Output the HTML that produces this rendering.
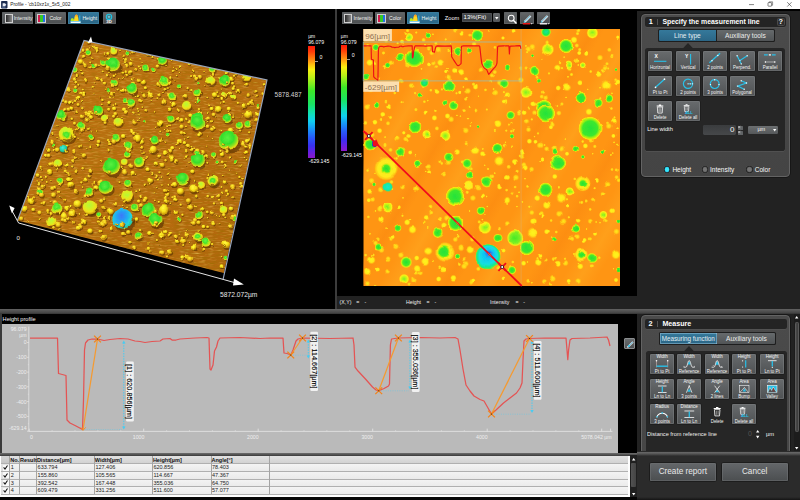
<!DOCTYPE html>
<html><head><meta charset="utf-8"><title>Profile</title>
<style>
html,body{margin:0;padding:0;background:#000;}
body{width:800px;height:500px;overflow:hidden;position:relative;font-family:"Liberation Sans",sans-serif;}
div{font-family:"Liberation Sans",sans-serif;}
svg{overflow:visible;display:block}
</style></head><body>
<div style="position:absolute;left:0px;top:0px;width:800px;height:8.8px;background:#fff"></div>
<svg style="position:absolute;left:0.8px;top:0.7px" width="6.6" height="7.4" viewBox="0 0 6.6 7.6"><rect width="6.6" height="7.6" rx=".8" fill="#1c2c50"/><path d="M1.6 2.4h2.4l1.4 1.5-1.4 1.5h-2.4z" fill="#e8ecf4"/><rect x="1" y="5.8" width="3.6" height=".8" fill="#8aa0c8"/></svg>
<div style="position:absolute;left:10.2px;top:1.5px;font-size:4.8px;line-height:5.76px;color:#222;font-weight:normal;white-space:nowrap;">Profile - 'cb10xz1x_5x5_002</div>
<svg style="position:absolute;left:740px;top:-0.4px" width="60" height="9.6" viewBox="740 0 60 9.6"><path d="M749 4.6h5" stroke="#333" stroke-width=".6"/><rect x="768" y="2.6" width="3.6" height="3.6" rx=".5" fill="none" stroke="#333" stroke-width=".6"/><path d="M769.2 2.6v-.8h3.4v3.4h-.9" fill="none" stroke="#333" stroke-width=".5"/><path d="M787.2 2.2l4.4 4.4M791.6 2.2l-4.4 4.4" stroke="#333" stroke-width=".6"/></svg>
<div style="position:absolute;left:637px;top:11.4px;width:163px;height:298px;background:#222"></div>
<div style="position:absolute;left:337px;top:295.8px;width:300px;height:13.4px;background:#222"></div>
<div style="position:absolute;left:335.4px;top:8.8px;width:1.6px;height:300px;background:linear-gradient(90deg,#2a2a2a,#4e4e4e,#2a2a2a)"></div>
<div style="position:absolute;left:0px;top:308.8px;width:800px;height:4.8px;background:linear-gradient(#626262,#545454 35%,#444 80%,#303030)"></div>
<div style="position:absolute;left:2.6px;top:316px;font-size:5.6px;line-height:6.72px;color:#f4f4f4;font-weight:normal;white-space:nowrap;">Height profile</div>
<div style="position:absolute;left:1.6px;top:324px;width:616.6px;height:128.5px;background:#bababa"></div>
<div style="position:absolute;left:0px;top:313.6px;width:1.6px;height:139px;background:#3a3a3a"></div>
<svg style="position:absolute;left:0;top:0" width="800" height="500" viewBox="0 0 800 500">
<defs>
<radialGradient id="hG"><stop offset="0" stop-color="#24e23c"/><stop offset=".62" stop-color="#3ce82e"/><stop offset=".82" stop-color="#b8f010"/><stop offset=".93" stop-color="#ffe610"/><stop offset="1" stop-color="#ffb414" stop-opacity="0"/></radialGradient>
<radialGradient id="hg"><stop offset="0" stop-color="#22e234"/><stop offset=".55" stop-color="#4cea28"/><stop offset=".8" stop-color="#d8f010"/><stop offset="1" stop-color="#ffc814" stop-opacity="0"/></radialGradient>
<radialGradient id="hy"><stop offset="0" stop-color="#fdf520"/><stop offset=".55" stop-color="#ffe818"/><stop offset="1" stop-color="#ffc010" stop-opacity="0"/></radialGradient>
<radialGradient id="hs"><stop offset="0" stop-color="#ffe61c"/><stop offset=".5" stop-color="#ffd818" stop-opacity=".9"/><stop offset="1" stop-color="#ffb010" stop-opacity="0"/></radialGradient>
<radialGradient id="hyg"><stop offset="0" stop-color="#7cf024"/><stop offset=".45" stop-color="#c8f418"/><stop offset=".75" stop-color="#fff018"/><stop offset="1" stop-color="#ffc010" stop-opacity="0"/></radialGradient>
<radialGradient id="hyG"><stop offset="0" stop-color="#48ea28"/><stop offset=".6" stop-color="#7cf024"/><stop offset=".85" stop-color="#f0f018"/><stop offset="1" stop-color="#ffc010" stop-opacity="0"/></radialGradient>
<radialGradient id="hY"><stop offset="0" stop-color="#f0f428"/><stop offset=".68" stop-color="#ffea1c"/><stop offset=".85" stop-color="#ffd416" stop-opacity=".8"/><stop offset="1" stop-color="#ffb010" stop-opacity="0"/></radialGradient>
<radialGradient id="hc"><stop offset="0" stop-color="#10e8d0"/><stop offset=".7" stop-color="#18e8a0"/><stop offset="1" stop-color="#60f040" stop-opacity="0"/></radialGradient>
<radialGradient id="hgc"><stop offset="0" stop-color="#10e4a0"/><stop offset=".6" stop-color="#20e650"/><stop offset=".85" stop-color="#b0f018"/><stop offset="1" stop-color="#ffc814" stop-opacity="0"/></radialGradient>
<radialGradient id="hB" cx=".5" cy=".5" r=".5" fx=".55" fy=".3"><stop offset="0" stop-color="#2454f0"/><stop offset=".16" stop-color="#1c84f8"/><stop offset=".38" stop-color="#10c4f4"/><stop offset=".7" stop-color="#14e0e0"/><stop offset=".86" stop-color="#18e890"/><stop offset=".95" stop-color="#60ee40"/><stop offset="1" stop-color="#e0f018" stop-opacity="0"/></radialGradient>
<linearGradient id="streak" x1="0" y1="0" x2="1" y2="0"><stop offset="0" stop-color="#ffa820" stop-opacity="0"/><stop offset=".5" stop-color="#ffa820" stop-opacity=".55"/><stop offset="1" stop-color="#ffa820" stop-opacity="0"/></linearGradient>
<linearGradient id="streakd" x1="0" y1="0" x2="1" y2="0"><stop offset="0" stop-color="#fb8a10" stop-opacity="0"/><stop offset=".5" stop-color="#fb8a10" stop-opacity=".6"/><stop offset="1" stop-color="#fb8a10" stop-opacity="0"/></linearGradient>
<clipPath id="hclip"><rect x="363.3" y="29" width="256.7" height="257"/></clipPath>
<filter id="hwob" x="-2%" y="-2%" width="104%" height="104%"><feTurbulence type="fractalNoise" baseFrequency="0.09" numOctaves="2" seed="9" result="t"/><feDisplacementMap in="SourceGraphic" in2="t" scale="3" xChannelSelector="R" yChannelSelector="G"/></filter>
</defs>
<g clip-path="url(#hclip)">
<rect x="363.3" y="29" width="256.7" height="257" fill="#ff9513"/>
<rect x="367.0" y="-60" width="26" height="460" fill="url(#streak)" transform="rotate(30 380 157)"/>
<rect x="421.0" y="-60" width="18" height="460" fill="url(#streakd)" transform="rotate(30 430 157)"/>
<rect x="455.0" y="-60" width="30" height="460" fill="url(#streak)" transform="rotate(30 470 157)"/>
<rect x="510.0" y="-60" width="20" height="460" fill="url(#streakd)" transform="rotate(30 520 157)"/>
<rect x="547.0" y="-60" width="26" height="460" fill="url(#streak)" transform="rotate(30 560 157)"/>
<rect x="599.0" y="-60" width="22" height="460" fill="url(#streakd)" transform="rotate(30 610 157)"/>
<rect x="635.0" y="-60" width="30" height="460" fill="url(#streak)" transform="rotate(30 650 157)"/>
<rect x="318.0" y="-60" width="24" height="460" fill="url(#streakd)" transform="rotate(30 330 157)"/>
<rect x="688.0" y="-60" width="24" height="460" fill="url(#streakd)" transform="rotate(30 700 157)"/>
<g filter="url(#hwob)">
<circle cx="446.9" cy="68.5" r="1.22" fill="url(#hs)"/>
<circle cx="382.9" cy="166.6" r="2.56" fill="url(#hs)"/>
<circle cx="512.8" cy="262.0" r="1.89" fill="url(#hs)"/>
<circle cx="374.0" cy="140.6" r="1.35" fill="url(#hs)"/>
<circle cx="425.7" cy="170.5" r="1.22" fill="url(#hs)"/>
<circle cx="574.9" cy="61.6" r="1.89" fill="url(#hs)"/>
<circle cx="525.0" cy="178.7" r="1.22" fill="url(#hs)"/>
<circle cx="511.4" cy="131.2" r="1.89" fill="url(#hs)"/>
<circle cx="376.4" cy="248.9" r="2.16" fill="url(#hs)"/>
<circle cx="471.2" cy="167.9" r="2.16" fill="url(#hs)"/>
<circle cx="507.1" cy="203.9" r="1.35" fill="url(#hs)"/>
<circle cx="512.5" cy="192.9" r="2.56" fill="url(#hs)"/>
<circle cx="389.3" cy="211.6" r="1.22" fill="url(#hs)"/>
<circle cx="522.0" cy="156.6" r="2.97" fill="url(#hs)"/>
<circle cx="562.3" cy="148.7" r="3.51" fill="url(#hs)"/>
<circle cx="456.5" cy="93.3" r="1.62" fill="url(#hs)"/>
<circle cx="542.4" cy="92.2" r="2.16" fill="url(#hs)"/>
<circle cx="498.2" cy="253.2" r="3.51" fill="url(#hs)"/>
<circle cx="437.8" cy="279.9" r="1.35" fill="url(#hs)"/>
<circle cx="494.8" cy="72.1" r="2.56" fill="url(#hs)"/>
<circle cx="403.2" cy="154.7" r="1.22" fill="url(#hs)"/>
<circle cx="609.3" cy="49.8" r="2.56" fill="url(#hs)"/>
<circle cx="451.1" cy="119.3" r="3.51" fill="url(#hs)"/>
<circle cx="512.1" cy="146.3" r="1.35" fill="url(#hs)"/>
<circle cx="604.9" cy="150.9" r="1.35" fill="url(#hs)"/>
<circle cx="379.9" cy="208.9" r="3.51" fill="url(#hs)"/>
<circle cx="436.9" cy="128.4" r="2.56" fill="url(#hs)"/>
<circle cx="370.2" cy="147.7" r="1.62" fill="url(#hs)"/>
<circle cx="520.0" cy="155.9" r="1.89" fill="url(#hs)"/>
<circle cx="560.0" cy="63.0" r="1.89" fill="url(#hs)"/>
<circle cx="465.8" cy="263.8" r="3.51" fill="url(#hs)"/>
<circle cx="385.0" cy="144.5" r="2.16" fill="url(#hs)"/>
<circle cx="589.3" cy="238.9" r="2.16" fill="url(#hs)"/>
<circle cx="544.3" cy="281.5" r="2.97" fill="url(#hs)"/>
<circle cx="608.2" cy="68.5" r="1.62" fill="url(#hs)"/>
<circle cx="403.0" cy="197.9" r="1.22" fill="url(#hs)"/>
<circle cx="487.9" cy="180.2" r="2.16" fill="url(#hs)"/>
<circle cx="436.3" cy="67.1" r="2.56" fill="url(#hs)"/>
<circle cx="519.7" cy="111.2" r="1.62" fill="url(#hs)"/>
<circle cx="540.2" cy="161.5" r="1.22" fill="url(#hs)"/>
<circle cx="480.7" cy="252.1" r="2.97" fill="url(#hs)"/>
<circle cx="465.8" cy="130.5" r="3.51" fill="url(#hs)"/>
<circle cx="525.9" cy="45.9" r="1.35" fill="url(#hs)"/>
<circle cx="615.1" cy="142.4" r="1.35" fill="url(#hs)"/>
<circle cx="451.0" cy="43.4" r="1.22" fill="url(#hs)"/>
<circle cx="508.7" cy="166.8" r="2.56" fill="url(#hs)"/>
<circle cx="520.7" cy="47.9" r="1.89" fill="url(#hs)"/>
<circle cx="520.8" cy="67.9" r="2.16" fill="url(#hs)"/>
<circle cx="607.7" cy="183.6" r="3.51" fill="url(#hs)"/>
<circle cx="395.8" cy="246.5" r="3.51" fill="url(#hs)"/>
<circle cx="486.8" cy="109.5" r="1.62" fill="url(#hs)"/>
<circle cx="390.5" cy="117.4" r="2.16" fill="url(#hs)"/>
<circle cx="486.3" cy="206.5" r="1.22" fill="url(#hs)"/>
<circle cx="416.7" cy="272.8" r="2.56" fill="url(#hs)"/>
<circle cx="401.8" cy="168.5" r="1.22" fill="url(#hs)"/>
<circle cx="557.4" cy="106.0" r="1.35" fill="url(#hs)"/>
<circle cx="541.7" cy="96.6" r="2.56" fill="url(#hs)"/>
<circle cx="595.7" cy="120.7" r="1.89" fill="url(#hs)"/>
<circle cx="500.0" cy="228.7" r="2.56" fill="url(#hs)"/>
<circle cx="526.5" cy="186.4" r="1.89" fill="url(#hs)"/>
<circle cx="569.6" cy="238.7" r="1.89" fill="url(#hs)"/>
<circle cx="415.4" cy="155.7" r="1.22" fill="url(#hs)"/>
<circle cx="616.4" cy="231.5" r="3.51" fill="url(#hs)"/>
<circle cx="430.5" cy="206.6" r="2.56" fill="url(#hs)"/>
<circle cx="478.3" cy="268.9" r="2.56" fill="url(#hs)"/>
<circle cx="607.5" cy="123.0" r="1.89" fill="url(#hs)"/>
<circle cx="390.5" cy="149.9" r="2.56" fill="url(#hs)"/>
<circle cx="416.5" cy="189.1" r="1.22" fill="url(#hs)"/>
<circle cx="486.5" cy="196.5" r="1.35" fill="url(#hs)"/>
<circle cx="576.9" cy="60.6" r="2.97" fill="url(#hs)"/>
<circle cx="563.6" cy="221.3" r="3.51" fill="url(#hs)"/>
<circle cx="590.8" cy="140.7" r="2.56" fill="url(#hs)"/>
<circle cx="386.6" cy="271.3" r="2.97" fill="url(#hs)"/>
<circle cx="482.4" cy="219.6" r="1.35" fill="url(#hs)"/>
<circle cx="549.0" cy="73.4" r="1.62" fill="url(#hs)"/>
<circle cx="371.5" cy="180.7" r="3.51" fill="url(#hs)"/>
<circle cx="569.8" cy="67.3" r="3.51" fill="url(#hs)"/>
<circle cx="531.8" cy="119.4" r="1.62" fill="url(#hs)"/>
<circle cx="369.9" cy="233.8" r="1.35" fill="url(#hs)"/>
<circle cx="498.5" cy="268.1" r="2.97" fill="url(#hs)"/>
<circle cx="615.6" cy="79.7" r="1.89" fill="url(#hs)"/>
<circle cx="371.6" cy="84.3" r="1.89" fill="url(#hs)"/>
<circle cx="558.9" cy="113.1" r="2.97" fill="url(#hs)"/>
<circle cx="576.8" cy="45.5" r="2.56" fill="url(#hs)"/>
<circle cx="593.0" cy="198.9" r="2.97" fill="url(#hs)"/>
<circle cx="575.0" cy="253.9" r="1.62" fill="url(#hs)"/>
<circle cx="499.8" cy="163.5" r="1.22" fill="url(#hs)"/>
<circle cx="586.6" cy="228.0" r="1.22" fill="url(#hs)"/>
<circle cx="562.0" cy="68.2" r="1.62" fill="url(#hs)"/>
<circle cx="485.0" cy="214.9" r="1.22" fill="url(#hs)"/>
<circle cx="447.5" cy="162.2" r="3.51" fill="url(#hs)"/>
<circle cx="564.1" cy="57.1" r="1.22" fill="url(#hs)"/>
<circle cx="427.7" cy="100.6" r="1.35" fill="url(#hs)"/>
<circle cx="493.7" cy="173.2" r="1.35" fill="url(#hs)"/>
<circle cx="477.3" cy="186.2" r="1.89" fill="url(#hs)"/>
<circle cx="540.8" cy="145.3" r="3.51" fill="url(#hs)"/>
<circle cx="493.7" cy="93.2" r="2.16" fill="url(#hs)"/>
<circle cx="599.3" cy="257.7" r="1.89" fill="url(#hs)"/>
<circle cx="578.3" cy="65.0" r="1.35" fill="url(#hs)"/>
<circle cx="464.4" cy="110.6" r="1.89" fill="url(#hs)"/>
<circle cx="473.5" cy="84.2" r="2.16" fill="url(#hs)"/>
<circle cx="564.0" cy="258.7" r="1.62" fill="url(#hs)"/>
<circle cx="603.6" cy="194.1" r="2.56" fill="url(#hs)"/>
<circle cx="400.9" cy="255.1" r="3.51" fill="url(#hs)"/>
<circle cx="420.4" cy="272.9" r="2.97" fill="url(#hs)"/>
<circle cx="589.7" cy="71.5" r="1.89" fill="url(#hs)"/>
<circle cx="405.6" cy="140.0" r="2.97" fill="url(#hs)"/>
<circle cx="450.8" cy="79.9" r="2.56" fill="url(#hs)"/>
<circle cx="388.0" cy="123.3" r="2.56" fill="url(#hs)"/>
<circle cx="505.5" cy="142.3" r="1.22" fill="url(#hs)"/>
<circle cx="462.3" cy="161.9" r="2.16" fill="url(#hs)"/>
<circle cx="494.9" cy="46.4" r="1.89" fill="url(#hs)"/>
<circle cx="611.8" cy="56.7" r="2.16" fill="url(#hs)"/>
<circle cx="433.7" cy="261.0" r="1.62" fill="url(#hs)"/>
<circle cx="433.3" cy="63.0" r="2.97" fill="url(#hs)"/>
<circle cx="580.7" cy="202.4" r="2.16" fill="url(#hs)"/>
<circle cx="467.8" cy="166.8" r="3.51" fill="url(#hs)"/>
<circle cx="542.8" cy="52.8" r="1.22" fill="url(#hs)"/>
<circle cx="568.0" cy="76.8" r="1.35" fill="url(#hs)"/>
<circle cx="432.9" cy="34.3" r="1.35" fill="url(#hs)"/>
<circle cx="568.5" cy="51.4" r="1.89" fill="url(#hs)"/>
<circle cx="381.5" cy="250.0" r="3.51" fill="url(#hs)"/>
<circle cx="367.4" cy="283.5" r="2.97" fill="url(#hs)"/>
<circle cx="600.3" cy="98.3" r="1.62" fill="url(#hs)"/>
<circle cx="375.5" cy="210.9" r="1.35" fill="url(#hs)"/>
<circle cx="611.2" cy="96.8" r="1.62" fill="url(#hs)"/>
<circle cx="415.9" cy="109.6" r="2.16" fill="url(#hs)"/>
<circle cx="499.7" cy="82.5" r="3.51" fill="url(#hs)"/>
<circle cx="491.8" cy="75.4" r="2.56" fill="url(#hs)"/>
<circle cx="569.0" cy="283.6" r="1.22" fill="url(#hs)"/>
<circle cx="368.4" cy="216.9" r="1.89" fill="url(#hs)"/>
<circle cx="495.4" cy="92.6" r="3.51" fill="url(#hs)"/>
<circle cx="391.5" cy="238.8" r="2.97" fill="url(#hs)"/>
<circle cx="531.6" cy="169.2" r="2.97" fill="url(#hs)"/>
<circle cx="611.4" cy="108.5" r="1.89" fill="url(#hs)"/>
<circle cx="614.5" cy="117.4" r="1.62" fill="url(#hs)"/>
<circle cx="467.5" cy="118.6" r="1.22" fill="url(#hs)"/>
<circle cx="577.5" cy="33.6" r="2.16" fill="url(#hs)"/>
<circle cx="474.1" cy="44.1" r="2.97" fill="url(#hs)"/>
<circle cx="586.1" cy="201.0" r="2.16" fill="url(#hs)"/>
<circle cx="516.9" cy="206.6" r="1.22" fill="url(#hs)"/>
<circle cx="481.4" cy="70.2" r="3.51" fill="url(#hs)"/>
<circle cx="365.4" cy="122.9" r="2.56" fill="url(#hs)"/>
<circle cx="612.0" cy="169.5" r="1.89" fill="url(#hs)"/>
<circle cx="373.3" cy="255.0" r="1.89" fill="url(#hs)"/>
<circle cx="455.3" cy="30.3" r="2.97" fill="url(#hs)"/>
<circle cx="385.9" cy="101.1" r="1.89" fill="url(#hs)"/>
<circle cx="427.7" cy="227.9" r="1.35" fill="url(#hs)"/>
<circle cx="431.7" cy="52.9" r="2.97" fill="url(#hs)"/>
<circle cx="513.8" cy="130.5" r="2.16" fill="url(#hs)"/>
<circle cx="441.9" cy="89.4" r="1.62" fill="url(#hs)"/>
<circle cx="531.8" cy="212.6" r="2.97" fill="url(#hs)"/>
<circle cx="559.0" cy="213.8" r="3.51" fill="url(#hs)"/>
<circle cx="402.5" cy="214.7" r="1.62" fill="url(#hs)"/>
<circle cx="375.6" cy="243.0" r="2.97" fill="url(#hs)"/>
<circle cx="551.3" cy="237.1" r="1.62" fill="url(#hs)"/>
<circle cx="596.1" cy="222.0" r="1.22" fill="url(#hs)"/>
<circle cx="574.8" cy="178.9" r="1.89" fill="url(#hs)"/>
<circle cx="386.2" cy="40.7" r="2.56" fill="url(#hs)"/>
<circle cx="608.7" cy="126.0" r="3.51" fill="url(#hs)"/>
<circle cx="506.6" cy="190.1" r="1.89" fill="url(#hs)"/>
<circle cx="489.0" cy="30.8" r="1.35" fill="url(#hs)"/>
<circle cx="554.9" cy="158.3" r="1.35" fill="url(#hs)"/>
<circle cx="532.3" cy="46.8" r="3.51" fill="url(#hs)"/>
<circle cx="428.7" cy="49.0" r="2.16" fill="url(#hs)"/>
<circle cx="424.3" cy="222.9" r="1.89" fill="url(#hs)"/>
<circle cx="552.8" cy="278.8" r="3.51" fill="url(#hs)"/>
<circle cx="579.7" cy="49.6" r="2.16" fill="url(#hs)"/>
<circle cx="559.7" cy="187.3" r="1.89" fill="url(#hs)"/>
<circle cx="384.2" cy="67.6" r="2.16" fill="url(#hs)"/>
<circle cx="530.3" cy="206.7" r="1.62" fill="url(#hs)"/>
<circle cx="367.7" cy="45.5" r="2.16" fill="url(#hs)"/>
<circle cx="612.0" cy="55.4" r="1.89" fill="url(#hs)"/>
<circle cx="536.5" cy="104.2" r="2.16" fill="url(#hs)"/>
<circle cx="482.8" cy="148.9" r="1.35" fill="url(#hs)"/>
<circle cx="617.3" cy="170.0" r="2.16" fill="url(#hs)"/>
<circle cx="613.4" cy="268.7" r="1.22" fill="url(#hs)"/>
<circle cx="438.2" cy="49.5" r="3.51" fill="url(#hs)"/>
<circle cx="617.5" cy="128.6" r="1.89" fill="url(#hs)"/>
<circle cx="383.5" cy="53.0" r="2.16" fill="url(#hs)"/>
<circle cx="607.0" cy="63.8" r="2.16" fill="url(#hs)"/>
<circle cx="590.2" cy="209.4" r="1.89" fill="url(#hs)"/>
<circle cx="491.2" cy="253.4" r="2.97" fill="url(#hs)"/>
<circle cx="370.8" cy="30.9" r="3.51" fill="url(#hs)"/>
<circle cx="538.0" cy="133.4" r="1.62" fill="url(#hs)"/>
<circle cx="470.4" cy="125.9" r="1.35" fill="url(#hs)"/>
<circle cx="578.3" cy="30.4" r="2.56" fill="url(#hs)"/>
<circle cx="578.1" cy="60.6" r="1.89" fill="url(#hs)"/>
<circle cx="546.0" cy="259.9" r="2.16" fill="url(#hs)"/>
<circle cx="428.9" cy="46.6" r="2.97" fill="url(#hs)"/>
<circle cx="618.7" cy="180.2" r="2.56" fill="url(#hs)"/>
<circle cx="600.0" cy="222.7" r="1.22" fill="url(#hs)"/>
<circle cx="435.9" cy="43.2" r="2.16" fill="url(#hs)"/>
<circle cx="526.1" cy="68.0" r="2.16" fill="url(#hs)"/>
<circle cx="475.5" cy="110.5" r="2.56" fill="url(#hs)"/>
<circle cx="564.3" cy="139.1" r="1.22" fill="url(#hs)"/>
<circle cx="571.1" cy="190.9" r="1.89" fill="url(#hs)"/>
<circle cx="547.6" cy="42.6" r="2.97" fill="url(#hs)"/>
<circle cx="479.2" cy="221.9" r="2.16" fill="url(#hs)"/>
<circle cx="488.1" cy="262.5" r="1.62" fill="url(#hs)"/>
<circle cx="408.0" cy="135.8" r="2.16" fill="url(#hs)"/>
<circle cx="440.3" cy="218.5" r="2.16" fill="url(#hs)"/>
<circle cx="467.9" cy="90.9" r="3.51" fill="url(#hs)"/>
<circle cx="506.3" cy="130.6" r="1.62" fill="url(#hs)"/>
<circle cx="528.2" cy="49.2" r="3.51" fill="url(#hs)"/>
<circle cx="504.6" cy="145.5" r="2.56" fill="url(#hs)"/>
<circle cx="618.1" cy="144.7" r="1.62" fill="url(#hs)"/>
<circle cx="503.9" cy="92.2" r="1.62" fill="url(#hs)"/>
<circle cx="451.5" cy="53.2" r="1.89" fill="url(#hs)"/>
<circle cx="458.2" cy="236.4" r="1.89" fill="url(#hs)"/>
<circle cx="590.3" cy="221.2" r="2.97" fill="url(#hs)"/>
<circle cx="461.9" cy="220.2" r="1.89" fill="url(#hs)"/>
<circle cx="460.4" cy="116.2" r="1.22" fill="url(#hs)"/>
<circle cx="491.3" cy="176.4" r="2.56" fill="url(#hs)"/>
<circle cx="396.5" cy="158.4" r="1.89" fill="url(#hs)"/>
<circle cx="388.1" cy="258.7" r="2.97" fill="url(#hs)"/>
<circle cx="466.2" cy="143.7" r="2.16" fill="url(#hs)"/>
<circle cx="580.5" cy="252.6" r="1.22" fill="url(#hs)"/>
<circle cx="396.9" cy="138.4" r="3.51" fill="url(#hs)"/>
<circle cx="610.9" cy="154.9" r="1.35" fill="url(#hs)"/>
<circle cx="464.1" cy="266.3" r="3.51" fill="url(#hs)"/>
<circle cx="611.9" cy="93.4" r="1.35" fill="url(#hs)"/>
<circle cx="421.5" cy="68.8" r="1.35" fill="url(#hs)"/>
<circle cx="604.1" cy="214.0" r="3.51" fill="url(#hs)"/>
<circle cx="386.1" cy="228.1" r="1.22" fill="url(#hs)"/>
<circle cx="563.6" cy="89.3" r="1.22" fill="url(#hs)"/>
<circle cx="528.8" cy="107.5" r="1.62" fill="url(#hs)"/>
<circle cx="523.9" cy="164.7" r="2.97" fill="url(#hs)"/>
<circle cx="542.3" cy="58.6" r="1.35" fill="url(#hs)"/>
<circle cx="440.9" cy="270.6" r="1.89" fill="url(#hs)"/>
<circle cx="463.3" cy="87.0" r="1.22" fill="url(#hs)"/>
<circle cx="367.2" cy="106.9" r="3.51" fill="url(#hs)"/>
<circle cx="435.4" cy="110.7" r="1.89" fill="url(#hs)"/>
<circle cx="485.5" cy="89.9" r="1.89" fill="url(#hs)"/>
<circle cx="372.0" cy="135.0" r="2.16" fill="url(#hs)"/>
<circle cx="378.6" cy="79.5" r="2.97" fill="url(#hs)"/>
<circle cx="385.1" cy="88.1" r="2.97" fill="url(#hs)"/>
<circle cx="600.0" cy="87.8" r="1.22" fill="url(#hs)"/>
<circle cx="541.6" cy="213.2" r="2.56" fill="url(#hs)"/>
<circle cx="538.2" cy="80.5" r="2.16" fill="url(#hs)"/>
<circle cx="552.6" cy="158.7" r="1.89" fill="url(#hs)"/>
<circle cx="490.7" cy="81.1" r="1.89" fill="url(#hs)"/>
<circle cx="423.2" cy="86.5" r="2.16" fill="url(#hs)"/>
<circle cx="392.2" cy="189.0" r="1.62" fill="url(#hs)"/>
<circle cx="592.7" cy="153.7" r="1.22" fill="url(#hs)"/>
<circle cx="606.0" cy="67.3" r="2.97" fill="url(#hs)"/>
<circle cx="378.3" cy="36.0" r="1.62" fill="url(#hs)"/>
<circle cx="470.2" cy="211.0" r="1.62" fill="url(#hs)"/>
<circle cx="464.6" cy="259.0" r="2.56" fill="url(#hs)"/>
<circle cx="551.0" cy="284.4" r="1.62" fill="url(#hs)"/>
<circle cx="448.3" cy="77.3" r="3.51" fill="url(#hs)"/>
<circle cx="372.6" cy="199.4" r="2.97" fill="url(#hs)"/>
<circle cx="578.1" cy="281.2" r="3.51" fill="url(#hs)"/>
<circle cx="407.6" cy="30.7" r="2.16" fill="url(#hs)"/>
<circle cx="385.1" cy="137.1" r="1.35" fill="url(#hs)"/>
<circle cx="507.3" cy="223.5" r="2.97" fill="url(#hs)"/>
<circle cx="455.3" cy="239.5" r="2.97" fill="url(#hs)"/>
<circle cx="386.8" cy="209.8" r="1.89" fill="url(#hs)"/>
<circle cx="459.4" cy="264.5" r="1.89" fill="url(#hs)"/>
<circle cx="446.8" cy="218.0" r="3.51" fill="url(#hs)"/>
<circle cx="372.2" cy="134.8" r="2.97" fill="url(#hs)"/>
<circle cx="374.8" cy="38.9" r="1.35" fill="url(#hs)"/>
<circle cx="568.9" cy="45.8" r="1.89" fill="url(#hs)"/>
<circle cx="554.7" cy="259.1" r="2.56" fill="url(#hs)"/>
<circle cx="456.9" cy="115.4" r="1.22" fill="url(#hs)"/>
<circle cx="431.2" cy="212.7" r="2.56" fill="url(#hs)"/>
<circle cx="599.7" cy="105.8" r="1.35" fill="url(#hs)"/>
<circle cx="370.7" cy="89.6" r="3.51" fill="url(#hs)"/>
<circle cx="546.6" cy="148.8" r="2.97" fill="url(#hs)"/>
<circle cx="565.5" cy="263.0" r="3.51" fill="url(#hs)"/>
<circle cx="398.3" cy="156.6" r="1.22" fill="url(#hs)"/>
<circle cx="568.8" cy="218.3" r="1.62" fill="url(#hs)"/>
<circle cx="519.0" cy="113.6" r="2.56" fill="url(#hs)"/>
<circle cx="481.8" cy="229.9" r="1.35" fill="url(#hs)"/>
<circle cx="494.8" cy="129.9" r="1.62" fill="url(#hs)"/>
<circle cx="427.4" cy="46.5" r="1.22" fill="url(#hs)"/>
<circle cx="487.1" cy="168.9" r="1.62" fill="url(#hs)"/>
<circle cx="614.0" cy="255.3" r="1.35" fill="url(#hs)"/>
<circle cx="431.9" cy="51.4" r="1.35" fill="url(#hs)"/>
<circle cx="471.7" cy="282.1" r="3.51" fill="url(#hs)"/>
<circle cx="408.6" cy="63.9" r="3.51" fill="url(#hs)"/>
<circle cx="522.4" cy="201.9" r="1.35" fill="url(#hs)"/>
<circle cx="562.9" cy="105.0" r="2.16" fill="url(#hs)"/>
<circle cx="508.8" cy="125.1" r="2.16" fill="url(#hs)"/>
<circle cx="415.2" cy="93.1" r="1.89" fill="url(#hs)"/>
<circle cx="424.4" cy="101.7" r="1.89" fill="url(#hs)"/>
<circle cx="447.6" cy="131.0" r="1.89" fill="url(#hs)"/>
<circle cx="493.6" cy="89.0" r="1.35" fill="url(#hs)"/>
<circle cx="530.8" cy="282.7" r="1.35" fill="url(#hs)"/>
<circle cx="365.6" cy="255.1" r="1.89" fill="url(#hs)"/>
<circle cx="578.4" cy="263.2" r="1.22" fill="url(#hs)"/>
<circle cx="587.7" cy="89.4" r="1.22" fill="url(#hs)"/>
<circle cx="412.7" cy="278.1" r="1.89" fill="url(#hs)"/>
<circle cx="601.2" cy="124.9" r="1.62" fill="url(#hs)"/>
<circle cx="478.8" cy="96.3" r="1.22" fill="url(#hs)"/>
<circle cx="391.4" cy="182.0" r="2.56" fill="url(#hs)"/>
<circle cx="419.9" cy="124.0" r="1.62" fill="url(#hs)"/>
<circle cx="375.7" cy="285.0" r="1.22" fill="url(#hs)"/>
<circle cx="517.1" cy="196.2" r="1.89" fill="url(#hs)"/>
<circle cx="571.9" cy="238.8" r="2.97" fill="url(#hs)"/>
<circle cx="537.1" cy="77.2" r="2.16" fill="url(#hs)"/>
<circle cx="384.3" cy="38.0" r="3.51" fill="url(#hs)"/>
<circle cx="504.0" cy="46.1" r="1.35" fill="url(#hs)"/>
<circle cx="567.0" cy="199.3" r="1.62" fill="url(#hs)"/>
<circle cx="527.2" cy="53.2" r="1.62" fill="url(#hs)"/>
<circle cx="465.7" cy="99.1" r="2.16" fill="url(#hs)"/>
<circle cx="534.5" cy="136.6" r="1.22" fill="url(#hs)"/>
<circle cx="444.0" cy="174.5" r="2.56" fill="url(#hs)"/>
<circle cx="469.9" cy="34.6" r="2.56" fill="url(#hs)"/>
<circle cx="528.5" cy="129.6" r="2.97" fill="url(#hs)"/>
<circle cx="416.3" cy="31.5" r="1.62" fill="url(#hs)"/>
<circle cx="472.3" cy="239.2" r="2.97" fill="url(#hs)"/>
<circle cx="511.5" cy="123.0" r="1.62" fill="url(#hs)"/>
<circle cx="397.6" cy="43.2" r="1.62" fill="url(#hs)"/>
<circle cx="527.5" cy="262.0" r="1.35" fill="url(#hs)"/>
<circle cx="510.3" cy="266.4" r="1.62" fill="url(#hs)"/>
<circle cx="401.6" cy="102.2" r="1.62" fill="url(#hs)"/>
<circle cx="600.0" cy="57.7" r="3.51" fill="url(#hs)"/>
<circle cx="556.3" cy="232.0" r="1.89" fill="url(#hs)"/>
<circle cx="441.3" cy="243.5" r="1.22" fill="url(#hs)"/>
<circle cx="612.8" cy="153.1" r="1.22" fill="url(#hs)"/>
<circle cx="519.1" cy="192.3" r="1.35" fill="url(#hs)"/>
<circle cx="594.6" cy="188.2" r="1.62" fill="url(#hs)"/>
<circle cx="527.5" cy="248.4" r="2.97" fill="url(#hs)"/>
<circle cx="520.9" cy="80.0" r="3.51" fill="url(#hs)"/>
<circle cx="411.1" cy="85.6" r="2.97" fill="url(#hs)"/>
<circle cx="603.4" cy="69.9" r="2.56" fill="url(#hs)"/>
<circle cx="395.8" cy="93.0" r="1.89" fill="url(#hs)"/>
<circle cx="375.0" cy="173.4" r="1.22" fill="url(#hs)"/>
<circle cx="534.5" cy="112.7" r="2.97" fill="url(#hs)"/>
<circle cx="517.1" cy="170.3" r="2.16" fill="url(#hs)"/>
<circle cx="529.7" cy="108.6" r="1.89" fill="url(#hs)"/>
<circle cx="472.9" cy="198.0" r="3.51" fill="url(#hs)"/>
<circle cx="492.7" cy="75.6" r="1.22" fill="url(#hs)"/>
<circle cx="522.0" cy="154.8" r="1.89" fill="url(#hs)"/>
<circle cx="478.2" cy="187.7" r="3.51" fill="url(#hs)"/>
<circle cx="577.4" cy="236.7" r="2.97" fill="url(#hs)"/>
<circle cx="391.8" cy="62.8" r="2.97" fill="url(#hs)"/>
<circle cx="457.5" cy="234.6" r="1.22" fill="url(#hs)"/>
<circle cx="374.8" cy="63.2" r="2.56" fill="url(#hs)"/>
<circle cx="562.4" cy="160.4" r="1.22" fill="url(#hs)"/>
<circle cx="555.9" cy="258.2" r="1.62" fill="url(#hs)"/>
<circle cx="371.1" cy="46.9" r="1.35" fill="url(#hs)"/>
<circle cx="413.8" cy="280.3" r="3.51" fill="url(#hs)"/>
<circle cx="437.8" cy="236.8" r="1.62" fill="url(#hs)"/>
<circle cx="539.1" cy="213.9" r="1.89" fill="url(#hs)"/>
<circle cx="381.2" cy="119.5" r="2.16" fill="url(#hs)"/>
<circle cx="404.9" cy="258.6" r="2.16" fill="url(#hs)"/>
<circle cx="594.8" cy="146.4" r="2.16" fill="url(#hs)"/>
<circle cx="492.3" cy="264.6" r="1.89" fill="url(#hs)"/>
<circle cx="515.1" cy="187.0" r="1.89" fill="url(#hs)"/>
<circle cx="445.7" cy="39.4" r="1.62" fill="url(#hs)"/>
<circle cx="467.2" cy="192.3" r="2.16" fill="url(#hs)"/>
<circle cx="537.5" cy="258.3" r="1.62" fill="url(#hs)"/>
<circle cx="566.1" cy="97.4" r="1.22" fill="url(#hs)"/>
<circle cx="526.4" cy="121.7" r="3.51" fill="url(#hs)"/>
<circle cx="505.8" cy="177.9" r="1.35" fill="url(#hs)"/>
<circle cx="428.6" cy="166.6" r="2.97" fill="url(#hs)"/>
<circle cx="552.3" cy="124.7" r="2.97" fill="url(#hs)"/>
<circle cx="616.6" cy="177.2" r="2.56" fill="url(#hs)"/>
<circle cx="448.7" cy="50.8" r="1.89" fill="url(#hs)"/>
<circle cx="409.5" cy="219.6" r="1.22" fill="url(#hs)"/>
<circle cx="439.9" cy="161.6" r="2.16" fill="url(#hs)"/>
<circle cx="527.2" cy="280.9" r="2.56" fill="url(#hs)"/>
<circle cx="551.1" cy="220.5" r="1.89" fill="url(#hs)"/>
<circle cx="402.5" cy="187.1" r="2.97" fill="url(#hs)"/>
<circle cx="470.8" cy="122.8" r="1.22" fill="url(#hs)"/>
<circle cx="398.1" cy="88.0" r="1.22" fill="url(#hs)"/>
<circle cx="370.2" cy="30.7" r="2.56" fill="url(#hs)"/>
<circle cx="441.8" cy="163.4" r="1.89" fill="url(#hs)"/>
<circle cx="469.7" cy="106.8" r="1.62" fill="url(#hs)"/>
<circle cx="416.5" cy="189.1" r="3.51" fill="url(#hs)"/>
<circle cx="404.9" cy="33.6" r="1.89" fill="url(#hs)"/>
<circle cx="544.6" cy="145.0" r="1.35" fill="url(#hs)"/>
<circle cx="526.9" cy="252.2" r="2.16" fill="url(#hs)"/>
<circle cx="466.8" cy="97.4" r="1.22" fill="url(#hs)"/>
<circle cx="378.8" cy="239.3" r="2.56" fill="url(#hs)"/>
<circle cx="515.9" cy="177.5" r="3.51" fill="url(#hs)"/>
<circle cx="427.7" cy="260.4" r="1.22" fill="url(#hs)"/>
<circle cx="380.2" cy="36.4" r="1.62" fill="url(#hs)"/>
<circle cx="425.0" cy="44.9" r="1.35" fill="url(#hs)"/>
<circle cx="367.6" cy="170.5" r="1.89" fill="url(#hs)"/>
<circle cx="400.7" cy="80.9" r="2.97" fill="url(#hs)"/>
<circle cx="571.5" cy="74.5" r="2.16" fill="url(#hs)"/>
<circle cx="380.7" cy="189.6" r="3.51" fill="url(#hs)"/>
<circle cx="546.6" cy="31.6" r="2.97" fill="url(#hs)"/>
<circle cx="554.2" cy="148.6" r="3.51" fill="url(#hs)"/>
<circle cx="409.1" cy="284.1" r="2.16" fill="url(#hs)"/>
<circle cx="423.6" cy="39.9" r="2.56" fill="url(#hs)"/>
<circle cx="591.3" cy="265.9" r="2.16" fill="url(#hs)"/>
<circle cx="545.6" cy="97.8" r="2.97" fill="url(#hs)"/>
<circle cx="539.0" cy="263.9" r="2.16" fill="url(#hs)"/>
<circle cx="439.7" cy="266.8" r="1.89" fill="url(#hs)"/>
<circle cx="386.2" cy="159.4" r="1.62" fill="url(#hs)"/>
<circle cx="430.8" cy="90.2" r="1.89" fill="url(#hs)"/>
<circle cx="604.9" cy="220.3" r="2.56" fill="url(#hs)"/>
<circle cx="413.3" cy="129.1" r="1.89" fill="url(#hs)"/>
<circle cx="461.1" cy="247.2" r="3.51" fill="url(#hs)"/>
<circle cx="484.7" cy="165.3" r="1.22" fill="url(#hs)"/>
<circle cx="582.7" cy="141.5" r="1.89" fill="url(#hs)"/>
<circle cx="386.2" cy="168.6" r="12.39" fill="url(#hY)"/>
<circle cx="468.5" cy="185.2" r="5.19" fill="url(#hY)"/>
<circle cx="582.8" cy="183.5" r="8.26" fill="url(#hY)"/>
<circle cx="445.0" cy="252.1" r="10.38" fill="url(#hY)"/>
<circle cx="581.3" cy="254.8" r="6.96" fill="url(#hY)"/>
<circle cx="369.6" cy="62.6" r="3.78" fill="url(#hy)"/>
<circle cx="440.5" cy="62.6" r="3.78" fill="url(#hy)"/>
<circle cx="454.5" cy="70.5" r="3.07" fill="url(#hy)"/>
<circle cx="461.0" cy="72.2" r="3.78" fill="url(#hy)"/>
<circle cx="437.0" cy="91.5" r="3.07" fill="url(#hy)"/>
<circle cx="388.5" cy="106.4" r="2.95" fill="url(#hy)"/>
<circle cx="402.0" cy="41.6" r="2.48" fill="url(#hy)"/>
<circle cx="461.5" cy="33.8" r="2.48" fill="url(#hy)"/>
<circle cx="429.0" cy="64.4" r="2.48" fill="url(#hy)"/>
<circle cx="465.9" cy="79.2" r="2.48" fill="url(#hy)"/>
<circle cx="475.5" cy="87.0" r="2.95" fill="url(#hy)"/>
<circle cx="459.8" cy="92.4" r="2.12" fill="url(#hy)"/>
<circle cx="445.8" cy="71.4" r="2.12" fill="url(#hy)"/>
<circle cx="574.0" cy="39.9" r="3.78" fill="url(#hy)"/>
<circle cx="606.4" cy="85.4" r="5.78" fill="url(#hy)"/>
<circle cx="598.5" cy="74.0" r="3.78" fill="url(#hy)"/>
<circle cx="557.4" cy="67.9" r="3.78" fill="url(#hy)"/>
<circle cx="567.0" cy="87.0" r="4.60" fill="url(#hy)"/>
<circle cx="580.0" cy="82.8" r="3.07" fill="url(#hy)"/>
<circle cx="617.8" cy="81.9" r="2.95" fill="url(#hy)"/>
<circle cx="558.2" cy="88.0" r="2.95" fill="url(#hy)"/>
<circle cx="579.2" cy="53.0" r="2.48" fill="url(#hy)"/>
<circle cx="586.2" cy="53.9" r="2.48" fill="url(#hy)"/>
<circle cx="507.5" cy="95.0" r="3.30" fill="url(#hy)"/>
<circle cx="504.9" cy="102.0" r="2.95" fill="url(#hy)"/>
<circle cx="533.8" cy="103.8" r="2.95" fill="url(#hy)"/>
<circle cx="513.6" cy="31.0" r="2.48" fill="url(#hy)"/>
<circle cx="503.0" cy="38.0" r="2.12" fill="url(#hy)"/>
<circle cx="617.8" cy="37.2" r="2.12" fill="url(#hy)"/>
<circle cx="475.5" cy="150.2" r="4.60" fill="url(#hy)"/>
<circle cx="434.4" cy="117.9" r="3.07" fill="url(#hy)"/>
<circle cx="447.5" cy="116.0" r="3.07" fill="url(#hy)"/>
<circle cx="425.6" cy="112.6" r="2.48" fill="url(#hy)"/>
<circle cx="374.9" cy="122.2" r="2.95" fill="url(#hy)"/>
<circle cx="379.6" cy="130.7" r="2.95" fill="url(#hy)"/>
<circle cx="382.8" cy="114.4" r="2.95" fill="url(#hy)"/>
<circle cx="408.6" cy="136.6" r="2.95" fill="url(#hy)"/>
<circle cx="410.2" cy="152.5" r="2.48" fill="url(#hy)"/>
<circle cx="457.1" cy="152.0" r="3.30" fill="url(#hy)"/>
<circle cx="482.5" cy="153.8" r="2.95" fill="url(#hy)"/>
<circle cx="498.2" cy="124.0" r="3.30" fill="url(#hy)"/>
<circle cx="429.1" cy="171.2" r="2.48" fill="url(#hy)"/>
<circle cx="499.0" cy="161.0" r="5.43" fill="url(#hy)"/>
<circle cx="369.6" cy="191.4" r="2.95" fill="url(#hy)"/>
<circle cx="403.8" cy="132.8" r="2.12" fill="url(#hy)"/>
<circle cx="497.9" cy="123.7" r="4.13" fill="url(#hy)"/>
<circle cx="529.4" cy="141.2" r="2.95" fill="url(#hy)"/>
<circle cx="535.5" cy="141.8" r="2.48" fill="url(#hy)"/>
<circle cx="585.4" cy="145.9" r="2.95" fill="url(#hy)"/>
<circle cx="522.4" cy="152.5" r="2.95" fill="url(#hy)"/>
<circle cx="515.4" cy="161.6" r="2.95" fill="url(#hy)"/>
<circle cx="525.0" cy="167.8" r="3.30" fill="url(#hy)"/>
<circle cx="613.4" cy="120.5" r="2.95" fill="url(#hy)"/>
<circle cx="613.4" cy="135.9" r="2.48" fill="url(#hy)"/>
<circle cx="550.9" cy="127.2" r="2.48" fill="url(#hy)"/>
<circle cx="596.8" cy="180.0" r="2.48" fill="url(#hy)"/>
<circle cx="554.8" cy="176.5" r="2.95" fill="url(#hy)"/>
<circle cx="524.1" cy="112.6" r="2.95" fill="url(#hy)"/>
<circle cx="588.9" cy="111.8" r="3.78" fill="url(#hy)"/>
<circle cx="542.5" cy="159.0" r="2.12" fill="url(#hy)"/>
<circle cx="567.0" cy="153.8" r="2.48" fill="url(#hy)"/>
<circle cx="507.5" cy="177.4" r="2.95" fill="url(#hy)"/>
<circle cx="499.6" cy="187.0" r="2.95" fill="url(#hy)"/>
<circle cx="412.5" cy="229.6" r="4.48" fill="url(#hy)"/>
<circle cx="407.2" cy="222.3" r="3.42" fill="url(#hy)"/>
<circle cx="428.2" cy="250.6" r="4.96" fill="url(#hy)"/>
<circle cx="425.1" cy="262.2" r="4.48" fill="url(#hy)"/>
<circle cx="417.1" cy="268.5" r="4.01" fill="url(#hy)"/>
<circle cx="416.7" cy="258.0" r="2.95" fill="url(#hy)"/>
<circle cx="470.2" cy="249.6" r="4.48" fill="url(#hy)"/>
<circle cx="444.0" cy="225.4" r="3.42" fill="url(#hy)"/>
<circle cx="371.5" cy="260.0" r="4.48" fill="url(#hy)"/>
<circle cx="367.3" cy="271.6" r="4.01" fill="url(#hy)"/>
<circle cx="377.8" cy="269.5" r="2.48" fill="url(#hy)"/>
<circle cx="381.0" cy="219.1" r="3.42" fill="url(#hy)"/>
<circle cx="398.8" cy="207.2" r="2.48" fill="url(#hy)"/>
<circle cx="393.6" cy="237.0" r="2.48" fill="url(#hy)"/>
<circle cx="442.9" cy="269.5" r="3.42" fill="url(#hy)"/>
<circle cx="453.4" cy="277.9" r="3.42" fill="url(#hy)"/>
<circle cx="473.3" cy="280.6" r="2.48" fill="url(#hy)"/>
<circle cx="438.7" cy="279.0" r="2.95" fill="url(#hy)"/>
<circle cx="427.2" cy="218.5" r="2.95" fill="url(#hy)"/>
<circle cx="368.8" cy="200.2" r="2.48" fill="url(#hy)"/>
<circle cx="482.8" cy="196.0" r="2.95" fill="url(#hy)"/>
<circle cx="533.0" cy="232.8" r="6.14" fill="url(#hy)"/>
<circle cx="615.9" cy="254.8" r="4.96" fill="url(#hy)"/>
<circle cx="561.4" cy="198.1" r="5.43" fill="url(#hy)"/>
<circle cx="546.7" cy="205.1" r="4.48" fill="url(#hy)"/>
<circle cx="533.0" cy="221.2" r="3.42" fill="url(#hy)"/>
<circle cx="537.2" cy="198.1" r="3.42" fill="url(#hy)"/>
<circle cx="506.8" cy="200.2" r="4.01" fill="url(#hy)"/>
<circle cx="580.3" cy="266.4" r="3.42" fill="url(#hy)"/>
<circle cx="538.3" cy="262.2" r="4.01" fill="url(#hy)"/>
<circle cx="558.2" cy="264.3" r="2.95" fill="url(#hy)"/>
<circle cx="546.7" cy="231.7" r="2.95" fill="url(#hy)"/>
<circle cx="578.2" cy="220.2" r="2.95" fill="url(#hy)"/>
<circle cx="542.5" cy="216.0" r="2.48" fill="url(#hy)"/>
<circle cx="611.7" cy="210.8" r="2.95" fill="url(#hy)"/>
<circle cx="595.0" cy="233.8" r="2.48" fill="url(#hy)"/>
<circle cx="503.6" cy="250.6" r="2.48" fill="url(#hy)"/>
<circle cx="523.6" cy="263.2" r="2.95" fill="url(#hy)"/>
<circle cx="540.4" cy="255.9" r="2.48" fill="url(#hy)"/>
<circle cx="503.6" cy="278.5" r="2.48" fill="url(#hy)"/>
<circle cx="568.7" cy="281.0" r="2.48" fill="url(#hy)"/>
<circle cx="616.0" cy="280.0" r="2.48" fill="url(#hy)"/>
<circle cx="584.5" cy="240.0" r="2.48" fill="url(#hy)"/>
<circle cx="567.7" cy="205.5" r="2.48" fill="url(#hy)"/>
<circle cx="409.0" cy="37.2" r="4.60" fill="url(#hyg)"/>
<circle cx="592.4" cy="32.9" r="6.14" fill="url(#hyg)"/>
<circle cx="547.8" cy="49.5" r="6.61" fill="url(#hyg)"/>
<circle cx="525.9" cy="92.4" r="6.14" fill="url(#hyg)"/>
<circle cx="569.6" cy="65.2" r="4.13" fill="url(#hyg)"/>
<circle cx="582.8" cy="65.2" r="3.30" fill="url(#hyg)"/>
<circle cx="426.5" cy="134.2" r="4.60" fill="url(#hyg)"/>
<circle cx="445.2" cy="135.9" r="5.78" fill="url(#hyg)"/>
<circle cx="569.6" cy="191.4" r="4.60" fill="url(#hyg)"/>
<circle cx="404.1" cy="279.0" r="5.43" fill="url(#hyg)"/>
<circle cx="387.7" cy="207.6" r="5.43" fill="url(#hyg)"/>
<circle cx="484.9" cy="227.5" r="6.96" fill="url(#hyg)"/>
<circle cx="515.2" cy="238.0" r="8.61" fill="url(#hyG)"/>
<circle cx="603.3" cy="214.9" r="4.48" fill="url(#hyg)"/>
<circle cx="414.3" cy="58.2" r="9.32" fill="url(#hG)"/>
<circle cx="477.3" cy="35.5" r="6.14" fill="url(#hG)"/>
<circle cx="400.6" cy="57.0" r="4.60" fill="url(#hg)"/>
<circle cx="375.8" cy="47.4" r="3.78" fill="url(#hg)"/>
<circle cx="428.2" cy="35.5" r="3.07" fill="url(#hg)"/>
<circle cx="387.6" cy="65.2" r="3.07" fill="url(#hg)"/>
<circle cx="366.0" cy="76.6" r="3.78" fill="url(#hg)"/>
<circle cx="458.0" cy="51.2" r="4.60" fill="url(#hg)"/>
<circle cx="469.4" cy="51.2" r="3.07" fill="url(#hg)"/>
<circle cx="487.8" cy="64.4" r="5.78" fill="url(#hg)"/>
<circle cx="424.4" cy="82.8" r="4.60" fill="url(#hgc)"/>
<circle cx="449.2" cy="86.2" r="6.61" fill="url(#hG)"/>
<circle cx="453.6" cy="105.5" r="5.19" fill="url(#hg)"/>
<circle cx="419.5" cy="95.0" r="2.48" fill="url(#hg)"/>
<circle cx="444.9" cy="102.9" r="2.95" fill="url(#hg)"/>
<circle cx="376.6" cy="105.5" r="2.95" fill="url(#hg)"/>
<circle cx="546.0" cy="32.0" r="5.19" fill="url(#hgc)"/>
<circle cx="566.0" cy="46.0" r="7.20" fill="url(#hG)"/>
<circle cx="534.6" cy="70.5" r="5.19" fill="url(#hg)"/>
<circle cx="507.5" cy="67.0" r="2.95" fill="url(#hg)"/>
<circle cx="504.0" cy="83.6" r="5.19" fill="url(#hg)"/>
<circle cx="544.2" cy="108.0" r="8.26" fill="url(#hG)"/>
<circle cx="581.0" cy="97.6" r="5.78" fill="url(#hG)"/>
<circle cx="609.0" cy="98.5" r="4.60" fill="url(#hg)"/>
<circle cx="598.5" cy="102.9" r="4.60" fill="url(#hg)"/>
<circle cx="539.0" cy="81.0" r="2.48" fill="url(#hg)"/>
<circle cx="532.5" cy="55.6" r="1.65" fill="url(#hg)"/>
<circle cx="616.0" cy="69.6" r="1.65" fill="url(#hg)"/>
<circle cx="415.1" cy="127.0" r="6.61" fill="url(#hG)"/>
<circle cx="370.5" cy="144.1" r="6.61" fill="url(#hG)"/>
<circle cx="400.2" cy="151.7" r="5.19" fill="url(#hg)"/>
<circle cx="417.4" cy="163.4" r="3.78" fill="url(#hg)"/>
<circle cx="386.2" cy="168.6" r="5.90" fill="url(#hg)"/>
<circle cx="388.0" cy="187.0" r="5.19" fill="url(#hc)"/>
<circle cx="374.0" cy="184.4" r="2.12" fill="url(#hg)"/>
<circle cx="448.7" cy="157.2" r="5.19" fill="url(#hg)"/>
<circle cx="467.1" cy="163.4" r="5.19" fill="url(#hg)"/>
<circle cx="497.4" cy="148.5" r="5.43" fill="url(#hG)"/>
<circle cx="486.9" cy="181.8" r="6.14" fill="url(#hg)"/>
<circle cx="469.4" cy="174.8" r="4.13" fill="url(#hg)"/>
<circle cx="455.4" cy="196.5" r="9.91" fill="url(#hG)"/>
<circle cx="478.1" cy="126.6" r="1.65" fill="url(#hg)"/>
<circle cx="590.1" cy="128.4" r="11.92" fill="url(#hG)"/>
<circle cx="546.0" cy="113.5" r="9.32" fill="url(#hG)"/>
<circle cx="510.6" cy="115.2" r="4.60" fill="url(#hg)"/>
<circle cx="558.2" cy="162.5" r="8.26" fill="url(#hG)"/>
<circle cx="555.1" cy="151.7" r="2.95" fill="url(#hg)"/>
<circle cx="545.6" cy="189.6" r="7.20" fill="url(#hG)"/>
<circle cx="582.8" cy="183.5" r="4.72" fill="url(#hg)"/>
<circle cx="575.4" cy="148.8" r="3.30" fill="url(#hg)"/>
<circle cx="603.4" cy="151.5" r="2.48" fill="url(#hg)"/>
<circle cx="581.9" cy="156.9" r="2.12" fill="url(#hg)"/>
<circle cx="511.9" cy="136.2" r="2.48" fill="url(#hg)"/>
<circle cx="455.5" cy="223.3" r="7.91" fill="url(#hG)"/>
<circle cx="437.7" cy="232.8" r="5.43" fill="url(#hg)"/>
<circle cx="444.0" cy="251.5" r="7.32" fill="url(#hG)"/>
<circle cx="406.2" cy="262.2" r="6.14" fill="url(#hg)"/>
<circle cx="378.5" cy="247.0" r="4.01" fill="url(#hg)"/>
<circle cx="397.8" cy="228.0" r="4.01" fill="url(#hg)"/>
<circle cx="480.7" cy="210.8" r="4.48" fill="url(#hg)"/>
<circle cx="497.5" cy="238.0" r="4.48" fill="url(#hg)"/>
<circle cx="457.6" cy="256.3" r="2.95" fill="url(#hg)"/>
<circle cx="526.7" cy="247.5" r="7.91" fill="url(#hG)"/>
<circle cx="576.0" cy="228.6" r="4.48" fill="url(#hg)"/>
<circle cx="581.3" cy="254.8" r="4.25" fill="url(#hg)"/>
<circle cx="591.8" cy="258.0" r="5.43" fill="url(#hg)"/>
<circle cx="512.0" cy="270.1" r="4.48" fill="url(#hg)"/>
<circle cx="554.0" cy="239.1" r="2.48" fill="url(#hg)"/>
<circle cx="618.5" cy="269.5" r="2.48" fill="url(#hg)"/>
<circle cx="618.5" cy="221.2" r="2.48" fill="url(#hg)"/>
<circle cx="488.0" cy="256.9" r="12.86" fill="url(#hB)"/>
</g>
<path d="M372.2 141.6l3-1 2 4.6-2 2.4-3-1.6z" fill="#1c28e8"/>
</g>
<defs>
<radialGradient id="dG" cx=".45" cy=".36" r=".72"><stop offset="0" stop-color="#58f040"/><stop offset=".45" stop-color="#34de2c"/><stop offset=".66" stop-color="#8ce020"/><stop offset=".82" stop-color="#e8dc18"/><stop offset=".93" stop-color="#b8840c"/><stop offset="1" stop-color="#5a3404"/></radialGradient>
<radialGradient id="dg" cx=".45" cy=".36" r=".74"><stop offset="0" stop-color="#68f440"/><stop offset=".35" stop-color="#48e42c"/><stop offset=".58" stop-color="#b4e81c"/><stop offset=".78" stop-color="#f0d818"/><stop offset=".92" stop-color="#b07c0a"/><stop offset="1" stop-color="#5a3404"/></radialGradient>
<radialGradient id="dy" cx=".42" cy=".28" r=".78"><stop offset="0" stop-color="#fffa40"/><stop offset=".42" stop-color="#f4dc18"/><stop offset=".72" stop-color="#c8980c"/><stop offset="1" stop-color="#5c3404"/></radialGradient>
<radialGradient id="ds" cx=".42" cy=".28" r=".78"><stop offset="0" stop-color="#fff038"/><stop offset=".45" stop-color="#ecc418"/><stop offset=".8" stop-color="#a86c0a"/><stop offset="1" stop-color="#6a3c04" stop-opacity=".7"/></radialGradient>
<radialGradient id="dyg" cx=".45" cy=".34" r=".76"><stop offset="0" stop-color="#b4f838"/><stop offset=".35" stop-color="#d4f024"/><stop offset=".65" stop-color="#f4dc18"/><stop offset=".88" stop-color="#b8840c"/><stop offset="1" stop-color="#5c3404"/></radialGradient>
<radialGradient id="dc" cx=".42" cy=".35" r=".72"><stop offset="0" stop-color="#40f0d8"/><stop offset=".65" stop-color="#20c8a0"/><stop offset="1" stop-color="#407028"/></radialGradient>
<radialGradient id="dB" cx=".45" cy=".38" r=".68"><stop offset="0" stop-color="#3c78f8"/><stop offset=".38" stop-color="#20a8f4"/><stop offset=".72" stop-color="#20d8d8"/><stop offset=".92" stop-color="#38b878"/><stop offset="1" stop-color="#3c6820"/></radialGradient>
<linearGradient id="surf" x1="0" y1="0" x2="1" y2="1"><stop offset="0" stop-color="#c27614"/><stop offset=".5" stop-color="#b96e10"/><stop offset="1" stop-color="#b0660c"/></linearGradient>
<filter id="noise" x="0" y="0" width="100%" height="100%"><feTurbulence type="fractalNoise" baseFrequency="0.12 0.7" numOctaves="2" seed="3" result="n"/><feColorMatrix type="matrix" values="0 0 0 0 0.32  0 0 0 0 0.16  0 0 0 0 0.0  0.9 0.9 0 0 -0.76" result="d"/><feComposite in="d" in2="SourceGraphic" operator="in"/></filter>
<filter id="noise2" x="0" y="0" width="100%" height="100%"><feTurbulence type="fractalNoise" baseFrequency="0.14 0.75" numOctaves="2" seed="11" result="n"/><feColorMatrix type="matrix" values="0 0 0 0 0.86  0 0 0 0 0.58  0 0 0 0 0.12  0.8 0.8 0 0 -0.80" result="d"/><feComposite in="d" in2="SourceGraphic" operator="in"/></filter>
<clipPath id="qclip"><polygon points="84.0,40.5 267.0,80.0 223.8,273.0 17.4,220.6"/></clipPath>
<filter id="wob" x="-5%" y="-5%" width="110%" height="110%"><feTurbulence type="fractalNoise" baseFrequency="0.11" numOctaves="2" seed="5" result="t"/><feDisplacementMap in="SourceGraphic" in2="t" scale="3.2" xChannelSelector="R" yChannelSelector="G"/></filter>
</defs>
<polygon points="84.0,40.5 267.0,80.0 223.8,273.0 17.4,220.6" fill="url(#surf)"/>
<polygon points="84.0,40.5 267.0,80.0 223.8,273.0 17.4,220.6" fill="#000" filter="url(#noise)"/>
<polygon points="84.0,40.5 267.0,80.0 223.8,273.0 17.4,220.6" fill="#000" filter="url(#noise2)"/>
<g clip-path="url(#qclip)"><g filter="url(#wob)">
<ellipse cx="88.6" cy="42.7" rx="1.62" ry="1.46" fill="#4a2802" opacity=".55"/>
<ellipse cx="88.2" cy="42.0" rx="1.62" ry="1.57" fill="url(#ds)"/>
<ellipse cx="89.1" cy="43.0" rx="2.22" ry="2.00" fill="#4a2802" opacity=".55"/>
<ellipse cx="88.6" cy="42.1" rx="2.22" ry="2.15" fill="url(#ds)"/>
<ellipse cx="92.9" cy="47.2" rx="1.03" ry="0.93" fill="#4a2802" opacity=".55"/>
<ellipse cx="92.7" cy="46.8" rx="1.03" ry="1.00" fill="url(#ds)"/>
<ellipse cx="94.1" cy="47.7" rx="1.03" ry="0.93" fill="#4a2802" opacity=".55"/>
<ellipse cx="93.8" cy="47.3" rx="1.03" ry="1.00" fill="url(#ds)"/>
<ellipse cx="95.8" cy="48.1" rx="1.63" ry="1.47" fill="#4a2802" opacity=".55"/>
<ellipse cx="95.4" cy="47.4" rx="1.63" ry="1.58" fill="url(#ds)"/>
<ellipse cx="114.5" cy="48.3" rx="1.37" ry="1.24" fill="#4a2802" opacity=".55"/>
<ellipse cx="114.2" cy="47.8" rx="1.37" ry="1.33" fill="url(#ds)"/>
<ellipse cx="89.8" cy="48.4" rx="0.86" ry="0.77" fill="#4a2802" opacity=".55"/>
<ellipse cx="89.6" cy="48.1" rx="0.86" ry="0.83" fill="url(#ds)"/>
<ellipse cx="96.9" cy="49.5" rx="2.24" ry="2.01" fill="#4a2802" opacity=".55"/>
<ellipse cx="96.4" cy="48.6" rx="2.24" ry="2.17" fill="url(#ds)"/>
<ellipse cx="111.9" cy="49.7" rx="1.20" ry="1.08" fill="#4a2802" opacity=".55"/>
<ellipse cx="111.7" cy="49.2" rx="1.20" ry="1.17" fill="url(#ds)"/>
<ellipse cx="120.4" cy="50.1" rx="1.03" ry="0.93" fill="#4a2802" opacity=".55"/>
<ellipse cx="120.1" cy="49.7" rx="1.03" ry="1.00" fill="url(#ds)"/>
<ellipse cx="87.8" cy="50.9" rx="1.89" ry="1.71" fill="#4a2802" opacity=".55"/>
<ellipse cx="87.4" cy="50.1" rx="1.89" ry="1.84" fill="url(#ds)"/>
<ellipse cx="97.4" cy="51.4" rx="1.64" ry="1.47" fill="#4a2802" opacity=".55"/>
<ellipse cx="97.1" cy="50.7" rx="1.64" ry="1.59" fill="url(#ds)"/>
<ellipse cx="83.4" cy="51.5" rx="1.38" ry="1.24" fill="#4a2802" opacity=".55"/>
<ellipse cx="83.1" cy="50.9" rx="1.38" ry="1.34" fill="url(#ds)"/>
<ellipse cx="126.8" cy="51.8" rx="0.86" ry="0.78" fill="#4a2802" opacity=".55"/>
<ellipse cx="126.6" cy="51.4" rx="0.86" ry="0.84" fill="url(#ds)"/>
<ellipse cx="114.5" cy="52.9" rx="3.37" ry="3.03" fill="#4a2802" opacity=".55"/>
<ellipse cx="113.8" cy="51.5" rx="3.37" ry="3.27" fill="url(#dyg)"/>
<ellipse cx="81.1" cy="52.6" rx="1.04" ry="0.93" fill="#4a2802" opacity=".55"/>
<ellipse cx="80.9" cy="52.2" rx="1.04" ry="1.00" fill="url(#ds)"/>
<ellipse cx="85.3" cy="52.9" rx="0.86" ry="0.78" fill="#4a2802" opacity=".55"/>
<ellipse cx="85.1" cy="52.5" rx="0.86" ry="0.84" fill="url(#ds)"/>
<ellipse cx="134.0" cy="53.0" rx="1.64" ry="1.48" fill="#4a2802" opacity=".55"/>
<ellipse cx="133.6" cy="52.3" rx="1.64" ry="1.59" fill="url(#ds)"/>
<ellipse cx="88.9" cy="54.1" rx="2.77" ry="2.49" fill="#4a2802" opacity=".55"/>
<ellipse cx="88.3" cy="53.0" rx="2.77" ry="2.68" fill="url(#dg)"/>
<ellipse cx="108.3" cy="54.3" rx="1.67" ry="1.50" fill="#4a2802" opacity=".55"/>
<ellipse cx="107.9" cy="53.6" rx="1.67" ry="1.62" fill="url(#dy)"/>
<ellipse cx="131.4" cy="54.4" rx="0.87" ry="0.78" fill="#4a2802" opacity=".55"/>
<ellipse cx="131.2" cy="54.0" rx="0.87" ry="0.84" fill="url(#ds)"/>
<ellipse cx="128.1" cy="54.6" rx="2.25" ry="2.02" fill="#4a2802" opacity=".55"/>
<ellipse cx="127.6" cy="53.6" rx="2.25" ry="2.18" fill="url(#dg)"/>
<ellipse cx="104.7" cy="54.6" rx="1.04" ry="0.93" fill="#4a2802" opacity=".55"/>
<ellipse cx="104.5" cy="54.2" rx="1.04" ry="1.01" fill="url(#ds)"/>
<ellipse cx="148.2" cy="55.3" rx="1.91" ry="1.71" fill="#4a2802" opacity=".55"/>
<ellipse cx="147.8" cy="54.5" rx="1.91" ry="1.85" fill="url(#ds)"/>
<ellipse cx="150.4" cy="56.1" rx="0.87" ry="0.78" fill="#4a2802" opacity=".55"/>
<ellipse cx="150.2" cy="55.7" rx="0.87" ry="0.84" fill="url(#ds)"/>
<ellipse cx="123.8" cy="56.6" rx="1.65" ry="1.48" fill="#4a2802" opacity=".55"/>
<ellipse cx="123.5" cy="55.9" rx="1.65" ry="1.60" fill="url(#ds)"/>
<ellipse cx="84.2" cy="57.4" rx="1.91" ry="1.72" fill="#4a2802" opacity=".55"/>
<ellipse cx="83.7" cy="56.6" rx="1.91" ry="1.85" fill="url(#ds)"/>
<ellipse cx="99.3" cy="57.6" rx="0.78" ry="0.70" fill="#4a2802" opacity=".55"/>
<ellipse cx="99.1" cy="57.3" rx="0.78" ry="0.76" fill="url(#ds)"/>
<ellipse cx="151.8" cy="58.5" rx="1.68" ry="1.51" fill="#4a2802" opacity=".55"/>
<ellipse cx="151.5" cy="57.8" rx="1.68" ry="1.63" fill="url(#dy)"/>
<ellipse cx="92.7" cy="58.7" rx="1.39" ry="1.25" fill="#4a2802" opacity=".55"/>
<ellipse cx="92.4" cy="58.1" rx="1.39" ry="1.35" fill="url(#ds)"/>
<ellipse cx="109.6" cy="58.8" rx="1.65" ry="1.49" fill="#4a2802" opacity=".55"/>
<ellipse cx="109.3" cy="58.1" rx="1.65" ry="1.60" fill="url(#ds)"/>
<ellipse cx="139.4" cy="59.6" rx="1.04" ry="0.94" fill="#4a2802" opacity=".55"/>
<ellipse cx="139.2" cy="59.1" rx="1.04" ry="1.01" fill="url(#ds)"/>
<ellipse cx="123.6" cy="59.8" rx="0.87" ry="0.78" fill="#4a2802" opacity=".55"/>
<ellipse cx="123.4" cy="59.5" rx="0.87" ry="0.84" fill="url(#ds)"/>
<ellipse cx="157.6" cy="60.3" rx="1.65" ry="1.49" fill="#4a2802" opacity=".55"/>
<ellipse cx="157.3" cy="59.6" rx="1.65" ry="1.61" fill="url(#ds)"/>
<ellipse cx="131.8" cy="60.5" rx="1.39" ry="1.25" fill="#4a2802" opacity=".55"/>
<ellipse cx="131.5" cy="59.9" rx="1.39" ry="1.35" fill="url(#ds)"/>
<ellipse cx="171.8" cy="60.8" rx="0.87" ry="0.78" fill="#4a2802" opacity=".55"/>
<ellipse cx="171.6" cy="60.4" rx="0.87" ry="0.85" fill="url(#ds)"/>
<ellipse cx="124.9" cy="61.2" rx="0.78" ry="0.71" fill="#4a2802" opacity=".55"/>
<ellipse cx="124.8" cy="60.9" rx="0.78" ry="0.76" fill="url(#ds)"/>
<ellipse cx="160.7" cy="61.5" rx="1.40" ry="1.26" fill="#4a2802" opacity=".55"/>
<ellipse cx="160.4" cy="60.9" rx="1.40" ry="1.35" fill="url(#ds)"/>
<ellipse cx="126.2" cy="61.6" rx="1.92" ry="1.73" fill="#4a2802" opacity=".55"/>
<ellipse cx="125.8" cy="60.8" rx="1.92" ry="1.86" fill="url(#ds)"/>
<ellipse cx="102.8" cy="61.7" rx="0.78" ry="0.71" fill="#4a2802" opacity=".55"/>
<ellipse cx="102.7" cy="61.3" rx="0.78" ry="0.76" fill="url(#ds)"/>
<ellipse cx="163.4" cy="62.4" rx="4.65" ry="4.18" fill="#4a2802" opacity=".55"/>
<ellipse cx="162.4" cy="60.4" rx="4.65" ry="4.51" fill="url(#dG)"/>
<ellipse cx="81.1" cy="62.8" rx="2.57" ry="2.31" fill="#4a2802" opacity=".55"/>
<ellipse cx="80.5" cy="61.7" rx="2.57" ry="2.49" fill="url(#dy)"/>
<ellipse cx="142.3" cy="62.9" rx="0.79" ry="0.71" fill="#4a2802" opacity=".55"/>
<ellipse cx="142.1" cy="62.6" rx="0.79" ry="0.76" fill="url(#ds)"/>
<ellipse cx="125.4" cy="63.1" rx="1.40" ry="1.26" fill="#4a2802" opacity=".55"/>
<ellipse cx="125.1" cy="62.5" rx="1.40" ry="1.36" fill="url(#ds)"/>
<ellipse cx="90.5" cy="63.2" rx="1.22" ry="1.10" fill="#4a2802" opacity=".55"/>
<ellipse cx="90.3" cy="62.7" rx="1.22" ry="1.19" fill="url(#ds)"/>
<ellipse cx="84.4" cy="63.9" rx="1.66" ry="1.49" fill="#4a2802" opacity=".55"/>
<ellipse cx="84.0" cy="63.2" rx="1.66" ry="1.61" fill="url(#ds)"/>
<ellipse cx="104.3" cy="64.1" rx="3.41" ry="3.07" fill="#4a2802" opacity=".55"/>
<ellipse cx="103.5" cy="62.7" rx="3.41" ry="3.31" fill="url(#dg)"/>
<ellipse cx="106.9" cy="64.2" rx="1.40" ry="1.26" fill="#4a2802" opacity=".55"/>
<ellipse cx="106.6" cy="63.6" rx="1.40" ry="1.36" fill="url(#ds)"/>
<ellipse cx="189.6" cy="64.8" rx="1.69" ry="1.52" fill="#4a2802" opacity=".55"/>
<ellipse cx="189.2" cy="64.1" rx="1.69" ry="1.64" fill="url(#dy)"/>
<ellipse cx="132.2" cy="65.0" rx="2.28" ry="2.05" fill="#4a2802" opacity=".55"/>
<ellipse cx="131.7" cy="64.0" rx="2.28" ry="2.21" fill="url(#ds)"/>
<ellipse cx="127.1" cy="65.1" rx="0.88" ry="0.79" fill="#4a2802" opacity=".55"/>
<ellipse cx="126.9" cy="64.7" rx="0.88" ry="0.85" fill="url(#ds)"/>
<ellipse cx="85.5" cy="65.8" rx="1.93" ry="1.73" fill="#4a2802" opacity=".55"/>
<ellipse cx="85.0" cy="65.0" rx="1.93" ry="1.87" fill="url(#ds)"/>
<ellipse cx="99.2" cy="66.0" rx="1.05" ry="0.95" fill="#4a2802" opacity=".55"/>
<ellipse cx="99.0" cy="65.6" rx="1.05" ry="1.02" fill="url(#ds)"/>
<ellipse cx="126.9" cy="66.1" rx="1.93" ry="1.73" fill="#4a2802" opacity=".55"/>
<ellipse cx="126.4" cy="65.3" rx="1.93" ry="1.87" fill="url(#ds)"/>
<ellipse cx="165.3" cy="66.1" rx="0.88" ry="0.79" fill="#4a2802" opacity=".55"/>
<ellipse cx="165.1" cy="65.7" rx="0.88" ry="0.85" fill="url(#ds)"/>
<ellipse cx="96.4" cy="66.2" rx="1.93" ry="1.73" fill="#4a2802" opacity=".55"/>
<ellipse cx="96.0" cy="65.4" rx="1.93" ry="1.87" fill="url(#ds)"/>
<ellipse cx="114.5" cy="67.4" rx="7.09" ry="6.38" fill="#4a2802" opacity=".55"/>
<ellipse cx="112.9" cy="64.5" rx="7.09" ry="6.88" fill="url(#dG)"/>
<ellipse cx="158.8" cy="67.1" rx="1.93" ry="1.74" fill="#4a2802" opacity=".55"/>
<ellipse cx="158.4" cy="66.3" rx="1.93" ry="1.87" fill="url(#ds)"/>
<ellipse cx="93.1" cy="67.2" rx="2.28" ry="2.05" fill="#4a2802" opacity=".55"/>
<ellipse cx="92.6" cy="66.3" rx="2.28" ry="2.21" fill="url(#dg)"/>
<ellipse cx="139.2" cy="67.3" rx="1.23" ry="1.11" fill="#4a2802" opacity=".55"/>
<ellipse cx="138.9" cy="66.8" rx="1.23" ry="1.19" fill="url(#ds)"/>
<ellipse cx="180.6" cy="67.6" rx="1.45" ry="1.31" fill="#4a2802" opacity=".55"/>
<ellipse cx="180.3" cy="67.0" rx="1.45" ry="1.41" fill="url(#dy)"/>
<ellipse cx="172.7" cy="67.7" rx="0.70" ry="0.63" fill="#4a2802" opacity=".55"/>
<ellipse cx="172.5" cy="67.4" rx="0.70" ry="0.68" fill="url(#ds)"/>
<ellipse cx="89.9" cy="68.1" rx="1.40" ry="1.26" fill="#4a2802" opacity=".55"/>
<ellipse cx="89.6" cy="67.5" rx="1.40" ry="1.36" fill="url(#ds)"/>
<ellipse cx="146.2" cy="69.3" rx="3.43" ry="3.09" fill="#4a2802" opacity=".55"/>
<ellipse cx="145.5" cy="67.9" rx="3.43" ry="3.33" fill="url(#dg)"/>
<ellipse cx="140.7" cy="69.3" rx="1.23" ry="1.11" fill="#4a2802" opacity=".55"/>
<ellipse cx="140.4" cy="68.8" rx="1.23" ry="1.19" fill="url(#ds)"/>
<ellipse cx="175.1" cy="69.3" rx="0.70" ry="0.63" fill="#4a2802" opacity=".55"/>
<ellipse cx="174.9" cy="69.0" rx="0.70" ry="0.68" fill="url(#ds)"/>
<ellipse cx="108.1" cy="69.6" rx="2.29" ry="2.06" fill="#4a2802" opacity=".55"/>
<ellipse cx="107.6" cy="68.7" rx="2.29" ry="2.22" fill="url(#ds)"/>
<ellipse cx="176.9" cy="69.9" rx="1.06" ry="0.95" fill="#4a2802" opacity=".55"/>
<ellipse cx="176.7" cy="69.4" rx="1.06" ry="1.03" fill="url(#ds)"/>
<ellipse cx="136.1" cy="70.2" rx="1.67" ry="1.51" fill="#4a2802" opacity=".55"/>
<ellipse cx="135.8" cy="69.5" rx="1.67" ry="1.62" fill="url(#ds)"/>
<ellipse cx="213.3" cy="70.3" rx="1.94" ry="1.75" fill="#4a2802" opacity=".55"/>
<ellipse cx="212.9" cy="69.5" rx="1.94" ry="1.88" fill="url(#ds)"/>
<ellipse cx="213.2" cy="70.7" rx="3.57" ry="3.21" fill="#4a2802" opacity=".55"/>
<ellipse cx="212.4" cy="69.2" rx="3.57" ry="3.46" fill="url(#dg)"/>
<ellipse cx="81.2" cy="70.7" rx="1.41" ry="1.27" fill="#4a2802" opacity=".55"/>
<ellipse cx="80.9" cy="70.1" rx="1.41" ry="1.37" fill="url(#ds)"/>
<ellipse cx="193.6" cy="70.9" rx="1.41" ry="1.27" fill="#4a2802" opacity=".55"/>
<ellipse cx="193.3" cy="70.3" rx="1.41" ry="1.37" fill="url(#ds)"/>
<ellipse cx="154.1" cy="71.0" rx="2.29" ry="2.06" fill="#4a2802" opacity=".55"/>
<ellipse cx="153.6" cy="70.0" rx="2.29" ry="2.22" fill="url(#dg)"/>
<ellipse cx="75.3" cy="71.2" rx="2.82" ry="2.54" fill="#4a2802" opacity=".55"/>
<ellipse cx="74.7" cy="70.1" rx="2.82" ry="2.73" fill="url(#dg)"/>
<ellipse cx="111.0" cy="71.6" rx="0.71" ry="0.63" fill="#4a2802" opacity=".55"/>
<ellipse cx="110.8" cy="71.3" rx="0.71" ry="0.68" fill="url(#ds)"/>
<ellipse cx="173.1" cy="71.7" rx="1.24" ry="1.11" fill="#4a2802" opacity=".55"/>
<ellipse cx="172.8" cy="71.2" rx="1.24" ry="1.20" fill="url(#ds)"/>
<ellipse cx="204.3" cy="71.9" rx="0.88" ry="0.80" fill="#4a2802" opacity=".55"/>
<ellipse cx="204.1" cy="71.6" rx="0.88" ry="0.86" fill="url(#ds)"/>
<ellipse cx="103.0" cy="72.1" rx="1.23" ry="1.11" fill="#4a2802" opacity=".55"/>
<ellipse cx="102.8" cy="71.6" rx="1.23" ry="1.20" fill="url(#ds)"/>
<ellipse cx="125.8" cy="72.9" rx="1.94" ry="1.75" fill="#4a2802" opacity=".55"/>
<ellipse cx="125.4" cy="72.1" rx="1.94" ry="1.88" fill="url(#ds)"/>
<ellipse cx="179.6" cy="72.9" rx="0.88" ry="0.80" fill="#4a2802" opacity=".55"/>
<ellipse cx="179.4" cy="72.6" rx="0.88" ry="0.86" fill="url(#ds)"/>
<ellipse cx="122.4" cy="73.1" rx="1.71" ry="1.54" fill="#4a2802" opacity=".55"/>
<ellipse cx="122.0" cy="72.4" rx="1.71" ry="1.65" fill="url(#dy)"/>
<ellipse cx="109.2" cy="73.1" rx="0.88" ry="0.79" fill="#4a2802" opacity=".55"/>
<ellipse cx="109.0" cy="72.7" rx="0.88" ry="0.86" fill="url(#ds)"/>
<ellipse cx="227.2" cy="73.6" rx="1.95" ry="1.75" fill="#4a2802" opacity=".55"/>
<ellipse cx="226.7" cy="72.8" rx="1.95" ry="1.89" fill="url(#ds)"/>
<ellipse cx="131.2" cy="73.8" rx="2.60" ry="2.34" fill="#4a2802" opacity=".55"/>
<ellipse cx="130.6" cy="72.7" rx="2.60" ry="2.52" fill="url(#dy)"/>
<ellipse cx="213.3" cy="74.0" rx="1.24" ry="1.12" fill="#4a2802" opacity=".55"/>
<ellipse cx="213.0" cy="73.5" rx="1.24" ry="1.20" fill="url(#ds)"/>
<ellipse cx="226.4" cy="74.5" rx="1.68" ry="1.52" fill="#4a2802" opacity=".55"/>
<ellipse cx="226.0" cy="73.8" rx="1.68" ry="1.63" fill="url(#ds)"/>
<ellipse cx="236.5" cy="74.5" rx="1.68" ry="1.52" fill="#4a2802" opacity=".55"/>
<ellipse cx="236.2" cy="73.8" rx="1.68" ry="1.63" fill="url(#ds)"/>
<ellipse cx="213.4" cy="74.6" rx="1.24" ry="1.12" fill="#4a2802" opacity=".55"/>
<ellipse cx="213.1" cy="74.1" rx="1.24" ry="1.20" fill="url(#ds)"/>
<ellipse cx="115.9" cy="74.6" rx="0.88" ry="0.80" fill="#4a2802" opacity=".55"/>
<ellipse cx="115.7" cy="74.3" rx="0.88" ry="0.86" fill="url(#ds)"/>
<ellipse cx="83.3" cy="75.0" rx="1.95" ry="1.75" fill="#4a2802" opacity=".55"/>
<ellipse cx="82.8" cy="74.2" rx="1.95" ry="1.89" fill="url(#ds)"/>
<ellipse cx="107.2" cy="76.0" rx="1.42" ry="1.28" fill="#4a2802" opacity=".55"/>
<ellipse cx="106.9" cy="75.4" rx="1.42" ry="1.37" fill="url(#ds)"/>
<ellipse cx="127.0" cy="76.0" rx="1.68" ry="1.51" fill="#4a2802" opacity=".55"/>
<ellipse cx="126.6" cy="75.3" rx="1.68" ry="1.63" fill="url(#ds)"/>
<ellipse cx="195.0" cy="76.2" rx="1.95" ry="1.76" fill="#4a2802" opacity=".55"/>
<ellipse cx="194.6" cy="75.4" rx="1.95" ry="1.89" fill="url(#ds)"/>
<ellipse cx="176.9" cy="76.2" rx="1.06" ry="0.96" fill="#4a2802" opacity=".55"/>
<ellipse cx="176.7" cy="75.7" rx="1.06" ry="1.03" fill="url(#ds)"/>
<ellipse cx="195.6" cy="76.2" rx="0.89" ry="0.80" fill="#4a2802" opacity=".55"/>
<ellipse cx="195.4" cy="75.8" rx="0.89" ry="0.86" fill="url(#ds)"/>
<ellipse cx="235.4" cy="76.5" rx="1.42" ry="1.28" fill="#4a2802" opacity=".55"/>
<ellipse cx="235.1" cy="75.9" rx="1.42" ry="1.38" fill="url(#ds)"/>
<ellipse cx="114.2" cy="76.7" rx="1.42" ry="1.28" fill="#4a2802" opacity=".55"/>
<ellipse cx="113.9" cy="76.1" rx="1.42" ry="1.38" fill="url(#ds)"/>
<ellipse cx="191.5" cy="76.8" rx="1.24" ry="1.12" fill="#4a2802" opacity=".55"/>
<ellipse cx="191.2" cy="76.3" rx="1.24" ry="1.21" fill="url(#ds)"/>
<ellipse cx="77.2" cy="76.8" rx="1.42" ry="1.28" fill="#4a2802" opacity=".55"/>
<ellipse cx="76.9" cy="76.2" rx="1.42" ry="1.38" fill="url(#ds)"/>
<ellipse cx="77.1" cy="76.9" rx="1.24" ry="1.12" fill="#4a2802" opacity=".55"/>
<ellipse cx="76.8" cy="76.4" rx="1.24" ry="1.20" fill="url(#ds)"/>
<ellipse cx="212.2" cy="77.7" rx="1.96" ry="1.76" fill="#4a2802" opacity=".55"/>
<ellipse cx="211.7" cy="76.8" rx="1.96" ry="1.90" fill="url(#ds)"/>
<ellipse cx="122.7" cy="77.7" rx="1.06" ry="0.96" fill="#4a2802" opacity=".55"/>
<ellipse cx="122.5" cy="77.2" rx="1.06" ry="1.03" fill="url(#ds)"/>
<ellipse cx="200.3" cy="78.0" rx="2.31" ry="2.08" fill="#4a2802" opacity=".55"/>
<ellipse cx="199.8" cy="77.1" rx="2.31" ry="2.24" fill="url(#ds)"/>
<ellipse cx="247.1" cy="78.7" rx="4.63" ry="4.17" fill="#4a2802" opacity=".55"/>
<ellipse cx="246.1" cy="76.8" rx="4.63" ry="4.49" fill="url(#dyg)"/>
<ellipse cx="119.0" cy="78.3" rx="0.89" ry="0.80" fill="#4a2802" opacity=".55"/>
<ellipse cx="118.8" cy="77.9" rx="0.89" ry="0.86" fill="url(#ds)"/>
<ellipse cx="110.7" cy="78.4" rx="0.89" ry="0.80" fill="#4a2802" opacity=".55"/>
<ellipse cx="110.5" cy="78.0" rx="0.89" ry="0.86" fill="url(#ds)"/>
<ellipse cx="134.1" cy="78.4" rx="0.80" ry="0.72" fill="#4a2802" opacity=".55"/>
<ellipse cx="134.0" cy="78.1" rx="0.80" ry="0.78" fill="url(#ds)"/>
<ellipse cx="171.3" cy="78.8" rx="1.96" ry="1.76" fill="#4a2802" opacity=".55"/>
<ellipse cx="170.9" cy="78.0" rx="1.96" ry="1.90" fill="url(#ds)"/>
<ellipse cx="196.9" cy="78.9" rx="2.31" ry="2.08" fill="#4a2802" opacity=".55"/>
<ellipse cx="196.4" cy="77.9" rx="2.31" ry="2.24" fill="url(#ds)"/>
<ellipse cx="243.8" cy="78.8" rx="0.80" ry="0.72" fill="#4a2802" opacity=".55"/>
<ellipse cx="243.6" cy="78.5" rx="0.80" ry="0.78" fill="url(#ds)"/>
<ellipse cx="220.2" cy="79.2" rx="1.43" ry="1.28" fill="#4a2802" opacity=".55"/>
<ellipse cx="219.9" cy="78.6" rx="1.43" ry="1.38" fill="url(#ds)"/>
<ellipse cx="98.7" cy="79.4" rx="1.96" ry="1.76" fill="#4a2802" opacity=".55"/>
<ellipse cx="98.2" cy="78.6" rx="1.96" ry="1.90" fill="url(#ds)"/>
<ellipse cx="137.8" cy="79.9" rx="0.71" ry="0.64" fill="#4a2802" opacity=".55"/>
<ellipse cx="137.6" cy="79.6" rx="0.71" ry="0.69" fill="url(#ds)"/>
<ellipse cx="232.0" cy="80.1" rx="2.63" ry="2.36" fill="#4a2802" opacity=".55"/>
<ellipse cx="231.5" cy="79.0" rx="2.63" ry="2.55" fill="url(#dy)"/>
<ellipse cx="132.8" cy="80.3" rx="1.47" ry="1.33" fill="#4a2802" opacity=".55"/>
<ellipse cx="132.5" cy="79.6" rx="1.47" ry="1.43" fill="url(#dy)"/>
<ellipse cx="75.4" cy="80.4" rx="2.31" ry="2.08" fill="#4a2802" opacity=".55"/>
<ellipse cx="74.9" cy="79.4" rx="2.31" ry="2.24" fill="url(#ds)"/>
<ellipse cx="102.0" cy="80.6" rx="1.69" ry="1.52" fill="#4a2802" opacity=".55"/>
<ellipse cx="101.6" cy="79.8" rx="1.69" ry="1.64" fill="url(#ds)"/>
<ellipse cx="139.5" cy="81.1" rx="2.13" ry="1.92" fill="#4a2802" opacity=".55"/>
<ellipse cx="139.0" cy="80.2" rx="2.13" ry="2.07" fill="url(#dy)"/>
<ellipse cx="195.2" cy="81.3" rx="1.07" ry="0.96" fill="#4a2802" opacity=".55"/>
<ellipse cx="194.9" cy="80.8" rx="1.07" ry="1.04" fill="url(#ds)"/>
<ellipse cx="175.1" cy="81.3" rx="0.71" ry="0.64" fill="#4a2802" opacity=".55"/>
<ellipse cx="174.9" cy="81.0" rx="0.71" ry="0.69" fill="url(#ds)"/>
<ellipse cx="139.0" cy="81.6" rx="1.96" ry="1.76" fill="#4a2802" opacity=".55"/>
<ellipse cx="138.6" cy="80.8" rx="1.96" ry="1.90" fill="url(#ds)"/>
<ellipse cx="85.9" cy="81.6" rx="1.96" ry="1.76" fill="#4a2802" opacity=".55"/>
<ellipse cx="85.5" cy="80.8" rx="1.96" ry="1.90" fill="url(#ds)"/>
<ellipse cx="211.7" cy="82.6" rx="5.00" ry="4.50" fill="#4a2802" opacity=".55"/>
<ellipse cx="210.6" cy="80.5" rx="5.00" ry="4.85" fill="url(#dyg)"/>
<ellipse cx="165.2" cy="82.7" rx="4.37" ry="3.94" fill="#4a2802" opacity=".55"/>
<ellipse cx="164.2" cy="80.9" rx="4.37" ry="4.24" fill="url(#dg)"/>
<ellipse cx="225.8" cy="83.2" rx="5.59" ry="5.03" fill="#4a2802" opacity=".55"/>
<ellipse cx="224.6" cy="80.9" rx="5.59" ry="5.42" fill="url(#dG)"/>
<ellipse cx="227.0" cy="83.1" rx="1.25" ry="1.13" fill="#4a2802" opacity=".55"/>
<ellipse cx="226.8" cy="82.5" rx="1.25" ry="1.22" fill="url(#ds)"/>
<ellipse cx="76.2" cy="83.2" rx="1.70" ry="1.53" fill="#4a2802" opacity=".55"/>
<ellipse cx="75.9" cy="82.5" rx="1.70" ry="1.64" fill="url(#ds)"/>
<ellipse cx="143.9" cy="83.4" rx="2.63" ry="2.37" fill="#4a2802" opacity=".55"/>
<ellipse cx="143.3" cy="82.3" rx="2.63" ry="2.55" fill="url(#dy)"/>
<ellipse cx="170.2" cy="83.5" rx="1.97" ry="1.77" fill="#4a2802" opacity=".55"/>
<ellipse cx="169.7" cy="82.6" rx="1.97" ry="1.91" fill="url(#ds)"/>
<ellipse cx="206.6" cy="83.4" rx="0.81" ry="0.72" fill="#4a2802" opacity=".55"/>
<ellipse cx="206.4" cy="83.1" rx="0.81" ry="0.78" fill="url(#ds)"/>
<ellipse cx="94.9" cy="83.5" rx="0.80" ry="0.72" fill="#4a2802" opacity=".55"/>
<ellipse cx="94.8" cy="83.1" rx="0.80" ry="0.78" fill="url(#ds)"/>
<ellipse cx="198.7" cy="83.7" rx="1.25" ry="1.13" fill="#4a2802" opacity=".55"/>
<ellipse cx="198.4" cy="83.2" rx="1.25" ry="1.21" fill="url(#dg)"/>
<ellipse cx="105.0" cy="84.1" rx="1.97" ry="1.77" fill="#4a2802" opacity=".55"/>
<ellipse cx="104.5" cy="83.3" rx="1.97" ry="1.91" fill="url(#ds)"/>
<ellipse cx="233.0" cy="84.2" rx="1.70" ry="1.53" fill="#4a2802" opacity=".55"/>
<ellipse cx="232.6" cy="83.5" rx="1.70" ry="1.65" fill="url(#ds)"/>
<ellipse cx="115.4" cy="84.5" rx="3.21" ry="2.89" fill="#4a2802" opacity=".55"/>
<ellipse cx="114.7" cy="83.2" rx="3.21" ry="3.11" fill="url(#dg)"/>
<ellipse cx="209.5" cy="84.3" rx="0.90" ry="0.81" fill="#4a2802" opacity=".55"/>
<ellipse cx="209.3" cy="83.9" rx="0.90" ry="0.87" fill="url(#ds)"/>
<ellipse cx="133.6" cy="84.7" rx="2.32" ry="2.09" fill="#4a2802" opacity=".55"/>
<ellipse cx="133.1" cy="83.7" rx="2.32" ry="2.26" fill="url(#ds)"/>
<ellipse cx="247.0" cy="85.2" rx="1.71" ry="1.53" fill="#4a2802" opacity=".55"/>
<ellipse cx="246.6" cy="84.4" rx="1.71" ry="1.65" fill="url(#ds)"/>
<ellipse cx="159.0" cy="85.3" rx="2.33" ry="2.09" fill="#4a2802" opacity=".55"/>
<ellipse cx="158.5" cy="84.3" rx="2.33" ry="2.26" fill="url(#ds)"/>
<ellipse cx="264.4" cy="85.3" rx="1.49" ry="1.34" fill="#4a2802" opacity=".55"/>
<ellipse cx="264.1" cy="84.6" rx="1.49" ry="1.44" fill="url(#dy)"/>
<ellipse cx="78.7" cy="85.4" rx="1.25" ry="1.13" fill="#4a2802" opacity=".55"/>
<ellipse cx="78.4" cy="84.9" rx="1.25" ry="1.21" fill="url(#ds)"/>
<ellipse cx="92.2" cy="86.5" rx="1.25" ry="1.13" fill="#4a2802" opacity=".55"/>
<ellipse cx="92.0" cy="85.9" rx="1.25" ry="1.22" fill="url(#ds)"/>
<ellipse cx="113.4" cy="86.6" rx="1.43" ry="1.29" fill="#4a2802" opacity=".55"/>
<ellipse cx="113.1" cy="86.0" rx="1.43" ry="1.39" fill="url(#ds)"/>
<ellipse cx="134.7" cy="86.7" rx="1.70" ry="1.53" fill="#4a2802" opacity=".55"/>
<ellipse cx="134.3" cy="86.0" rx="1.70" ry="1.65" fill="url(#ds)"/>
<ellipse cx="225.8" cy="86.7" rx="1.26" ry="1.13" fill="#4a2802" opacity=".55"/>
<ellipse cx="225.5" cy="86.1" rx="1.26" ry="1.22" fill="url(#ds)"/>
<ellipse cx="178.5" cy="87.3" rx="2.24" ry="2.02" fill="#4a2802" opacity=".55"/>
<ellipse cx="178.0" cy="86.4" rx="2.24" ry="2.18" fill="url(#dg)"/>
<ellipse cx="205.2" cy="87.2" rx="0.90" ry="0.81" fill="#4a2802" opacity=".55"/>
<ellipse cx="205.0" cy="86.8" rx="0.90" ry="0.87" fill="url(#ds)"/>
<ellipse cx="234.4" cy="87.3" rx="1.44" ry="1.29" fill="#4a2802" opacity=".55"/>
<ellipse cx="234.1" cy="86.7" rx="1.44" ry="1.40" fill="url(#ds)"/>
<ellipse cx="75.9" cy="88.0" rx="1.70" ry="1.53" fill="#4a2802" opacity=".55"/>
<ellipse cx="75.5" cy="87.3" rx="1.70" ry="1.65" fill="url(#ds)"/>
<ellipse cx="168.2" cy="88.6" rx="1.71" ry="1.54" fill="#4a2802" opacity=".55"/>
<ellipse cx="167.8" cy="87.9" rx="1.71" ry="1.66" fill="url(#ds)"/>
<ellipse cx="145.8" cy="88.7" rx="1.74" ry="1.56" fill="#4a2802" opacity=".55"/>
<ellipse cx="145.4" cy="88.0" rx="1.74" ry="1.68" fill="url(#dy)"/>
<ellipse cx="233.5" cy="89.5" rx="1.74" ry="1.57" fill="#4a2802" opacity=".55"/>
<ellipse cx="233.2" cy="88.8" rx="1.74" ry="1.69" fill="url(#dy)"/>
<ellipse cx="106.1" cy="89.7" rx="1.26" ry="1.13" fill="#4a2802" opacity=".55"/>
<ellipse cx="105.8" cy="89.1" rx="1.26" ry="1.22" fill="url(#ds)"/>
<ellipse cx="221.5" cy="89.7" rx="0.81" ry="0.73" fill="#4a2802" opacity=".55"/>
<ellipse cx="221.3" cy="89.3" rx="0.81" ry="0.79" fill="url(#ds)"/>
<ellipse cx="187.9" cy="90.0" rx="1.44" ry="1.30" fill="#4a2802" opacity=".55"/>
<ellipse cx="187.6" cy="89.4" rx="1.44" ry="1.40" fill="url(#ds)"/>
<ellipse cx="130.6" cy="89.9" rx="0.72" ry="0.65" fill="#4a2802" opacity=".55"/>
<ellipse cx="130.4" cy="89.6" rx="0.72" ry="0.70" fill="url(#ds)"/>
<ellipse cx="165.3" cy="90.3" rx="1.71" ry="1.54" fill="#4a2802" opacity=".55"/>
<ellipse cx="165.0" cy="89.6" rx="1.71" ry="1.66" fill="url(#ds)"/>
<ellipse cx="117.9" cy="90.2" rx="1.26" ry="1.13" fill="#4a2802" opacity=".55"/>
<ellipse cx="117.7" cy="89.7" rx="1.26" ry="1.22" fill="url(#ds)"/>
<ellipse cx="83.2" cy="90.3" rx="1.26" ry="1.13" fill="#4a2802" opacity=".55"/>
<ellipse cx="82.9" cy="89.7" rx="1.26" ry="1.22" fill="url(#ds)"/>
<ellipse cx="77.1" cy="90.4" rx="0.81" ry="0.73" fill="#4a2802" opacity=".55"/>
<ellipse cx="76.9" cy="90.0" rx="0.81" ry="0.79" fill="url(#ds)"/>
<ellipse cx="165.8" cy="90.5" rx="0.81" ry="0.73" fill="#4a2802" opacity=".55"/>
<ellipse cx="165.6" cy="90.1" rx="0.81" ry="0.79" fill="url(#ds)"/>
<ellipse cx="133.0" cy="91.1" rx="5.16" ry="4.65" fill="#4a2802" opacity=".55"/>
<ellipse cx="131.9" cy="88.9" rx="5.16" ry="5.01" fill="url(#dG)"/>
<ellipse cx="191.8" cy="90.9" rx="1.44" ry="1.30" fill="#4a2802" opacity=".55"/>
<ellipse cx="191.5" cy="90.3" rx="1.44" ry="1.40" fill="url(#ds)"/>
<ellipse cx="150.2" cy="90.9" rx="0.72" ry="0.65" fill="#4a2802" opacity=".55"/>
<ellipse cx="150.0" cy="90.6" rx="0.72" ry="0.70" fill="url(#ds)"/>
<ellipse cx="68.7" cy="91.2" rx="2.34" ry="2.11" fill="#4a2802" opacity=".55"/>
<ellipse cx="68.2" cy="90.2" rx="2.34" ry="2.27" fill="url(#ds)"/>
<ellipse cx="161.8" cy="91.1" rx="0.72" ry="0.65" fill="#4a2802" opacity=".55"/>
<ellipse cx="161.7" cy="90.8" rx="0.72" ry="0.70" fill="url(#ds)"/>
<ellipse cx="238.6" cy="91.3" rx="1.75" ry="1.57" fill="#4a2802" opacity=".55"/>
<ellipse cx="238.2" cy="90.5" rx="1.75" ry="1.69" fill="url(#dy)"/>
<ellipse cx="126.2" cy="91.5" rx="1.08" ry="0.97" fill="#4a2802" opacity=".55"/>
<ellipse cx="125.9" cy="91.0" rx="1.08" ry="1.05" fill="url(#ds)"/>
<ellipse cx="108.9" cy="91.7" rx="1.89" ry="1.70" fill="#4a2802" opacity=".55"/>
<ellipse cx="108.5" cy="90.9" rx="1.89" ry="1.83" fill="url(#dg)"/>
<ellipse cx="75.8" cy="91.8" rx="2.25" ry="2.03" fill="#4a2802" opacity=".55"/>
<ellipse cx="75.3" cy="90.8" rx="2.25" ry="2.18" fill="url(#dg)"/>
<ellipse cx="122.4" cy="92.2" rx="2.16" ry="1.94" fill="#4a2802" opacity=".55"/>
<ellipse cx="121.9" cy="91.3" rx="2.16" ry="2.09" fill="url(#dy)"/>
<ellipse cx="256.3" cy="92.3" rx="1.72" ry="1.55" fill="#4a2802" opacity=".55"/>
<ellipse cx="256.0" cy="91.6" rx="1.72" ry="1.67" fill="url(#ds)"/>
<ellipse cx="236.6" cy="92.5" rx="1.09" ry="0.98" fill="#4a2802" opacity=".55"/>
<ellipse cx="236.4" cy="92.1" rx="1.09" ry="1.05" fill="url(#ds)"/>
<ellipse cx="217.6" cy="93.0" rx="1.27" ry="1.14" fill="#4a2802" opacity=".55"/>
<ellipse cx="217.3" cy="92.5" rx="1.27" ry="1.23" fill="url(#ds)"/>
<ellipse cx="150.2" cy="93.2" rx="1.44" ry="1.30" fill="#4a2802" opacity=".55"/>
<ellipse cx="149.9" cy="92.6" rx="1.44" ry="1.40" fill="url(#ds)"/>
<ellipse cx="114.5" cy="93.3" rx="0.81" ry="0.73" fill="#4a2802" opacity=".55"/>
<ellipse cx="114.3" cy="92.9" rx="0.81" ry="0.79" fill="url(#ds)"/>
<ellipse cx="142.0" cy="93.3" rx="0.81" ry="0.73" fill="#4a2802" opacity=".55"/>
<ellipse cx="141.9" cy="93.0" rx="0.81" ry="0.79" fill="url(#ds)"/>
<ellipse cx="94.2" cy="93.5" rx="1.08" ry="0.97" fill="#4a2802" opacity=".55"/>
<ellipse cx="94.0" cy="93.1" rx="1.08" ry="1.05" fill="url(#ds)"/>
<ellipse cx="163.3" cy="93.9" rx="1.27" ry="1.14" fill="#4a2802" opacity=".55"/>
<ellipse cx="163.0" cy="93.3" rx="1.27" ry="1.23" fill="url(#ds)"/>
<ellipse cx="198.1" cy="94.3" rx="3.98" ry="3.58" fill="#4a2802" opacity=".55"/>
<ellipse cx="197.2" cy="92.6" rx="3.98" ry="3.86" fill="url(#dg)"/>
<ellipse cx="81.1" cy="94.1" rx="1.72" ry="1.54" fill="#4a2802" opacity=".55"/>
<ellipse cx="80.7" cy="93.4" rx="1.72" ry="1.66" fill="url(#ds)"/>
<ellipse cx="113.0" cy="94.2" rx="1.72" ry="1.54" fill="#4a2802" opacity=".55"/>
<ellipse cx="112.6" cy="93.5" rx="1.72" ry="1.66" fill="url(#ds)"/>
<ellipse cx="230.6" cy="94.3" rx="1.99" ry="1.79" fill="#4a2802" opacity=".55"/>
<ellipse cx="230.2" cy="93.4" rx="1.99" ry="1.93" fill="url(#ds)"/>
<ellipse cx="84.0" cy="94.3" rx="2.08" ry="1.87" fill="#4a2802" opacity=".55"/>
<ellipse cx="83.6" cy="93.4" rx="2.08" ry="2.01" fill="url(#dy)"/>
<ellipse cx="231.3" cy="94.4" rx="1.27" ry="1.14" fill="#4a2802" opacity=".55"/>
<ellipse cx="231.0" cy="93.8" rx="1.27" ry="1.23" fill="url(#ds)"/>
<ellipse cx="228.8" cy="94.5" rx="1.27" ry="1.14" fill="#4a2802" opacity=".55"/>
<ellipse cx="228.6" cy="94.0" rx="1.27" ry="1.23" fill="url(#ds)"/>
<ellipse cx="262.6" cy="94.8" rx="2.00" ry="1.80" fill="#4a2802" opacity=".55"/>
<ellipse cx="262.2" cy="93.9" rx="2.00" ry="1.94" fill="url(#ds)"/>
<ellipse cx="252.7" cy="95.2" rx="0.73" ry="0.65" fill="#4a2802" opacity=".55"/>
<ellipse cx="252.5" cy="94.9" rx="0.73" ry="0.70" fill="url(#ds)"/>
<ellipse cx="151.2" cy="95.5" rx="2.08" ry="1.87" fill="#4a2802" opacity=".55"/>
<ellipse cx="150.8" cy="94.6" rx="2.08" ry="2.02" fill="url(#dy)"/>
<ellipse cx="83.5" cy="95.9" rx="1.99" ry="1.79" fill="#4a2802" opacity=".55"/>
<ellipse cx="83.0" cy="95.1" rx="1.99" ry="1.93" fill="url(#ds)"/>
<ellipse cx="213.9" cy="95.8" rx="1.27" ry="1.14" fill="#4a2802" opacity=".55"/>
<ellipse cx="213.6" cy="95.3" rx="1.27" ry="1.23" fill="url(#ds)"/>
<ellipse cx="159.6" cy="95.9" rx="1.99" ry="1.79" fill="#4a2802" opacity=".55"/>
<ellipse cx="159.1" cy="95.1" rx="1.99" ry="1.93" fill="url(#ds)"/>
<ellipse cx="215.1" cy="96.1" rx="2.67" ry="2.40" fill="#4a2802" opacity=".55"/>
<ellipse cx="214.5" cy="94.9" rx="2.67" ry="2.59" fill="url(#dy)"/>
<ellipse cx="248.3" cy="96.2" rx="2.36" ry="2.13" fill="#4a2802" opacity=".55"/>
<ellipse cx="247.8" cy="95.2" rx="2.36" ry="2.29" fill="url(#ds)"/>
<ellipse cx="224.7" cy="96.3" rx="3.18" ry="2.86" fill="#4a2802" opacity=".55"/>
<ellipse cx="224.0" cy="95.0" rx="3.18" ry="3.08" fill="url(#dyg)"/>
<ellipse cx="169.8" cy="96.4" rx="2.36" ry="2.12" fill="#4a2802" opacity=".55"/>
<ellipse cx="169.3" cy="95.4" rx="2.36" ry="2.29" fill="url(#ds)"/>
<ellipse cx="257.4" cy="96.4" rx="1.27" ry="1.15" fill="#4a2802" opacity=".55"/>
<ellipse cx="257.1" cy="95.9" rx="1.27" ry="1.23" fill="url(#ds)"/>
<ellipse cx="138.5" cy="96.4" rx="1.50" ry="1.35" fill="#4a2802" opacity=".55"/>
<ellipse cx="138.2" cy="95.8" rx="1.50" ry="1.46" fill="url(#dy)"/>
<ellipse cx="135.9" cy="96.5" rx="1.09" ry="0.98" fill="#4a2802" opacity=".55"/>
<ellipse cx="135.6" cy="96.0" rx="1.09" ry="1.05" fill="url(#ds)"/>
<ellipse cx="113.4" cy="96.7" rx="0.91" ry="0.82" fill="#4a2802" opacity=".55"/>
<ellipse cx="113.2" cy="96.3" rx="0.91" ry="0.88" fill="url(#ds)"/>
<ellipse cx="144.9" cy="96.8" rx="2.36" ry="2.12" fill="#4a2802" opacity=".55"/>
<ellipse cx="144.4" cy="95.8" rx="2.36" ry="2.29" fill="url(#ds)"/>
<ellipse cx="218.1" cy="96.8" rx="1.09" ry="0.98" fill="#4a2802" opacity=".55"/>
<ellipse cx="217.8" cy="96.4" rx="1.09" ry="1.06" fill="url(#ds)"/>
<ellipse cx="110.8" cy="96.9" rx="1.27" ry="1.14" fill="#4a2802" opacity=".55"/>
<ellipse cx="110.5" cy="96.4" rx="1.27" ry="1.23" fill="url(#ds)"/>
<ellipse cx="151.3" cy="97.1" rx="1.99" ry="1.80" fill="#4a2802" opacity=".55"/>
<ellipse cx="150.9" cy="96.3" rx="1.99" ry="1.93" fill="url(#ds)"/>
<ellipse cx="232.0" cy="97.3" rx="1.45" ry="1.31" fill="#4a2802" opacity=".55"/>
<ellipse cx="231.7" cy="96.7" rx="1.45" ry="1.41" fill="url(#ds)"/>
<ellipse cx="257.1" cy="97.3" rx="1.46" ry="1.31" fill="#4a2802" opacity=".55"/>
<ellipse cx="256.7" cy="96.7" rx="1.46" ry="1.41" fill="url(#ds)"/>
<ellipse cx="230.7" cy="97.3" rx="0.91" ry="0.82" fill="#4a2802" opacity=".55"/>
<ellipse cx="230.5" cy="96.9" rx="0.91" ry="0.88" fill="url(#ds)"/>
<ellipse cx="224.3" cy="97.6" rx="2.36" ry="2.13" fill="#4a2802" opacity=".55"/>
<ellipse cx="223.8" cy="96.6" rx="2.36" ry="2.29" fill="url(#ds)"/>
<ellipse cx="173.2" cy="98.1" rx="3.99" ry="3.59" fill="#4a2802" opacity=".55"/>
<ellipse cx="172.3" cy="96.4" rx="3.99" ry="3.87" fill="url(#dg)"/>
<ellipse cx="100.8" cy="97.8" rx="1.09" ry="0.98" fill="#4a2802" opacity=".55"/>
<ellipse cx="100.5" cy="97.3" rx="1.09" ry="1.06" fill="url(#ds)"/>
<ellipse cx="185.9" cy="98.2" rx="2.36" ry="2.13" fill="#4a2802" opacity=".55"/>
<ellipse cx="185.4" cy="97.2" rx="2.36" ry="2.29" fill="url(#ds)"/>
<ellipse cx="207.5" cy="98.2" rx="1.09" ry="0.98" fill="#4a2802" opacity=".55"/>
<ellipse cx="207.3" cy="97.7" rx="1.09" ry="1.06" fill="url(#ds)"/>
<ellipse cx="184.1" cy="98.2" rx="0.91" ry="0.82" fill="#4a2802" opacity=".55"/>
<ellipse cx="183.9" cy="97.8" rx="0.91" ry="0.88" fill="url(#ds)"/>
<ellipse cx="234.3" cy="98.4" rx="2.55" ry="2.29" fill="#4a2802" opacity=".55"/>
<ellipse cx="233.7" cy="97.3" rx="2.55" ry="2.47" fill="url(#dyg)"/>
<ellipse cx="78.0" cy="98.7" rx="2.09" ry="1.88" fill="#4a2802" opacity=".55"/>
<ellipse cx="77.5" cy="97.8" rx="2.09" ry="2.02" fill="url(#dy)"/>
<ellipse cx="196.1" cy="98.6" rx="0.82" ry="0.74" fill="#4a2802" opacity=".55"/>
<ellipse cx="195.9" cy="98.2" rx="0.82" ry="0.79" fill="url(#ds)"/>
<ellipse cx="213.2" cy="98.7" rx="0.82" ry="0.74" fill="#4a2802" opacity=".55"/>
<ellipse cx="213.0" cy="98.3" rx="0.82" ry="0.79" fill="url(#ds)"/>
<ellipse cx="198.2" cy="98.9" rx="1.46" ry="1.31" fill="#4a2802" opacity=".55"/>
<ellipse cx="197.9" cy="98.3" rx="1.46" ry="1.41" fill="url(#ds)"/>
<ellipse cx="157.7" cy="98.9" rx="1.27" ry="1.14" fill="#4a2802" opacity=".55"/>
<ellipse cx="157.5" cy="98.4" rx="1.27" ry="1.23" fill="url(#ds)"/>
<ellipse cx="197.9" cy="99.6" rx="1.27" ry="1.15" fill="#4a2802" opacity=".55"/>
<ellipse cx="197.6" cy="99.1" rx="1.27" ry="1.24" fill="url(#ds)"/>
<ellipse cx="221.1" cy="99.7" rx="1.46" ry="1.31" fill="#4a2802" opacity=".55"/>
<ellipse cx="220.8" cy="99.1" rx="1.46" ry="1.41" fill="url(#ds)"/>
<ellipse cx="163.8" cy="99.6" rx="0.91" ry="0.82" fill="#4a2802" opacity=".55"/>
<ellipse cx="163.6" cy="99.2" rx="0.91" ry="0.88" fill="url(#ds)"/>
<ellipse cx="76.9" cy="99.7" rx="0.91" ry="0.82" fill="#4a2802" opacity=".55"/>
<ellipse cx="76.7" cy="99.3" rx="0.91" ry="0.88" fill="url(#ds)"/>
<ellipse cx="102.9" cy="100.8" rx="1.46" ry="1.31" fill="#4a2802" opacity=".55"/>
<ellipse cx="102.5" cy="100.2" rx="1.46" ry="1.41" fill="url(#ds)"/>
<ellipse cx="142.4" cy="100.9" rx="0.82" ry="0.74" fill="#4a2802" opacity=".55"/>
<ellipse cx="142.3" cy="100.5" rx="0.82" ry="0.79" fill="url(#ds)"/>
<ellipse cx="125.6" cy="101.2" rx="2.28" ry="2.05" fill="#4a2802" opacity=".55"/>
<ellipse cx="125.1" cy="100.2" rx="2.28" ry="2.21" fill="url(#dg)"/>
<ellipse cx="198.4" cy="101.3" rx="1.46" ry="1.31" fill="#4a2802" opacity=".55"/>
<ellipse cx="198.1" cy="100.7" rx="1.46" ry="1.42" fill="url(#ds)"/>
<ellipse cx="252.4" cy="101.3" rx="1.46" ry="1.32" fill="#4a2802" opacity=".55"/>
<ellipse cx="252.0" cy="100.7" rx="1.46" ry="1.42" fill="url(#ds)"/>
<ellipse cx="140.3" cy="101.5" rx="2.00" ry="1.80" fill="#4a2802" opacity=".55"/>
<ellipse cx="139.8" cy="100.6" rx="2.00" ry="1.94" fill="url(#ds)"/>
<ellipse cx="63.4" cy="101.5" rx="1.73" ry="1.56" fill="#4a2802" opacity=".55"/>
<ellipse cx="63.0" cy="100.8" rx="1.73" ry="1.68" fill="url(#ds)"/>
<ellipse cx="199.0" cy="101.8" rx="1.92" ry="1.72" fill="#4a2802" opacity=".55"/>
<ellipse cx="198.6" cy="101.0" rx="1.92" ry="1.86" fill="url(#dg)"/>
<ellipse cx="75.5" cy="101.8" rx="1.46" ry="1.31" fill="#4a2802" opacity=".55"/>
<ellipse cx="75.2" cy="101.2" rx="1.46" ry="1.41" fill="url(#ds)"/>
<ellipse cx="82.7" cy="101.9" rx="1.46" ry="1.31" fill="#4a2802" opacity=".55"/>
<ellipse cx="82.4" cy="101.3" rx="1.46" ry="1.41" fill="url(#ds)"/>
<ellipse cx="196.0" cy="101.9" rx="0.91" ry="0.82" fill="#4a2802" opacity=".55"/>
<ellipse cx="195.8" cy="101.5" rx="0.91" ry="0.89" fill="url(#ds)"/>
<ellipse cx="141.4" cy="102.0" rx="1.46" ry="1.31" fill="#4a2802" opacity=".55"/>
<ellipse cx="141.1" cy="101.4" rx="1.46" ry="1.41" fill="url(#ds)"/>
<ellipse cx="151.5" cy="102.1" rx="0.82" ry="0.74" fill="#4a2802" opacity=".55"/>
<ellipse cx="151.3" cy="101.8" rx="0.82" ry="0.80" fill="url(#ds)"/>
<ellipse cx="164.7" cy="102.6" rx="2.37" ry="2.13" fill="#4a2802" opacity=".55"/>
<ellipse cx="164.2" cy="101.6" rx="2.37" ry="2.30" fill="url(#ds)"/>
<ellipse cx="163.2" cy="102.5" rx="1.46" ry="1.31" fill="#4a2802" opacity=".55"/>
<ellipse cx="162.9" cy="101.9" rx="1.46" ry="1.42" fill="url(#ds)"/>
<ellipse cx="70.4" cy="102.7" rx="2.10" ry="1.89" fill="#4a2802" opacity=".55"/>
<ellipse cx="70.0" cy="101.8" rx="2.10" ry="2.03" fill="url(#dy)"/>
<ellipse cx="224.1" cy="102.7" rx="1.46" ry="1.32" fill="#4a2802" opacity=".55"/>
<ellipse cx="223.8" cy="102.1" rx="1.46" ry="1.42" fill="url(#ds)"/>
<ellipse cx="66.4" cy="103.0" rx="2.01" ry="1.80" fill="#4a2802" opacity=".55"/>
<ellipse cx="65.9" cy="102.2" rx="2.01" ry="1.95" fill="url(#ds)"/>
<ellipse cx="251.2" cy="103.6" rx="2.01" ry="1.81" fill="#4a2802" opacity=".55"/>
<ellipse cx="250.7" cy="102.7" rx="2.01" ry="1.95" fill="url(#ds)"/>
<ellipse cx="73.7" cy="103.5" rx="1.46" ry="1.31" fill="#4a2802" opacity=".55"/>
<ellipse cx="73.4" cy="102.9" rx="1.46" ry="1.42" fill="url(#ds)"/>
<ellipse cx="170.8" cy="103.5" rx="1.10" ry="0.99" fill="#4a2802" opacity=".55"/>
<ellipse cx="170.5" cy="103.1" rx="1.10" ry="1.06" fill="url(#ds)"/>
<ellipse cx="221.0" cy="103.6" rx="0.91" ry="0.82" fill="#4a2802" opacity=".55"/>
<ellipse cx="220.8" cy="103.2" rx="0.91" ry="0.89" fill="url(#ds)"/>
<ellipse cx="238.2" cy="103.7" rx="1.28" ry="1.15" fill="#4a2802" opacity=".55"/>
<ellipse cx="237.9" cy="103.1" rx="1.28" ry="1.24" fill="url(#ds)"/>
<ellipse cx="110.1" cy="104.1" rx="1.28" ry="1.15" fill="#4a2802" opacity=".55"/>
<ellipse cx="109.8" cy="103.6" rx="1.28" ry="1.24" fill="url(#ds)"/>
<ellipse cx="131.8" cy="104.6" rx="4.02" ry="3.62" fill="#4a2802" opacity=".55"/>
<ellipse cx="130.9" cy="102.9" rx="4.02" ry="3.90" fill="url(#dg)"/>
<ellipse cx="109.3" cy="104.5" rx="1.76" ry="1.59" fill="#4a2802" opacity=".55"/>
<ellipse cx="108.9" cy="103.8" rx="1.76" ry="1.71" fill="url(#dy)"/>
<ellipse cx="252.5" cy="104.6" rx="1.10" ry="0.99" fill="#4a2802" opacity=".55"/>
<ellipse cx="252.2" cy="104.2" rx="1.10" ry="1.07" fill="url(#ds)"/>
<ellipse cx="116.8" cy="104.8" rx="1.28" ry="1.15" fill="#4a2802" opacity=".55"/>
<ellipse cx="116.5" cy="104.2" rx="1.28" ry="1.24" fill="url(#ds)"/>
<ellipse cx="248.7" cy="104.9" rx="1.74" ry="1.57" fill="#4a2802" opacity=".55"/>
<ellipse cx="248.4" cy="104.1" rx="1.74" ry="1.69" fill="url(#ds)"/>
<ellipse cx="102.2" cy="104.9" rx="1.10" ry="0.99" fill="#4a2802" opacity=".55"/>
<ellipse cx="101.9" cy="104.5" rx="1.10" ry="1.06" fill="url(#ds)"/>
<ellipse cx="79.5" cy="105.6" rx="1.74" ry="1.56" fill="#4a2802" opacity=".55"/>
<ellipse cx="79.1" cy="104.8" rx="1.74" ry="1.68" fill="url(#ds)"/>
<ellipse cx="113.5" cy="105.8" rx="1.10" ry="0.99" fill="#4a2802" opacity=".55"/>
<ellipse cx="113.3" cy="105.4" rx="1.10" ry="1.06" fill="url(#ds)"/>
<ellipse cx="173.1" cy="106.2" rx="2.36" ry="2.12" fill="#4a2802" opacity=".55"/>
<ellipse cx="172.6" cy="105.2" rx="2.36" ry="2.29" fill="url(#dy)"/>
<ellipse cx="208.9" cy="106.3" rx="1.47" ry="1.32" fill="#4a2802" opacity=".55"/>
<ellipse cx="208.6" cy="105.7" rx="1.47" ry="1.42" fill="url(#ds)"/>
<ellipse cx="243.1" cy="106.7" rx="1.29" ry="1.16" fill="#4a2802" opacity=".55"/>
<ellipse cx="242.8" cy="106.1" rx="1.29" ry="1.25" fill="url(#ds)"/>
<ellipse cx="258.2" cy="106.7" rx="1.29" ry="1.16" fill="#4a2802" opacity=".55"/>
<ellipse cx="257.9" cy="106.2" rx="1.29" ry="1.25" fill="url(#dg)"/>
<ellipse cx="244.7" cy="107.0" rx="2.71" ry="2.43" fill="#4a2802" opacity=".55"/>
<ellipse cx="244.1" cy="105.8" rx="2.71" ry="2.62" fill="url(#dy)"/>
<ellipse cx="216.2" cy="107.1" rx="0.83" ry="0.74" fill="#4a2802" opacity=".55"/>
<ellipse cx="216.0" cy="106.8" rx="0.83" ry="0.80" fill="url(#ds)"/>
<ellipse cx="187.8" cy="107.7" rx="4.77" ry="4.29" fill="#4a2802" opacity=".55"/>
<ellipse cx="186.7" cy="105.7" rx="4.77" ry="4.63" fill="url(#dyg)"/>
<ellipse cx="142.6" cy="107.8" rx="1.10" ry="0.99" fill="#4a2802" opacity=".55"/>
<ellipse cx="142.4" cy="107.3" rx="1.10" ry="1.07" fill="url(#ds)"/>
<ellipse cx="131.0" cy="108.3" rx="1.74" ry="1.57" fill="#4a2802" opacity=".55"/>
<ellipse cx="130.6" cy="107.6" rx="1.74" ry="1.69" fill="url(#ds)"/>
<ellipse cx="258.3" cy="108.8" rx="1.75" ry="1.58" fill="#4a2802" opacity=".55"/>
<ellipse cx="258.0" cy="108.1" rx="1.75" ry="1.70" fill="url(#ds)"/>
<ellipse cx="71.8" cy="109.2" rx="2.11" ry="1.90" fill="#4a2802" opacity=".55"/>
<ellipse cx="71.3" cy="108.3" rx="2.11" ry="2.05" fill="url(#dy)"/>
<ellipse cx="82.7" cy="109.1" rx="1.47" ry="1.32" fill="#4a2802" opacity=".55"/>
<ellipse cx="82.4" cy="108.5" rx="1.47" ry="1.42" fill="url(#ds)"/>
<ellipse cx="138.0" cy="109.5" rx="1.29" ry="1.16" fill="#4a2802" opacity=".55"/>
<ellipse cx="137.7" cy="108.9" rx="1.29" ry="1.25" fill="url(#ds)"/>
<ellipse cx="114.6" cy="109.6" rx="2.20" ry="1.98" fill="#4a2802" opacity=".55"/>
<ellipse cx="114.1" cy="108.7" rx="2.20" ry="2.13" fill="url(#dy)"/>
<ellipse cx="212.1" cy="109.8" rx="2.12" ry="1.91" fill="#4a2802" opacity=".55"/>
<ellipse cx="211.6" cy="108.9" rx="2.12" ry="2.05" fill="url(#dy)"/>
<ellipse cx="229.2" cy="109.8" rx="2.20" ry="1.98" fill="#4a2802" opacity=".55"/>
<ellipse cx="228.8" cy="108.9" rx="2.20" ry="2.14" fill="url(#dy)"/>
<ellipse cx="199.3" cy="110.0" rx="1.47" ry="1.33" fill="#4a2802" opacity=".55"/>
<ellipse cx="199.0" cy="109.4" rx="1.47" ry="1.43" fill="url(#ds)"/>
<ellipse cx="109.1" cy="110.2" rx="1.75" ry="1.57" fill="#4a2802" opacity=".55"/>
<ellipse cx="108.7" cy="109.5" rx="1.75" ry="1.69" fill="url(#ds)"/>
<ellipse cx="68.8" cy="110.3" rx="2.02" ry="1.82" fill="#4a2802" opacity=".55"/>
<ellipse cx="68.3" cy="109.4" rx="2.02" ry="1.96" fill="url(#ds)"/>
<ellipse cx="169.8" cy="110.5" rx="2.12" ry="1.90" fill="#4a2802" opacity=".55"/>
<ellipse cx="169.3" cy="109.6" rx="2.12" ry="2.05" fill="url(#dy)"/>
<ellipse cx="124.6" cy="110.5" rx="2.20" ry="1.98" fill="#4a2802" opacity=".55"/>
<ellipse cx="124.1" cy="109.6" rx="2.20" ry="2.13" fill="url(#dy)"/>
<ellipse cx="219.0" cy="110.7" rx="3.31" ry="2.98" fill="#4a2802" opacity=".55"/>
<ellipse cx="218.3" cy="109.3" rx="3.31" ry="3.21" fill="url(#dy)"/>
<ellipse cx="65.4" cy="110.8" rx="2.02" ry="1.82" fill="#4a2802" opacity=".55"/>
<ellipse cx="64.9" cy="109.9" rx="2.02" ry="1.96" fill="url(#ds)"/>
<ellipse cx="65.0" cy="110.8" rx="1.47" ry="1.32" fill="#4a2802" opacity=".55"/>
<ellipse cx="64.7" cy="110.2" rx="1.47" ry="1.43" fill="url(#ds)"/>
<ellipse cx="102.4" cy="111.3" rx="1.10" ry="0.99" fill="#4a2802" opacity=".55"/>
<ellipse cx="102.1" cy="110.8" rx="1.10" ry="1.07" fill="url(#ds)"/>
<ellipse cx="146.3" cy="111.3" rx="1.75" ry="1.57" fill="#4a2802" opacity=".55"/>
<ellipse cx="145.9" cy="110.6" rx="1.75" ry="1.70" fill="url(#ds)"/>
<ellipse cx="215.5" cy="111.4" rx="0.83" ry="0.75" fill="#4a2802" opacity=".55"/>
<ellipse cx="215.4" cy="111.1" rx="0.83" ry="0.81" fill="url(#ds)"/>
<ellipse cx="178.7" cy="111.5" rx="1.75" ry="1.58" fill="#4a2802" opacity=".55"/>
<ellipse cx="178.3" cy="110.8" rx="1.75" ry="1.70" fill="url(#ds)"/>
<ellipse cx="131.3" cy="111.5" rx="0.83" ry="0.75" fill="#4a2802" opacity=".55"/>
<ellipse cx="131.1" cy="111.2" rx="0.83" ry="0.80" fill="url(#ds)"/>
<ellipse cx="138.5" cy="111.8" rx="1.11" ry="0.99" fill="#4a2802" opacity=".55"/>
<ellipse cx="138.3" cy="111.3" rx="1.11" ry="1.07" fill="url(#ds)"/>
<ellipse cx="208.1" cy="112.0" rx="0.92" ry="0.83" fill="#4a2802" opacity=".55"/>
<ellipse cx="207.9" cy="111.6" rx="0.92" ry="0.90" fill="url(#ds)"/>
<ellipse cx="228.4" cy="112.2" rx="0.83" ry="0.75" fill="#4a2802" opacity=".55"/>
<ellipse cx="228.3" cy="111.8" rx="0.83" ry="0.81" fill="url(#ds)"/>
<ellipse cx="154.6" cy="112.5" rx="1.11" ry="1.00" fill="#4a2802" opacity=".55"/>
<ellipse cx="154.4" cy="112.0" rx="1.11" ry="1.07" fill="url(#ds)"/>
<ellipse cx="99.1" cy="113.0" rx="5.28" ry="4.75" fill="#4a2802" opacity=".55"/>
<ellipse cx="98.0" cy="110.8" rx="5.28" ry="5.12" fill="url(#dG)"/>
<ellipse cx="76.5" cy="112.7" rx="1.75" ry="1.58" fill="#4a2802" opacity=".55"/>
<ellipse cx="76.2" cy="112.0" rx="1.75" ry="1.70" fill="url(#ds)"/>
<ellipse cx="133.7" cy="112.7" rx="0.83" ry="0.75" fill="#4a2802" opacity=".55"/>
<ellipse cx="133.6" cy="112.3" rx="0.83" ry="0.80" fill="url(#ds)"/>
<ellipse cx="207.9" cy="112.7" rx="0.92" ry="0.83" fill="#4a2802" opacity=".55"/>
<ellipse cx="207.7" cy="112.3" rx="0.92" ry="0.90" fill="url(#ds)"/>
<ellipse cx="198.1" cy="112.9" rx="1.75" ry="1.58" fill="#4a2802" opacity=".55"/>
<ellipse cx="197.7" cy="112.1" rx="1.75" ry="1.70" fill="url(#ds)"/>
<ellipse cx="89.9" cy="113.0" rx="1.75" ry="1.58" fill="#4a2802" opacity=".55"/>
<ellipse cx="89.5" cy="112.2" rx="1.75" ry="1.70" fill="url(#ds)"/>
<ellipse cx="126.6" cy="113.4" rx="2.40" ry="2.16" fill="#4a2802" opacity=".55"/>
<ellipse cx="126.0" cy="112.4" rx="2.40" ry="2.33" fill="url(#ds)"/>
<ellipse cx="242.1" cy="113.5" rx="1.11" ry="1.00" fill="#4a2802" opacity=".55"/>
<ellipse cx="241.8" cy="113.1" rx="1.11" ry="1.08" fill="url(#ds)"/>
<ellipse cx="256.3" cy="113.6" rx="1.30" ry="1.17" fill="#4a2802" opacity=".55"/>
<ellipse cx="256.0" cy="113.0" rx="1.30" ry="1.26" fill="url(#ds)"/>
<ellipse cx="134.2" cy="113.6" rx="1.11" ry="1.00" fill="#4a2802" opacity=".55"/>
<ellipse cx="133.9" cy="113.1" rx="1.11" ry="1.07" fill="url(#ds)"/>
<ellipse cx="96.5" cy="113.7" rx="1.29" ry="1.16" fill="#4a2802" opacity=".55"/>
<ellipse cx="96.2" cy="113.1" rx="1.29" ry="1.25" fill="url(#ds)"/>
<ellipse cx="86.7" cy="114.0" rx="2.03" ry="1.83" fill="#4a2802" opacity=".55"/>
<ellipse cx="86.2" cy="113.1" rx="2.03" ry="1.97" fill="url(#ds)"/>
<ellipse cx="91.6" cy="114.1" rx="1.29" ry="1.16" fill="#4a2802" opacity=".55"/>
<ellipse cx="91.4" cy="113.6" rx="1.29" ry="1.25" fill="url(#ds)"/>
<ellipse cx="200.8" cy="114.4" rx="2.03" ry="1.83" fill="#4a2802" opacity=".55"/>
<ellipse cx="200.4" cy="113.6" rx="2.03" ry="1.97" fill="url(#ds)"/>
<ellipse cx="73.9" cy="114.4" rx="0.92" ry="0.83" fill="#4a2802" opacity=".55"/>
<ellipse cx="73.7" cy="114.0" rx="0.92" ry="0.90" fill="url(#ds)"/>
<ellipse cx="88.7" cy="114.6" rx="1.53" ry="1.38" fill="#4a2802" opacity=".55"/>
<ellipse cx="88.3" cy="114.0" rx="1.53" ry="1.48" fill="url(#dy)"/>
<ellipse cx="229.4" cy="114.7" rx="1.48" ry="1.33" fill="#4a2802" opacity=".55"/>
<ellipse cx="229.1" cy="114.1" rx="1.48" ry="1.44" fill="url(#ds)"/>
<ellipse cx="115.8" cy="114.8" rx="2.03" ry="1.83" fill="#4a2802" opacity=".55"/>
<ellipse cx="115.3" cy="114.0" rx="2.03" ry="1.97" fill="url(#ds)"/>
<ellipse cx="65.0" cy="114.9" rx="0.92" ry="0.83" fill="#4a2802" opacity=".55"/>
<ellipse cx="64.8" cy="114.6" rx="0.92" ry="0.90" fill="url(#ds)"/>
<ellipse cx="257.8" cy="115.6" rx="2.13" ry="1.92" fill="#4a2802" opacity=".55"/>
<ellipse cx="257.3" cy="114.7" rx="2.13" ry="2.07" fill="url(#dy)"/>
<ellipse cx="138.5" cy="115.5" rx="0.83" ry="0.75" fill="#4a2802" opacity=".55"/>
<ellipse cx="138.3" cy="115.1" rx="0.83" ry="0.81" fill="url(#ds)"/>
<ellipse cx="233.6" cy="115.5" rx="0.83" ry="0.75" fill="#4a2802" opacity=".55"/>
<ellipse cx="233.4" cy="115.2" rx="0.83" ry="0.81" fill="url(#ds)"/>
<ellipse cx="214.1" cy="115.7" rx="2.04" ry="1.83" fill="#4a2802" opacity=".55"/>
<ellipse cx="213.6" cy="114.8" rx="2.04" ry="1.98" fill="url(#ds)"/>
<ellipse cx="249.1" cy="116.3" rx="4.18" ry="3.77" fill="#4a2802" opacity=".55"/>
<ellipse cx="248.2" cy="114.6" rx="4.18" ry="4.06" fill="url(#dy)"/>
<ellipse cx="89.1" cy="116.3" rx="1.48" ry="1.33" fill="#4a2802" opacity=".55"/>
<ellipse cx="88.8" cy="115.6" rx="1.48" ry="1.44" fill="url(#ds)"/>
<ellipse cx="190.9" cy="116.5" rx="2.13" ry="1.92" fill="#4a2802" opacity=".55"/>
<ellipse cx="190.4" cy="115.6" rx="2.13" ry="2.07" fill="url(#dy)"/>
<ellipse cx="243.1" cy="116.5" rx="0.84" ry="0.75" fill="#4a2802" opacity=".55"/>
<ellipse cx="242.9" cy="116.2" rx="0.84" ry="0.81" fill="url(#ds)"/>
<ellipse cx="62.5" cy="117.3" rx="5.31" ry="4.77" fill="#4a2802" opacity=".55"/>
<ellipse cx="61.3" cy="115.1" rx="5.31" ry="5.15" fill="url(#dG)"/>
<ellipse cx="114.0" cy="117.2" rx="1.76" ry="1.58" fill="#4a2802" opacity=".55"/>
<ellipse cx="113.6" cy="116.5" rx="1.76" ry="1.71" fill="url(#ds)"/>
<ellipse cx="192.7" cy="117.2" rx="1.48" ry="1.34" fill="#4a2802" opacity=".55"/>
<ellipse cx="192.4" cy="116.6" rx="1.48" ry="1.44" fill="url(#ds)"/>
<ellipse cx="82.5" cy="117.5" rx="2.41" ry="2.17" fill="#4a2802" opacity=".55"/>
<ellipse cx="82.0" cy="116.5" rx="2.41" ry="2.33" fill="url(#ds)"/>
<ellipse cx="118.0" cy="117.3" rx="0.74" ry="0.67" fill="#4a2802" opacity=".55"/>
<ellipse cx="117.8" cy="117.0" rx="0.74" ry="0.72" fill="url(#ds)"/>
<ellipse cx="91.0" cy="117.4" rx="1.48" ry="1.33" fill="#4a2802" opacity=".55"/>
<ellipse cx="90.7" cy="116.8" rx="1.48" ry="1.44" fill="url(#ds)"/>
<ellipse cx="216.0" cy="117.4" rx="0.84" ry="0.75" fill="#4a2802" opacity=".55"/>
<ellipse cx="215.8" cy="117.1" rx="0.84" ry="0.81" fill="url(#ds)"/>
<ellipse cx="171.4" cy="117.5" rx="0.83" ry="0.75" fill="#4a2802" opacity=".55"/>
<ellipse cx="171.2" cy="117.2" rx="0.83" ry="0.81" fill="url(#ds)"/>
<ellipse cx="122.2" cy="117.9" rx="0.93" ry="0.83" fill="#4a2802" opacity=".55"/>
<ellipse cx="122.0" cy="117.5" rx="0.93" ry="0.90" fill="url(#ds)"/>
<ellipse cx="233.5" cy="118.0" rx="1.30" ry="1.17" fill="#4a2802" opacity=".55"/>
<ellipse cx="233.2" cy="117.4" rx="1.30" ry="1.26" fill="url(#ds)"/>
<ellipse cx="91.5" cy="118.2" rx="2.13" ry="1.92" fill="#4a2802" opacity=".55"/>
<ellipse cx="91.0" cy="117.3" rx="2.13" ry="2.07" fill="url(#dy)"/>
<ellipse cx="186.3" cy="118.1" rx="1.11" ry="1.00" fill="#4a2802" opacity=".55"/>
<ellipse cx="186.0" cy="117.7" rx="1.11" ry="1.08" fill="url(#ds)"/>
<ellipse cx="239.7" cy="118.2" rx="0.93" ry="0.84" fill="#4a2802" opacity=".55"/>
<ellipse cx="239.5" cy="117.8" rx="0.93" ry="0.90" fill="url(#ds)"/>
<ellipse cx="140.0" cy="119.0" rx="0.84" ry="0.75" fill="#4a2802" opacity=".55"/>
<ellipse cx="139.8" cy="118.6" rx="0.84" ry="0.81" fill="url(#ds)"/>
<ellipse cx="186.7" cy="119.1" rx="1.30" ry="1.17" fill="#4a2802" opacity=".55"/>
<ellipse cx="186.5" cy="118.5" rx="1.30" ry="1.26" fill="url(#ds)"/>
<ellipse cx="178.7" cy="119.2" rx="1.11" ry="1.00" fill="#4a2802" opacity=".55"/>
<ellipse cx="178.5" cy="118.8" rx="1.11" ry="1.08" fill="url(#ds)"/>
<ellipse cx="208.6" cy="119.4" rx="2.05" ry="1.84" fill="#4a2802" opacity=".55"/>
<ellipse cx="208.1" cy="118.5" rx="2.05" ry="1.98" fill="url(#ds)"/>
<ellipse cx="60.5" cy="119.3" rx="1.11" ry="1.00" fill="#4a2802" opacity=".55"/>
<ellipse cx="60.2" cy="118.8" rx="1.11" ry="1.08" fill="url(#ds)"/>
<ellipse cx="105.4" cy="119.7" rx="3.62" ry="3.26" fill="#4a2802" opacity=".55"/>
<ellipse cx="104.6" cy="118.2" rx="3.62" ry="3.51" fill="url(#dyg)"/>
<ellipse cx="72.1" cy="119.6" rx="1.48" ry="1.34" fill="#4a2802" opacity=".55"/>
<ellipse cx="71.8" cy="119.0" rx="1.48" ry="1.44" fill="url(#ds)"/>
<ellipse cx="88.4" cy="120.0" rx="2.04" ry="1.84" fill="#4a2802" opacity=".55"/>
<ellipse cx="87.9" cy="119.2" rx="2.04" ry="1.98" fill="url(#ds)"/>
<ellipse cx="228.0" cy="120.5" rx="4.67" ry="4.21" fill="#4a2802" opacity=".55"/>
<ellipse cx="227.0" cy="118.6" rx="4.67" ry="4.53" fill="url(#dG)"/>
<ellipse cx="171.8" cy="120.8" rx="3.63" ry="3.27" fill="#4a2802" opacity=".55"/>
<ellipse cx="171.0" cy="119.2" rx="3.63" ry="3.52" fill="url(#dg)"/>
<ellipse cx="256.9" cy="120.7" rx="2.05" ry="1.85" fill="#4a2802" opacity=".55"/>
<ellipse cx="256.4" cy="119.9" rx="2.05" ry="1.99" fill="url(#ds)"/>
<ellipse cx="121.1" cy="120.7" rx="1.30" ry="1.17" fill="#4a2802" opacity=".55"/>
<ellipse cx="120.8" cy="120.2" rx="1.30" ry="1.26" fill="url(#ds)"/>
<ellipse cx="177.9" cy="120.8" rx="1.77" ry="1.59" fill="#4a2802" opacity=".55"/>
<ellipse cx="177.6" cy="120.1" rx="1.77" ry="1.72" fill="url(#ds)"/>
<ellipse cx="182.0" cy="121.0" rx="2.14" ry="1.93" fill="#4a2802" opacity=".55"/>
<ellipse cx="181.5" cy="120.1" rx="2.14" ry="2.08" fill="url(#dy)"/>
<ellipse cx="139.1" cy="121.0" rx="0.93" ry="0.84" fill="#4a2802" opacity=".55"/>
<ellipse cx="138.9" cy="120.6" rx="0.93" ry="0.90" fill="url(#ds)"/>
<ellipse cx="199.0" cy="121.8" rx="6.68" ry="6.01" fill="#4a2802" opacity=".55"/>
<ellipse cx="197.5" cy="119.0" rx="6.68" ry="6.48" fill="url(#dG)"/>
<ellipse cx="175.2" cy="121.2" rx="0.84" ry="0.75" fill="#4a2802" opacity=".55"/>
<ellipse cx="175.0" cy="120.8" rx="0.84" ry="0.81" fill="url(#ds)"/>
<ellipse cx="193.6" cy="122.0" rx="2.05" ry="1.85" fill="#4a2802" opacity=".55"/>
<ellipse cx="193.1" cy="121.2" rx="2.05" ry="1.99" fill="url(#ds)"/>
<ellipse cx="208.0" cy="122.0" rx="0.93" ry="0.84" fill="#4a2802" opacity=".55"/>
<ellipse cx="207.8" cy="121.6" rx="0.93" ry="0.90" fill="url(#ds)"/>
<ellipse cx="212.4" cy="122.2" rx="1.49" ry="1.34" fill="#4a2802" opacity=".55"/>
<ellipse cx="212.1" cy="121.6" rx="1.49" ry="1.45" fill="url(#ds)"/>
<ellipse cx="251.3" cy="122.4" rx="0.93" ry="0.84" fill="#4a2802" opacity=".55"/>
<ellipse cx="251.1" cy="122.0" rx="0.93" ry="0.91" fill="url(#ds)"/>
<ellipse cx="189.7" cy="122.8" rx="2.05" ry="1.85" fill="#4a2802" opacity=".55"/>
<ellipse cx="189.3" cy="122.0" rx="2.05" ry="1.99" fill="url(#ds)"/>
<ellipse cx="144.7" cy="122.9" rx="1.30" ry="1.17" fill="#4a2802" opacity=".55"/>
<ellipse cx="144.4" cy="122.3" rx="1.30" ry="1.27" fill="url(#dg)"/>
<ellipse cx="135.0" cy="123.6" rx="2.42" ry="2.18" fill="#4a2802" opacity=".55"/>
<ellipse cx="134.5" cy="122.6" rx="2.42" ry="2.35" fill="url(#ds)"/>
<ellipse cx="105.5" cy="123.7" rx="1.77" ry="1.59" fill="#4a2802" opacity=".55"/>
<ellipse cx="105.1" cy="122.9" rx="1.77" ry="1.72" fill="url(#ds)"/>
<ellipse cx="137.7" cy="123.7" rx="0.84" ry="0.76" fill="#4a2802" opacity=".55"/>
<ellipse cx="137.5" cy="123.3" rx="0.84" ry="0.81" fill="url(#ds)"/>
<ellipse cx="119.0" cy="124.2" rx="4.57" ry="4.11" fill="#4a2802" opacity=".55"/>
<ellipse cx="118.0" cy="122.2" rx="4.57" ry="4.43" fill="url(#dyg)"/>
<ellipse cx="241.7" cy="123.9" rx="1.12" ry="1.01" fill="#4a2802" opacity=".55"/>
<ellipse cx="241.5" cy="123.4" rx="1.12" ry="1.09" fill="url(#ds)"/>
<ellipse cx="160.4" cy="124.4" rx="3.01" ry="2.71" fill="#4a2802" opacity=".55"/>
<ellipse cx="159.8" cy="123.1" rx="3.01" ry="2.92" fill="url(#dy)"/>
<ellipse cx="74.9" cy="124.3" rx="1.77" ry="1.59" fill="#4a2802" opacity=".55"/>
<ellipse cx="74.5" cy="123.5" rx="1.77" ry="1.72" fill="url(#ds)"/>
<ellipse cx="160.5" cy="124.6" rx="2.41" ry="2.17" fill="#4a2802" opacity=".55"/>
<ellipse cx="160.0" cy="123.6" rx="2.41" ry="2.33" fill="url(#dy)"/>
<ellipse cx="250.2" cy="124.7" rx="1.12" ry="1.01" fill="#4a2802" opacity=".55"/>
<ellipse cx="250.0" cy="124.2" rx="1.12" ry="1.09" fill="url(#ds)"/>
<ellipse cx="199.4" cy="126.0" rx="7.57" ry="6.81" fill="#4a2802" opacity=".55"/>
<ellipse cx="197.8" cy="122.9" rx="7.57" ry="7.34" fill="url(#dG)"/>
<ellipse cx="248.8" cy="125.8" rx="3.66" ry="3.29" fill="#4a2802" opacity=".55"/>
<ellipse cx="248.0" cy="124.3" rx="3.66" ry="3.55" fill="url(#dg)"/>
<ellipse cx="170.3" cy="126.0" rx="1.12" ry="1.01" fill="#4a2802" opacity=".55"/>
<ellipse cx="170.1" cy="125.6" rx="1.12" ry="1.09" fill="url(#ds)"/>
<ellipse cx="57.2" cy="126.1" rx="0.75" ry="0.67" fill="#4a2802" opacity=".55"/>
<ellipse cx="57.0" cy="125.8" rx="0.75" ry="0.73" fill="url(#ds)"/>
<ellipse cx="78.3" cy="126.3" rx="1.78" ry="1.60" fill="#4a2802" opacity=".55"/>
<ellipse cx="77.9" cy="125.5" rx="1.78" ry="1.72" fill="url(#ds)"/>
<ellipse cx="240.1" cy="127.1" rx="3.66" ry="3.29" fill="#4a2802" opacity=".55"/>
<ellipse cx="239.3" cy="125.6" rx="3.66" ry="3.55" fill="url(#dg)"/>
<ellipse cx="186.2" cy="126.9" rx="1.12" ry="1.01" fill="#4a2802" opacity=".55"/>
<ellipse cx="186.0" cy="126.5" rx="1.12" ry="1.09" fill="url(#ds)"/>
<ellipse cx="167.9" cy="127.1" rx="1.50" ry="1.35" fill="#4a2802" opacity=".55"/>
<ellipse cx="167.6" cy="126.5" rx="1.50" ry="1.45" fill="url(#ds)"/>
<ellipse cx="82.1" cy="127.4" rx="4.12" ry="3.70" fill="#4a2802" opacity=".55"/>
<ellipse cx="81.2" cy="125.7" rx="4.12" ry="3.99" fill="url(#dg)"/>
<ellipse cx="208.0" cy="127.3" rx="2.06" ry="1.86" fill="#4a2802" opacity=".55"/>
<ellipse cx="207.5" cy="126.5" rx="2.06" ry="2.00" fill="url(#ds)"/>
<ellipse cx="182.0" cy="127.9" rx="2.44" ry="2.19" fill="#4a2802" opacity=".55"/>
<ellipse cx="181.5" cy="126.8" rx="2.44" ry="2.36" fill="url(#ds)"/>
<ellipse cx="156.4" cy="128.0" rx="1.12" ry="1.01" fill="#4a2802" opacity=".55"/>
<ellipse cx="156.1" cy="127.5" rx="1.12" ry="1.09" fill="url(#ds)"/>
<ellipse cx="214.6" cy="129.0" rx="1.50" ry="1.35" fill="#4a2802" opacity=".55"/>
<ellipse cx="214.3" cy="128.3" rx="1.50" ry="1.46" fill="url(#ds)"/>
<ellipse cx="240.0" cy="129.1" rx="0.94" ry="0.85" fill="#4a2802" opacity=".55"/>
<ellipse cx="239.8" cy="128.7" rx="0.94" ry="0.91" fill="url(#ds)"/>
<ellipse cx="88.7" cy="129.5" rx="1.81" ry="1.63" fill="#4a2802" opacity=".55"/>
<ellipse cx="88.3" cy="128.7" rx="1.81" ry="1.76" fill="url(#dy)"/>
<ellipse cx="82.8" cy="129.7" rx="0.84" ry="0.76" fill="#4a2802" opacity=".55"/>
<ellipse cx="82.6" cy="129.3" rx="0.84" ry="0.82" fill="url(#ds)"/>
<ellipse cx="69.2" cy="130.1" rx="1.13" ry="1.01" fill="#4a2802" opacity=".55"/>
<ellipse cx="69.0" cy="129.7" rx="1.13" ry="1.09" fill="url(#ds)"/>
<ellipse cx="212.4" cy="130.3" rx="2.07" ry="1.86" fill="#4a2802" opacity=".55"/>
<ellipse cx="212.0" cy="129.4" rx="2.07" ry="2.01" fill="url(#ds)"/>
<ellipse cx="78.7" cy="130.2" rx="0.84" ry="0.76" fill="#4a2802" opacity=".55"/>
<ellipse cx="78.5" cy="129.8" rx="0.84" ry="0.82" fill="url(#ds)"/>
<ellipse cx="164.9" cy="130.5" rx="1.13" ry="1.02" fill="#4a2802" opacity=".55"/>
<ellipse cx="164.7" cy="130.0" rx="1.13" ry="1.09" fill="url(#ds)"/>
<ellipse cx="96.7" cy="130.6" rx="0.75" ry="0.68" fill="#4a2802" opacity=".55"/>
<ellipse cx="96.5" cy="130.3" rx="0.75" ry="0.73" fill="url(#ds)"/>
<ellipse cx="77.1" cy="131.2" rx="1.32" ry="1.18" fill="#4a2802" opacity=".55"/>
<ellipse cx="76.8" cy="130.6" rx="1.32" ry="1.28" fill="url(#ds)"/>
<ellipse cx="82.6" cy="131.3" rx="2.07" ry="1.86" fill="#4a2802" opacity=".55"/>
<ellipse cx="82.1" cy="130.5" rx="2.07" ry="2.01" fill="url(#ds)"/>
<ellipse cx="240.4" cy="131.3" rx="1.32" ry="1.19" fill="#4a2802" opacity=".55"/>
<ellipse cx="240.2" cy="130.7" rx="1.32" ry="1.28" fill="url(#ds)"/>
<ellipse cx="231.2" cy="131.6" rx="2.78" ry="2.50" fill="#4a2802" opacity=".55"/>
<ellipse cx="230.5" cy="130.4" rx="2.78" ry="2.69" fill="url(#dy)"/>
<ellipse cx="221.0" cy="131.4" rx="1.32" ry="1.19" fill="#4a2802" opacity=".55"/>
<ellipse cx="220.7" cy="130.9" rx="1.32" ry="1.28" fill="url(#ds)"/>
<ellipse cx="170.6" cy="131.7" rx="1.51" ry="1.36" fill="#4a2802" opacity=".55"/>
<ellipse cx="170.3" cy="131.1" rx="1.51" ry="1.46" fill="url(#ds)"/>
<ellipse cx="168.6" cy="131.8" rx="1.32" ry="1.19" fill="#4a2802" opacity=".55"/>
<ellipse cx="168.3" cy="131.2" rx="1.32" ry="1.28" fill="url(#ds)"/>
<ellipse cx="73.9" cy="131.8" rx="1.32" ry="1.18" fill="#4a2802" opacity=".55"/>
<ellipse cx="73.6" cy="131.3" rx="1.32" ry="1.28" fill="url(#ds)"/>
<ellipse cx="132.3" cy="132.0" rx="2.07" ry="1.86" fill="#4a2802" opacity=".55"/>
<ellipse cx="131.8" cy="131.2" rx="2.07" ry="2.01" fill="url(#ds)"/>
<ellipse cx="160.6" cy="132.2" rx="1.13" ry="1.02" fill="#4a2802" opacity=".55"/>
<ellipse cx="160.3" cy="131.7" rx="1.13" ry="1.10" fill="url(#ds)"/>
<ellipse cx="91.6" cy="132.5" rx="0.85" ry="0.76" fill="#4a2802" opacity=".55"/>
<ellipse cx="91.4" cy="132.1" rx="0.85" ry="0.82" fill="url(#ds)"/>
<ellipse cx="132.2" cy="132.9" rx="1.51" ry="1.36" fill="#4a2802" opacity=".55"/>
<ellipse cx="131.9" cy="132.2" rx="1.51" ry="1.46" fill="url(#ds)"/>
<ellipse cx="248.6" cy="133.0" rx="1.32" ry="1.19" fill="#4a2802" opacity=".55"/>
<ellipse cx="248.3" cy="132.5" rx="1.32" ry="1.28" fill="url(#ds)"/>
<ellipse cx="182.0" cy="133.7" rx="2.08" ry="1.87" fill="#4a2802" opacity=".55"/>
<ellipse cx="181.5" cy="132.9" rx="2.08" ry="2.01" fill="url(#ds)"/>
<ellipse cx="184.1" cy="133.9" rx="1.32" ry="1.19" fill="#4a2802" opacity=".55"/>
<ellipse cx="183.8" cy="133.4" rx="1.32" ry="1.28" fill="url(#ds)"/>
<ellipse cx="200.9" cy="134.4" rx="2.08" ry="1.87" fill="#4a2802" opacity=".55"/>
<ellipse cx="200.4" cy="133.5" rx="2.08" ry="2.02" fill="url(#ds)"/>
<ellipse cx="134.3" cy="134.5" rx="2.08" ry="1.87" fill="#4a2802" opacity=".55"/>
<ellipse cx="133.9" cy="133.6" rx="2.08" ry="2.01" fill="url(#ds)"/>
<ellipse cx="80.1" cy="134.4" rx="0.85" ry="0.76" fill="#4a2802" opacity=".55"/>
<ellipse cx="80.0" cy="134.1" rx="0.85" ry="0.82" fill="url(#ds)"/>
<ellipse cx="65.1" cy="134.8" rx="1.79" ry="1.61" fill="#4a2802" opacity=".55"/>
<ellipse cx="64.7" cy="134.0" rx="1.79" ry="1.74" fill="url(#ds)"/>
<ellipse cx="52.8" cy="134.8" rx="1.32" ry="1.19" fill="#4a2802" opacity=".55"/>
<ellipse cx="52.5" cy="134.2" rx="1.32" ry="1.28" fill="url(#ds)"/>
<ellipse cx="168.1" cy="135.6" rx="1.98" ry="1.79" fill="#4a2802" opacity=".55"/>
<ellipse cx="167.7" cy="134.7" rx="1.98" ry="1.93" fill="url(#dg)"/>
<ellipse cx="199.3" cy="135.8" rx="1.83" ry="1.65" fill="#4a2802" opacity=".55"/>
<ellipse cx="198.9" cy="135.1" rx="1.83" ry="1.77" fill="url(#dy)"/>
<ellipse cx="114.4" cy="136.2" rx="1.32" ry="1.19" fill="#4a2802" opacity=".55"/>
<ellipse cx="114.2" cy="135.7" rx="1.32" ry="1.28" fill="url(#ds)"/>
<ellipse cx="208.0" cy="136.6" rx="0.76" ry="0.68" fill="#4a2802" opacity=".55"/>
<ellipse cx="207.8" cy="136.3" rx="0.76" ry="0.74" fill="url(#ds)"/>
<ellipse cx="68.4" cy="137.4" rx="7.94" ry="7.14" fill="#4a2802" opacity=".55"/>
<ellipse cx="66.7" cy="134.1" rx="7.94" ry="7.70" fill="url(#dyg)"/>
<ellipse cx="67.7" cy="137.1" rx="4.72" ry="4.25" fill="#4a2802" opacity=".55"/>
<ellipse cx="66.7" cy="135.1" rx="4.72" ry="4.58" fill="url(#dg)"/>
<ellipse cx="123.8" cy="137.3" rx="2.44" ry="2.19" fill="#4a2802" opacity=".55"/>
<ellipse cx="123.2" cy="136.3" rx="2.44" ry="2.36" fill="url(#dy)"/>
<ellipse cx="75.0" cy="137.6" rx="1.51" ry="1.36" fill="#4a2802" opacity=".55"/>
<ellipse cx="74.7" cy="137.0" rx="1.51" ry="1.47" fill="url(#ds)"/>
<ellipse cx="188.2" cy="137.9" rx="1.14" ry="1.02" fill="#4a2802" opacity=".55"/>
<ellipse cx="187.9" cy="137.5" rx="1.14" ry="1.10" fill="url(#ds)"/>
<ellipse cx="57.3" cy="138.0" rx="0.85" ry="0.77" fill="#4a2802" opacity=".55"/>
<ellipse cx="57.1" cy="137.7" rx="0.85" ry="0.83" fill="url(#ds)"/>
<ellipse cx="91.7" cy="138.6" rx="3.03" ry="2.73" fill="#4a2802" opacity=".55"/>
<ellipse cx="91.0" cy="137.3" rx="3.03" ry="2.94" fill="url(#dg)"/>
<ellipse cx="161.8" cy="138.6" rx="0.85" ry="0.77" fill="#4a2802" opacity=".55"/>
<ellipse cx="161.6" cy="138.3" rx="0.85" ry="0.83" fill="url(#ds)"/>
<ellipse cx="234.5" cy="139.0" rx="1.33" ry="1.20" fill="#4a2802" opacity=".55"/>
<ellipse cx="234.2" cy="138.4" rx="1.33" ry="1.29" fill="url(#ds)"/>
<ellipse cx="138.1" cy="139.4" rx="3.40" ry="3.06" fill="#4a2802" opacity=".55"/>
<ellipse cx="137.4" cy="137.9" rx="3.40" ry="3.30" fill="url(#dy)"/>
<ellipse cx="212.5" cy="139.2" rx="0.86" ry="0.77" fill="#4a2802" opacity=".55"/>
<ellipse cx="212.4" cy="138.9" rx="0.86" ry="0.83" fill="url(#ds)"/>
<ellipse cx="78.4" cy="139.2" rx="0.85" ry="0.77" fill="#4a2802" opacity=".55"/>
<ellipse cx="78.2" cy="138.9" rx="0.85" ry="0.83" fill="url(#ds)"/>
<ellipse cx="143.3" cy="139.4" rx="0.95" ry="0.85" fill="#4a2802" opacity=".55"/>
<ellipse cx="143.1" cy="139.0" rx="0.95" ry="0.92" fill="url(#ds)"/>
<ellipse cx="116.7" cy="139.8" rx="4.17" ry="3.75" fill="#4a2802" opacity=".55"/>
<ellipse cx="115.8" cy="138.0" rx="4.17" ry="4.05" fill="url(#dg)"/>
<ellipse cx="184.8" cy="139.6" rx="0.85" ry="0.77" fill="#4a2802" opacity=".55"/>
<ellipse cx="184.7" cy="139.2" rx="0.85" ry="0.83" fill="url(#ds)"/>
<ellipse cx="249.5" cy="139.9" rx="1.14" ry="1.03" fill="#4a2802" opacity=".55"/>
<ellipse cx="249.2" cy="139.4" rx="1.14" ry="1.11" fill="url(#ds)"/>
<ellipse cx="150.5" cy="140.2" rx="1.80" ry="1.62" fill="#4a2802" opacity=".55"/>
<ellipse cx="150.1" cy="139.4" rx="1.80" ry="1.75" fill="url(#ds)"/>
<ellipse cx="142.1" cy="140.4" rx="1.14" ry="1.03" fill="#4a2802" opacity=".55"/>
<ellipse cx="141.9" cy="139.9" rx="1.14" ry="1.11" fill="url(#ds)"/>
<ellipse cx="163.1" cy="140.4" rx="0.85" ry="0.77" fill="#4a2802" opacity=".55"/>
<ellipse cx="162.9" cy="140.0" rx="0.85" ry="0.83" fill="url(#ds)"/>
<ellipse cx="160.7" cy="140.9" rx="1.81" ry="1.62" fill="#4a2802" opacity=".55"/>
<ellipse cx="160.3" cy="140.1" rx="1.81" ry="1.75" fill="url(#ds)"/>
<ellipse cx="89.4" cy="140.8" rx="0.76" ry="0.68" fill="#4a2802" opacity=".55"/>
<ellipse cx="89.2" cy="140.4" rx="0.76" ry="0.74" fill="url(#ds)"/>
<ellipse cx="108.5" cy="141.0" rx="1.52" ry="1.37" fill="#4a2802" opacity=".55"/>
<ellipse cx="108.2" cy="140.4" rx="1.52" ry="1.47" fill="url(#ds)"/>
<ellipse cx="157.7" cy="141.2" rx="0.76" ry="0.68" fill="#4a2802" opacity=".55"/>
<ellipse cx="157.5" cy="140.9" rx="0.76" ry="0.74" fill="url(#ds)"/>
<ellipse cx="155.2" cy="142.1" rx="4.48" ry="4.03" fill="#4a2802" opacity=".55"/>
<ellipse cx="154.2" cy="140.2" rx="4.48" ry="4.35" fill="url(#dG)"/>
<ellipse cx="248.3" cy="142.0" rx="2.19" ry="1.98" fill="#4a2802" opacity=".55"/>
<ellipse cx="247.8" cy="141.1" rx="2.19" ry="2.13" fill="url(#dy)"/>
<ellipse cx="180.4" cy="142.1" rx="2.19" ry="1.97" fill="#4a2802" opacity=".55"/>
<ellipse cx="179.9" cy="141.2" rx="2.19" ry="2.12" fill="url(#dy)"/>
<ellipse cx="109.5" cy="142.6" rx="1.33" ry="1.20" fill="#4a2802" opacity=".55"/>
<ellipse cx="109.2" cy="142.1" rx="1.33" ry="1.29" fill="url(#ds)"/>
<ellipse cx="99.1" cy="142.7" rx="2.09" ry="1.88" fill="#4a2802" opacity=".55"/>
<ellipse cx="98.6" cy="141.8" rx="2.09" ry="2.03" fill="url(#ds)"/>
<ellipse cx="53.2" cy="142.8" rx="2.47" ry="2.22" fill="#4a2802" opacity=".55"/>
<ellipse cx="52.7" cy="141.8" rx="2.47" ry="2.40" fill="url(#ds)"/>
<ellipse cx="243.2" cy="142.7" rx="1.34" ry="1.20" fill="#4a2802" opacity=".55"/>
<ellipse cx="242.9" cy="142.1" rx="1.34" ry="1.30" fill="url(#ds)"/>
<ellipse cx="166.0" cy="142.7" rx="0.95" ry="0.86" fill="#4a2802" opacity=".55"/>
<ellipse cx="165.8" cy="142.3" rx="0.95" ry="0.92" fill="url(#ds)"/>
<ellipse cx="114.2" cy="142.9" rx="2.47" ry="2.23" fill="#4a2802" opacity=".55"/>
<ellipse cx="113.7" cy="141.8" rx="2.47" ry="2.40" fill="url(#ds)"/>
<ellipse cx="142.4" cy="142.9" rx="2.19" ry="1.97" fill="#4a2802" opacity=".55"/>
<ellipse cx="141.9" cy="142.0" rx="2.19" ry="2.12" fill="url(#dy)"/>
<ellipse cx="238.0" cy="143.0" rx="1.15" ry="1.03" fill="#4a2802" opacity=".55"/>
<ellipse cx="237.7" cy="142.5" rx="1.15" ry="1.11" fill="url(#ds)"/>
<ellipse cx="230.8" cy="144.5" rx="9.88" ry="8.89" fill="#4a2802" opacity=".55"/>
<ellipse cx="228.6" cy="140.4" rx="9.88" ry="9.58" fill="url(#dG)"/>
<ellipse cx="184.8" cy="143.7" rx="1.84" ry="1.66" fill="#4a2802" opacity=".55"/>
<ellipse cx="184.4" cy="142.9" rx="1.84" ry="1.79" fill="url(#dy)"/>
<ellipse cx="178.9" cy="144.1" rx="1.81" ry="1.63" fill="#4a2802" opacity=".55"/>
<ellipse cx="178.5" cy="143.3" rx="1.81" ry="1.76" fill="url(#ds)"/>
<ellipse cx="224.0" cy="144.7" rx="0.96" ry="0.86" fill="#4a2802" opacity=".55"/>
<ellipse cx="223.8" cy="144.3" rx="0.96" ry="0.93" fill="url(#ds)"/>
<ellipse cx="109.6" cy="144.9" rx="1.33" ry="1.20" fill="#4a2802" opacity=".55"/>
<ellipse cx="109.3" cy="144.3" rx="1.33" ry="1.29" fill="url(#ds)"/>
<ellipse cx="95.7" cy="144.9" rx="0.86" ry="0.77" fill="#4a2802" opacity=".55"/>
<ellipse cx="95.5" cy="144.5" rx="0.86" ry="0.83" fill="url(#ds)"/>
<ellipse cx="243.8" cy="145.2" rx="2.49" ry="2.24" fill="#4a2802" opacity=".55"/>
<ellipse cx="243.3" cy="144.2" rx="2.49" ry="2.41" fill="url(#ds)"/>
<ellipse cx="125.2" cy="145.2" rx="1.53" ry="1.37" fill="#4a2802" opacity=".55"/>
<ellipse cx="124.9" cy="144.6" rx="1.53" ry="1.48" fill="url(#ds)"/>
<ellipse cx="176.8" cy="145.3" rx="1.15" ry="1.03" fill="#4a2802" opacity=".55"/>
<ellipse cx="176.5" cy="144.8" rx="1.15" ry="1.11" fill="url(#ds)"/>
<ellipse cx="53.9" cy="145.9" rx="1.72" ry="1.55" fill="#4a2802" opacity=".55"/>
<ellipse cx="53.6" cy="145.1" rx="1.72" ry="1.67" fill="url(#dg)"/>
<ellipse cx="81.6" cy="146.0" rx="1.15" ry="1.03" fill="#4a2802" opacity=".55"/>
<ellipse cx="81.4" cy="145.5" rx="1.15" ry="1.11" fill="url(#ds)"/>
<ellipse cx="98.2" cy="146.1" rx="1.84" ry="1.66" fill="#4a2802" opacity=".55"/>
<ellipse cx="97.8" cy="145.3" rx="1.84" ry="1.79" fill="url(#dy)"/>
<ellipse cx="250.3" cy="146.7" rx="1.82" ry="1.64" fill="#4a2802" opacity=".55"/>
<ellipse cx="249.9" cy="146.0" rx="1.82" ry="1.77" fill="url(#ds)"/>
<ellipse cx="207.1" cy="146.6" rx="0.86" ry="0.78" fill="#4a2802" opacity=".55"/>
<ellipse cx="206.9" cy="146.3" rx="0.86" ry="0.84" fill="url(#ds)"/>
<ellipse cx="188.3" cy="147.2" rx="2.49" ry="2.24" fill="#4a2802" opacity=".55"/>
<ellipse cx="187.8" cy="146.1" rx="2.49" ry="2.41" fill="url(#ds)"/>
<ellipse cx="129.1" cy="147.4" rx="4.21" ry="3.79" fill="#4a2802" opacity=".55"/>
<ellipse cx="128.2" cy="145.7" rx="4.21" ry="4.08" fill="url(#dg)"/>
<ellipse cx="90.7" cy="147.1" rx="1.15" ry="1.03" fill="#4a2802" opacity=".55"/>
<ellipse cx="90.4" cy="146.6" rx="1.15" ry="1.11" fill="url(#ds)"/>
<ellipse cx="67.5" cy="147.2" rx="1.82" ry="1.63" fill="#4a2802" opacity=".55"/>
<ellipse cx="67.1" cy="146.5" rx="1.82" ry="1.76" fill="url(#ds)"/>
<ellipse cx="80.8" cy="147.4" rx="1.53" ry="1.38" fill="#4a2802" opacity=".55"/>
<ellipse cx="80.4" cy="146.7" rx="1.53" ry="1.48" fill="url(#ds)"/>
<ellipse cx="190.9" cy="147.4" rx="0.96" ry="0.86" fill="#4a2802" opacity=".55"/>
<ellipse cx="190.7" cy="147.0" rx="0.96" ry="0.93" fill="url(#ds)"/>
<ellipse cx="87.1" cy="147.9" rx="0.77" ry="0.69" fill="#4a2802" opacity=".55"/>
<ellipse cx="86.9" cy="147.6" rx="0.77" ry="0.74" fill="url(#ds)"/>
<ellipse cx="245.3" cy="148.2" rx="2.11" ry="1.90" fill="#4a2802" opacity=".55"/>
<ellipse cx="244.8" cy="147.3" rx="2.11" ry="2.05" fill="url(#ds)"/>
<ellipse cx="142.1" cy="148.3" rx="1.82" ry="1.64" fill="#4a2802" opacity=".55"/>
<ellipse cx="141.7" cy="147.6" rx="1.82" ry="1.76" fill="url(#ds)"/>
<ellipse cx="249.9" cy="148.5" rx="1.35" ry="1.21" fill="#4a2802" opacity=".55"/>
<ellipse cx="249.6" cy="148.0" rx="1.35" ry="1.30" fill="url(#ds)"/>
<ellipse cx="172.8" cy="149.1" rx="2.21" ry="1.98" fill="#4a2802" opacity=".55"/>
<ellipse cx="172.3" cy="148.2" rx="2.21" ry="2.14" fill="url(#dy)"/>
<ellipse cx="193.9" cy="149.1" rx="1.15" ry="1.04" fill="#4a2802" opacity=".55"/>
<ellipse cx="193.6" cy="148.6" rx="1.15" ry="1.12" fill="url(#ds)"/>
<ellipse cx="227.3" cy="149.4" rx="2.11" ry="1.90" fill="#4a2802" opacity=".55"/>
<ellipse cx="226.8" cy="148.5" rx="2.11" ry="2.05" fill="url(#ds)"/>
<ellipse cx="180.2" cy="149.3" rx="1.15" ry="1.04" fill="#4a2802" opacity=".55"/>
<ellipse cx="180.0" cy="148.8" rx="1.15" ry="1.12" fill="url(#ds)"/>
<ellipse cx="128.5" cy="149.8" rx="2.49" ry="2.24" fill="#4a2802" opacity=".55"/>
<ellipse cx="127.9" cy="148.8" rx="2.49" ry="2.42" fill="url(#ds)"/>
<ellipse cx="54.3" cy="150.1" rx="1.53" ry="1.38" fill="#4a2802" opacity=".55"/>
<ellipse cx="53.9" cy="149.4" rx="1.53" ry="1.49" fill="url(#ds)"/>
<ellipse cx="48.9" cy="150.2" rx="2.20" ry="1.98" fill="#4a2802" opacity=".55"/>
<ellipse cx="48.5" cy="149.3" rx="2.20" ry="2.14" fill="url(#dy)"/>
<ellipse cx="64.1" cy="150.5" rx="3.88" ry="3.49" fill="#4a2802" opacity=".55"/>
<ellipse cx="63.3" cy="148.8" rx="3.88" ry="3.76" fill="url(#dc)"/>
<ellipse cx="192.0" cy="150.7" rx="2.11" ry="1.90" fill="#4a2802" opacity=".55"/>
<ellipse cx="191.5" cy="149.8" rx="2.11" ry="2.05" fill="url(#ds)"/>
<ellipse cx="171.9" cy="150.6" rx="1.34" ry="1.21" fill="#4a2802" opacity=".55"/>
<ellipse cx="171.6" cy="150.0" rx="1.34" ry="1.30" fill="url(#ds)"/>
<ellipse cx="57.7" cy="150.9" rx="2.49" ry="2.24" fill="#4a2802" opacity=".55"/>
<ellipse cx="57.2" cy="149.9" rx="2.49" ry="2.42" fill="url(#ds)"/>
<ellipse cx="65.7" cy="150.9" rx="1.15" ry="1.04" fill="#4a2802" opacity=".55"/>
<ellipse cx="65.4" cy="150.4" rx="1.15" ry="1.12" fill="url(#ds)"/>
<ellipse cx="153.7" cy="151.3" rx="4.06" ry="3.66" fill="#4a2802" opacity=".55"/>
<ellipse cx="152.8" cy="149.6" rx="4.06" ry="3.94" fill="url(#dy)"/>
<ellipse cx="108.6" cy="151.1" rx="1.82" ry="1.64" fill="#4a2802" opacity=".55"/>
<ellipse cx="108.2" cy="150.3" rx="1.82" ry="1.77" fill="url(#ds)"/>
<ellipse cx="170.1" cy="151.0" rx="1.35" ry="1.21" fill="#4a2802" opacity=".55"/>
<ellipse cx="169.8" cy="150.4" rx="1.35" ry="1.30" fill="url(#ds)"/>
<ellipse cx="130.6" cy="151.1" rx="1.54" ry="1.38" fill="#4a2802" opacity=".55"/>
<ellipse cx="130.2" cy="150.4" rx="1.54" ry="1.49" fill="url(#ds)"/>
<ellipse cx="197.1" cy="151.1" rx="0.87" ry="0.78" fill="#4a2802" opacity=".55"/>
<ellipse cx="196.9" cy="150.7" rx="0.87" ry="0.84" fill="url(#ds)"/>
<ellipse cx="141.2" cy="151.5" rx="0.86" ry="0.78" fill="#4a2802" opacity=".55"/>
<ellipse cx="141.0" cy="151.1" rx="0.86" ry="0.84" fill="url(#ds)"/>
<ellipse cx="220.9" cy="151.7" rx="1.35" ry="1.21" fill="#4a2802" opacity=".55"/>
<ellipse cx="220.6" cy="151.1" rx="1.35" ry="1.31" fill="url(#ds)"/>
<ellipse cx="197.9" cy="152.0" rx="2.50" ry="2.25" fill="#4a2802" opacity=".55"/>
<ellipse cx="197.3" cy="150.9" rx="2.50" ry="2.43" fill="url(#ds)"/>
<ellipse cx="171.7" cy="152.0" rx="2.12" ry="1.90" fill="#4a2802" opacity=".55"/>
<ellipse cx="171.2" cy="151.1" rx="2.12" ry="2.05" fill="url(#ds)"/>
<ellipse cx="186.5" cy="152.2" rx="1.54" ry="1.39" fill="#4a2802" opacity=".55"/>
<ellipse cx="186.2" cy="151.5" rx="1.54" ry="1.49" fill="url(#ds)"/>
<ellipse cx="66.2" cy="152.3" rx="1.15" ry="1.04" fill="#4a2802" opacity=".55"/>
<ellipse cx="65.9" cy="151.9" rx="1.15" ry="1.12" fill="url(#ds)"/>
<ellipse cx="227.4" cy="152.6" rx="1.83" ry="1.65" fill="#4a2802" opacity=".55"/>
<ellipse cx="227.0" cy="151.8" rx="1.83" ry="1.78" fill="url(#ds)"/>
<ellipse cx="168.0" cy="152.7" rx="0.77" ry="0.69" fill="#4a2802" opacity=".55"/>
<ellipse cx="167.9" cy="152.4" rx="0.77" ry="0.75" fill="url(#ds)"/>
<ellipse cx="74.5" cy="152.9" rx="2.11" ry="1.90" fill="#4a2802" opacity=".55"/>
<ellipse cx="74.1" cy="152.0" rx="2.11" ry="2.05" fill="url(#ds)"/>
<ellipse cx="153.1" cy="152.9" rx="0.87" ry="0.78" fill="#4a2802" opacity=".55"/>
<ellipse cx="152.9" cy="152.5" rx="0.87" ry="0.84" fill="url(#ds)"/>
<ellipse cx="245.7" cy="153.2" rx="1.87" ry="1.68" fill="#4a2802" opacity=".55"/>
<ellipse cx="245.3" cy="152.4" rx="1.87" ry="1.81" fill="url(#dy)"/>
<ellipse cx="204.1" cy="153.5" rx="2.51" ry="2.26" fill="#4a2802" opacity=".55"/>
<ellipse cx="203.6" cy="152.4" rx="2.51" ry="2.43" fill="url(#ds)"/>
<ellipse cx="144.0" cy="153.6" rx="1.54" ry="1.39" fill="#4a2802" opacity=".55"/>
<ellipse cx="143.6" cy="152.9" rx="1.54" ry="1.49" fill="url(#ds)"/>
<ellipse cx="198.0" cy="154.3" rx="2.41" ry="2.17" fill="#4a2802" opacity=".55"/>
<ellipse cx="197.5" cy="153.3" rx="2.41" ry="2.34" fill="url(#dg)"/>
<ellipse cx="165.6" cy="154.5" rx="2.22" ry="2.00" fill="#4a2802" opacity=".55"/>
<ellipse cx="165.1" cy="153.5" rx="2.22" ry="2.15" fill="url(#dy)"/>
<ellipse cx="81.4" cy="154.4" rx="0.77" ry="0.69" fill="#4a2802" opacity=".55"/>
<ellipse cx="81.2" cy="154.1" rx="0.77" ry="0.75" fill="url(#ds)"/>
<ellipse cx="142.3" cy="154.6" rx="1.16" ry="1.04" fill="#4a2802" opacity=".55"/>
<ellipse cx="142.0" cy="154.1" rx="1.16" ry="1.12" fill="url(#ds)"/>
<ellipse cx="222.4" cy="155.5" rx="2.22" ry="2.00" fill="#4a2802" opacity=".55"/>
<ellipse cx="221.9" cy="154.6" rx="2.22" ry="2.16" fill="url(#dy)"/>
<ellipse cx="128.1" cy="156.0" rx="3.38" ry="3.04" fill="#4a2802" opacity=".55"/>
<ellipse cx="127.3" cy="154.6" rx="3.38" ry="3.27" fill="url(#dg)"/>
<ellipse cx="214.2" cy="155.9" rx="2.71" ry="2.44" fill="#4a2802" opacity=".55"/>
<ellipse cx="213.6" cy="154.8" rx="2.71" ry="2.63" fill="url(#dg)"/>
<ellipse cx="45.9" cy="156.4" rx="1.86" ry="1.68" fill="#4a2802" opacity=".55"/>
<ellipse cx="45.5" cy="155.6" rx="1.86" ry="1.81" fill="url(#dy)"/>
<ellipse cx="49.0" cy="156.5" rx="2.12" ry="1.91" fill="#4a2802" opacity=".55"/>
<ellipse cx="48.6" cy="155.7" rx="2.12" ry="2.06" fill="url(#ds)"/>
<ellipse cx="202.4" cy="156.5" rx="1.35" ry="1.22" fill="#4a2802" opacity=".55"/>
<ellipse cx="202.1" cy="155.9" rx="1.35" ry="1.31" fill="url(#ds)"/>
<ellipse cx="84.6" cy="156.9" rx="2.51" ry="2.26" fill="#4a2802" opacity=".55"/>
<ellipse cx="84.0" cy="155.8" rx="2.51" ry="2.43" fill="url(#ds)"/>
<ellipse cx="84.2" cy="156.7" rx="0.87" ry="0.78" fill="#4a2802" opacity=".55"/>
<ellipse cx="84.0" cy="156.4" rx="0.87" ry="0.84" fill="url(#ds)"/>
<ellipse cx="159.4" cy="157.0" rx="1.84" ry="1.65" fill="#4a2802" opacity=".55"/>
<ellipse cx="159.0" cy="156.3" rx="1.84" ry="1.78" fill="url(#ds)"/>
<ellipse cx="186.8" cy="157.3" rx="1.60" ry="1.44" fill="#4a2802" opacity=".55"/>
<ellipse cx="186.4" cy="156.7" rx="1.60" ry="1.55" fill="url(#dy)"/>
<ellipse cx="229.5" cy="157.5" rx="1.55" ry="1.40" fill="#4a2802" opacity=".55"/>
<ellipse cx="229.1" cy="156.8" rx="1.55" ry="1.50" fill="url(#ds)"/>
<ellipse cx="147.3" cy="157.7" rx="1.16" ry="1.04" fill="#4a2802" opacity=".55"/>
<ellipse cx="147.1" cy="157.2" rx="1.16" ry="1.13" fill="url(#ds)"/>
<ellipse cx="206.7" cy="157.9" rx="1.87" ry="1.68" fill="#4a2802" opacity=".55"/>
<ellipse cx="206.3" cy="157.1" rx="1.87" ry="1.82" fill="url(#dy)"/>
<ellipse cx="204.9" cy="158.1" rx="1.36" ry="1.22" fill="#4a2802" opacity=".55"/>
<ellipse cx="204.6" cy="157.5" rx="1.36" ry="1.32" fill="url(#ds)"/>
<ellipse cx="245.7" cy="158.1" rx="0.97" ry="0.87" fill="#4a2802" opacity=".55"/>
<ellipse cx="245.5" cy="157.7" rx="0.97" ry="0.94" fill="url(#ds)"/>
<ellipse cx="171.5" cy="158.2" rx="2.13" ry="1.92" fill="#4a2802" opacity=".55"/>
<ellipse cx="171.0" cy="157.3" rx="2.13" ry="2.07" fill="url(#ds)"/>
<ellipse cx="76.0" cy="158.7" rx="1.84" ry="1.65" fill="#4a2802" opacity=".55"/>
<ellipse cx="75.6" cy="158.0" rx="1.84" ry="1.78" fill="url(#ds)"/>
<ellipse cx="184.4" cy="158.6" rx="0.87" ry="0.78" fill="#4a2802" opacity=".55"/>
<ellipse cx="184.2" cy="158.3" rx="0.87" ry="0.85" fill="url(#ds)"/>
<ellipse cx="214.0" cy="158.7" rx="1.36" ry="1.22" fill="#4a2802" opacity=".55"/>
<ellipse cx="213.7" cy="158.2" rx="1.36" ry="1.32" fill="url(#ds)"/>
<ellipse cx="194.5" cy="158.9" rx="1.36" ry="1.22" fill="#4a2802" opacity=".55"/>
<ellipse cx="194.2" cy="158.4" rx="1.36" ry="1.32" fill="url(#ds)"/>
<ellipse cx="146.3" cy="158.9" rx="0.97" ry="0.87" fill="#4a2802" opacity=".55"/>
<ellipse cx="146.1" cy="158.5" rx="0.97" ry="0.94" fill="url(#ds)"/>
<ellipse cx="196.3" cy="158.9" rx="0.97" ry="0.87" fill="#4a2802" opacity=".55"/>
<ellipse cx="196.1" cy="158.5" rx="0.97" ry="0.94" fill="url(#ds)"/>
<ellipse cx="79.7" cy="159.2" rx="0.97" ry="0.87" fill="#4a2802" opacity=".55"/>
<ellipse cx="79.5" cy="158.8" rx="0.97" ry="0.94" fill="url(#ds)"/>
<ellipse cx="247.7" cy="160.4" rx="1.17" ry="1.05" fill="#4a2802" opacity=".55"/>
<ellipse cx="247.5" cy="159.9" rx="1.17" ry="1.13" fill="url(#ds)"/>
<ellipse cx="171.8" cy="160.7" rx="2.50" ry="2.25" fill="#4a2802" opacity=".55"/>
<ellipse cx="171.2" cy="159.7" rx="2.50" ry="2.42" fill="url(#dy)"/>
<ellipse cx="71.9" cy="160.7" rx="0.87" ry="0.78" fill="#4a2802" opacity=".55"/>
<ellipse cx="71.7" cy="160.4" rx="0.87" ry="0.85" fill="url(#ds)"/>
<ellipse cx="101.0" cy="160.9" rx="1.16" ry="1.05" fill="#4a2802" opacity=".55"/>
<ellipse cx="100.7" cy="160.4" rx="1.16" ry="1.13" fill="url(#ds)"/>
<ellipse cx="144.0" cy="161.0" rx="1.84" ry="1.66" fill="#4a2802" opacity=".55"/>
<ellipse cx="143.6" cy="160.2" rx="1.84" ry="1.79" fill="url(#ds)"/>
<ellipse cx="165.0" cy="161.0" rx="1.55" ry="1.40" fill="#4a2802" opacity=".55"/>
<ellipse cx="164.6" cy="160.4" rx="1.55" ry="1.51" fill="url(#ds)"/>
<ellipse cx="102.0" cy="161.6" rx="0.87" ry="0.79" fill="#4a2802" opacity=".55"/>
<ellipse cx="101.8" cy="161.2" rx="0.87" ry="0.85" fill="url(#ds)"/>
<ellipse cx="201.7" cy="161.9" rx="0.88" ry="0.79" fill="#4a2802" opacity=".55"/>
<ellipse cx="201.5" cy="161.5" rx="0.88" ry="0.85" fill="url(#ds)"/>
<ellipse cx="73.8" cy="162.0" rx="2.13" ry="1.92" fill="#4a2802" opacity=".55"/>
<ellipse cx="73.3" cy="161.1" rx="2.13" ry="2.07" fill="url(#ds)"/>
<ellipse cx="191.2" cy="162.0" rx="0.88" ry="0.79" fill="#4a2802" opacity=".55"/>
<ellipse cx="191.0" cy="161.7" rx="0.88" ry="0.85" fill="url(#ds)"/>
<ellipse cx="226.3" cy="162.4" rx="0.88" ry="0.79" fill="#4a2802" opacity=".55"/>
<ellipse cx="226.1" cy="162.0" rx="0.88" ry="0.85" fill="url(#ds)"/>
<ellipse cx="236.4" cy="162.5" rx="0.97" ry="0.88" fill="#4a2802" opacity=".55"/>
<ellipse cx="236.2" cy="162.1" rx="0.97" ry="0.95" fill="url(#ds)"/>
<ellipse cx="199.4" cy="163.4" rx="6.98" ry="6.28" fill="#4a2802" opacity=".55"/>
<ellipse cx="197.9" cy="160.5" rx="6.98" ry="6.77" fill="url(#dG)"/>
<ellipse cx="235.3" cy="162.8" rx="2.05" ry="1.84" fill="#4a2802" opacity=".55"/>
<ellipse cx="234.9" cy="162.0" rx="2.05" ry="1.99" fill="url(#dg)"/>
<ellipse cx="176.4" cy="162.9" rx="2.14" ry="1.93" fill="#4a2802" opacity=".55"/>
<ellipse cx="176.0" cy="162.0" rx="2.14" ry="2.08" fill="url(#ds)"/>
<ellipse cx="217.6" cy="162.9" rx="1.75" ry="1.58" fill="#4a2802" opacity=".55"/>
<ellipse cx="217.2" cy="162.2" rx="1.75" ry="1.70" fill="url(#dg)"/>
<ellipse cx="189.4" cy="162.8" rx="0.97" ry="0.88" fill="#4a2802" opacity=".55"/>
<ellipse cx="189.1" cy="162.4" rx="0.97" ry="0.94" fill="url(#ds)"/>
<ellipse cx="141.9" cy="162.9" rx="1.17" ry="1.05" fill="#4a2802" opacity=".55"/>
<ellipse cx="141.6" cy="162.4" rx="1.17" ry="1.13" fill="url(#ds)"/>
<ellipse cx="223.6" cy="163.0" rx="1.85" ry="1.67" fill="#4a2802" opacity=".55"/>
<ellipse cx="223.2" cy="162.2" rx="1.85" ry="1.80" fill="url(#ds)"/>
<ellipse cx="140.5" cy="163.1" rx="1.56" ry="1.40" fill="#4a2802" opacity=".55"/>
<ellipse cx="140.2" cy="162.5" rx="1.56" ry="1.51" fill="url(#ds)"/>
<ellipse cx="125.0" cy="163.5" rx="3.42" ry="3.08" fill="#4a2802" opacity=".55"/>
<ellipse cx="124.3" cy="162.1" rx="3.42" ry="3.32" fill="url(#dyg)"/>
<ellipse cx="207.6" cy="163.5" rx="1.17" ry="1.05" fill="#4a2802" opacity=".55"/>
<ellipse cx="207.4" cy="163.0" rx="1.17" ry="1.13" fill="url(#ds)"/>
<ellipse cx="140.2" cy="164.5" rx="5.06" ry="4.55" fill="#4a2802" opacity=".55"/>
<ellipse cx="139.1" cy="162.3" rx="5.06" ry="4.91" fill="url(#dg)"/>
<ellipse cx="156.3" cy="164.6" rx="2.24" ry="2.02" fill="#4a2802" opacity=".55"/>
<ellipse cx="155.8" cy="163.7" rx="2.24" ry="2.17" fill="url(#dy)"/>
<ellipse cx="154.6" cy="164.6" rx="0.97" ry="0.88" fill="#4a2802" opacity=".55"/>
<ellipse cx="154.4" cy="164.2" rx="0.97" ry="0.94" fill="url(#ds)"/>
<ellipse cx="52.1" cy="164.8" rx="2.53" ry="2.28" fill="#4a2802" opacity=".55"/>
<ellipse cx="51.5" cy="163.8" rx="2.53" ry="2.45" fill="url(#ds)"/>
<ellipse cx="58.7" cy="165.5" rx="4.48" ry="4.03" fill="#4a2802" opacity=".55"/>
<ellipse cx="57.7" cy="163.7" rx="4.48" ry="4.34" fill="url(#dyg)"/>
<ellipse cx="47.9" cy="165.4" rx="0.97" ry="0.88" fill="#4a2802" opacity=".55"/>
<ellipse cx="47.6" cy="165.0" rx="0.97" ry="0.94" fill="url(#ds)"/>
<ellipse cx="131.1" cy="165.6" rx="1.36" ry="1.23" fill="#4a2802" opacity=".55"/>
<ellipse cx="130.8" cy="165.0" rx="1.36" ry="1.32" fill="url(#ds)"/>
<ellipse cx="242.1" cy="165.6" rx="0.88" ry="0.79" fill="#4a2802" opacity=".55"/>
<ellipse cx="241.9" cy="165.2" rx="0.88" ry="0.85" fill="url(#ds)"/>
<ellipse cx="186.4" cy="166.0" rx="0.78" ry="0.70" fill="#4a2802" opacity=".55"/>
<ellipse cx="186.3" cy="165.7" rx="0.78" ry="0.76" fill="url(#ds)"/>
<ellipse cx="162.7" cy="166.3" rx="2.54" ry="2.28" fill="#4a2802" opacity=".55"/>
<ellipse cx="162.2" cy="165.2" rx="2.54" ry="2.46" fill="url(#ds)"/>
<ellipse cx="129.6" cy="166.1" rx="1.37" ry="1.23" fill="#4a2802" opacity=".55"/>
<ellipse cx="129.3" cy="165.6" rx="1.37" ry="1.32" fill="url(#ds)"/>
<ellipse cx="240.4" cy="166.6" rx="0.98" ry="0.88" fill="#4a2802" opacity=".55"/>
<ellipse cx="240.2" cy="166.2" rx="0.98" ry="0.95" fill="url(#ds)"/>
<ellipse cx="56.7" cy="166.7" rx="1.36" ry="1.23" fill="#4a2802" opacity=".55"/>
<ellipse cx="56.4" cy="166.1" rx="1.36" ry="1.32" fill="url(#ds)"/>
<ellipse cx="226.0" cy="166.7" rx="1.17" ry="1.06" fill="#4a2802" opacity=".55"/>
<ellipse cx="225.8" cy="166.2" rx="1.17" ry="1.14" fill="url(#ds)"/>
<ellipse cx="131.7" cy="167.0" rx="2.54" ry="2.28" fill="#4a2802" opacity=".55"/>
<ellipse cx="131.1" cy="166.0" rx="2.54" ry="2.46" fill="url(#ds)"/>
<ellipse cx="66.5" cy="166.9" rx="1.88" ry="1.70" fill="#4a2802" opacity=".55"/>
<ellipse cx="66.1" cy="166.2" rx="1.88" ry="1.83" fill="url(#dy)"/>
<ellipse cx="72.6" cy="167.3" rx="1.37" ry="1.23" fill="#4a2802" opacity=".55"/>
<ellipse cx="72.3" cy="166.7" rx="1.37" ry="1.32" fill="url(#ds)"/>
<ellipse cx="224.7" cy="167.8" rx="0.88" ry="0.79" fill="#4a2802" opacity=".55"/>
<ellipse cx="224.5" cy="167.4" rx="0.88" ry="0.86" fill="url(#ds)"/>
<ellipse cx="122.0" cy="168.3" rx="1.56" ry="1.41" fill="#4a2802" opacity=".55"/>
<ellipse cx="121.6" cy="167.6" rx="1.56" ry="1.52" fill="url(#ds)"/>
<ellipse cx="58.0" cy="168.4" rx="0.88" ry="0.79" fill="#4a2802" opacity=".55"/>
<ellipse cx="57.8" cy="168.0" rx="0.88" ry="0.85" fill="url(#ds)"/>
<ellipse cx="41.0" cy="168.6" rx="1.37" ry="1.23" fill="#4a2802" opacity=".55"/>
<ellipse cx="40.7" cy="168.0" rx="1.37" ry="1.33" fill="url(#ds)"/>
<ellipse cx="169.2" cy="168.6" rx="0.88" ry="0.79" fill="#4a2802" opacity=".55"/>
<ellipse cx="169.0" cy="168.2" rx="0.88" ry="0.85" fill="url(#ds)"/>
<ellipse cx="83.0" cy="169.1" rx="1.56" ry="1.41" fill="#4a2802" opacity=".55"/>
<ellipse cx="82.7" cy="168.5" rx="1.56" ry="1.52" fill="url(#ds)"/>
<ellipse cx="113.5" cy="170.1" rx="8.41" ry="7.57" fill="#4a2802" opacity=".55"/>
<ellipse cx="111.7" cy="166.6" rx="8.41" ry="8.16" fill="url(#dG)"/>
<ellipse cx="122.9" cy="170.1" rx="0.78" ry="0.70" fill="#4a2802" opacity=".55"/>
<ellipse cx="122.7" cy="169.7" rx="0.78" ry="0.76" fill="url(#ds)"/>
<ellipse cx="148.1" cy="170.3" rx="2.25" ry="2.03" fill="#4a2802" opacity=".55"/>
<ellipse cx="147.6" cy="169.4" rx="2.25" ry="2.19" fill="url(#dy)"/>
<ellipse cx="41.9" cy="170.4" rx="0.88" ry="0.79" fill="#4a2802" opacity=".55"/>
<ellipse cx="41.7" cy="170.0" rx="0.88" ry="0.85" fill="url(#ds)"/>
<ellipse cx="56.8" cy="170.5" rx="1.37" ry="1.23" fill="#4a2802" opacity=".55"/>
<ellipse cx="56.5" cy="169.9" rx="1.37" ry="1.33" fill="url(#ds)"/>
<ellipse cx="76.5" cy="170.6" rx="0.98" ry="0.88" fill="#4a2802" opacity=".55"/>
<ellipse cx="76.3" cy="170.2" rx="0.98" ry="0.95" fill="url(#ds)"/>
<ellipse cx="229.6" cy="170.6" rx="0.79" ry="0.71" fill="#4a2802" opacity=".55"/>
<ellipse cx="229.4" cy="170.3" rx="0.79" ry="0.76" fill="url(#ds)"/>
<ellipse cx="65.7" cy="172.1" rx="1.86" ry="1.68" fill="#4a2802" opacity=".55"/>
<ellipse cx="65.3" cy="171.3" rx="1.86" ry="1.81" fill="url(#ds)"/>
<ellipse cx="90.7" cy="172.3" rx="1.86" ry="1.68" fill="#4a2802" opacity=".55"/>
<ellipse cx="90.2" cy="171.5" rx="1.86" ry="1.81" fill="url(#ds)"/>
<ellipse cx="91.0" cy="172.3" rx="1.86" ry="1.68" fill="#4a2802" opacity=".55"/>
<ellipse cx="90.6" cy="171.5" rx="1.86" ry="1.81" fill="url(#ds)"/>
<ellipse cx="50.2" cy="172.6" rx="2.62" ry="2.35" fill="#4a2802" opacity=".55"/>
<ellipse cx="49.6" cy="171.5" rx="2.62" ry="2.54" fill="url(#dy)"/>
<ellipse cx="192.9" cy="172.6" rx="2.26" ry="2.04" fill="#4a2802" opacity=".55"/>
<ellipse cx="192.4" cy="171.6" rx="2.26" ry="2.19" fill="url(#dy)"/>
<ellipse cx="109.8" cy="172.6" rx="1.57" ry="1.41" fill="#4a2802" opacity=".55"/>
<ellipse cx="109.5" cy="172.0" rx="1.57" ry="1.52" fill="url(#ds)"/>
<ellipse cx="76.5" cy="172.7" rx="1.86" ry="1.68" fill="#4a2802" opacity=".55"/>
<ellipse cx="76.1" cy="171.9" rx="1.86" ry="1.81" fill="url(#ds)"/>
<ellipse cx="159.9" cy="173.1" rx="1.38" ry="1.24" fill="#4a2802" opacity=".55"/>
<ellipse cx="159.6" cy="172.5" rx="1.38" ry="1.33" fill="url(#ds)"/>
<ellipse cx="67.3" cy="173.1" rx="1.18" ry="1.06" fill="#4a2802" opacity=".55"/>
<ellipse cx="67.0" cy="172.6" rx="1.18" ry="1.14" fill="url(#ds)"/>
<ellipse cx="125.2" cy="173.7" rx="2.55" ry="2.30" fill="#4a2802" opacity=".55"/>
<ellipse cx="124.6" cy="172.6" rx="2.55" ry="2.48" fill="url(#ds)"/>
<ellipse cx="152.7" cy="173.8" rx="1.38" ry="1.24" fill="#4a2802" opacity=".55"/>
<ellipse cx="152.4" cy="173.3" rx="1.38" ry="1.34" fill="url(#ds)"/>
<ellipse cx="133.2" cy="174.0" rx="2.26" ry="2.03" fill="#4a2802" opacity=".55"/>
<ellipse cx="132.7" cy="173.0" rx="2.26" ry="2.19" fill="url(#dy)"/>
<ellipse cx="237.1" cy="173.8" rx="0.79" ry="0.71" fill="#4a2802" opacity=".55"/>
<ellipse cx="236.9" cy="173.5" rx="0.79" ry="0.77" fill="url(#ds)"/>
<ellipse cx="69.4" cy="174.5" rx="1.87" ry="1.68" fill="#4a2802" opacity=".55"/>
<ellipse cx="69.0" cy="173.8" rx="1.87" ry="1.81" fill="url(#ds)"/>
<ellipse cx="168.8" cy="174.7" rx="1.38" ry="1.24" fill="#4a2802" opacity=".55"/>
<ellipse cx="168.5" cy="174.1" rx="1.38" ry="1.34" fill="url(#ds)"/>
<ellipse cx="135.7" cy="174.9" rx="0.98" ry="0.89" fill="#4a2802" opacity=".55"/>
<ellipse cx="135.5" cy="174.5" rx="0.98" ry="0.95" fill="url(#ds)"/>
<ellipse cx="208.6" cy="174.9" rx="0.99" ry="0.89" fill="#4a2802" opacity=".55"/>
<ellipse cx="208.3" cy="174.5" rx="0.99" ry="0.96" fill="url(#ds)"/>
<ellipse cx="213.0" cy="175.0" rx="0.89" ry="0.80" fill="#4a2802" opacity=".55"/>
<ellipse cx="212.8" cy="174.6" rx="0.89" ry="0.86" fill="url(#ds)"/>
<ellipse cx="224.1" cy="176.0" rx="0.99" ry="0.89" fill="#4a2802" opacity=".55"/>
<ellipse cx="223.9" cy="175.6" rx="0.99" ry="0.96" fill="url(#ds)"/>
<ellipse cx="37.9" cy="176.3" rx="2.17" ry="1.95" fill="#4a2802" opacity=".55"/>
<ellipse cx="37.5" cy="175.4" rx="2.17" ry="2.10" fill="url(#ds)"/>
<ellipse cx="46.1" cy="176.6" rx="1.38" ry="1.24" fill="#4a2802" opacity=".55"/>
<ellipse cx="45.8" cy="176.1" rx="1.38" ry="1.34" fill="url(#ds)"/>
<ellipse cx="89.7" cy="177.0" rx="1.87" ry="1.69" fill="#4a2802" opacity=".55"/>
<ellipse cx="89.3" cy="176.2" rx="1.87" ry="1.82" fill="url(#ds)"/>
<ellipse cx="156.7" cy="177.1" rx="1.87" ry="1.69" fill="#4a2802" opacity=".55"/>
<ellipse cx="156.3" cy="176.3" rx="1.87" ry="1.82" fill="url(#ds)"/>
<ellipse cx="187.1" cy="177.7" rx="0.99" ry="0.89" fill="#4a2802" opacity=".55"/>
<ellipse cx="186.9" cy="177.3" rx="0.99" ry="0.96" fill="url(#ds)"/>
<ellipse cx="161.8" cy="177.7" rx="0.99" ry="0.89" fill="#4a2802" opacity=".55"/>
<ellipse cx="161.6" cy="177.3" rx="0.99" ry="0.96" fill="url(#ds)"/>
<ellipse cx="238.8" cy="177.8" rx="1.39" ry="1.25" fill="#4a2802" opacity=".55"/>
<ellipse cx="238.5" cy="177.2" rx="1.39" ry="1.34" fill="url(#ds)"/>
<ellipse cx="41.2" cy="177.9" rx="1.38" ry="1.24" fill="#4a2802" opacity=".55"/>
<ellipse cx="40.9" cy="177.3" rx="1.38" ry="1.34" fill="url(#ds)"/>
<ellipse cx="207.9" cy="178.0" rx="1.39" ry="1.25" fill="#4a2802" opacity=".55"/>
<ellipse cx="207.6" cy="177.4" rx="1.39" ry="1.34" fill="url(#ds)"/>
<ellipse cx="71.2" cy="178.1" rx="0.89" ry="0.80" fill="#4a2802" opacity=".55"/>
<ellipse cx="71.0" cy="177.7" rx="0.89" ry="0.86" fill="url(#ds)"/>
<ellipse cx="170.8" cy="178.6" rx="1.19" ry="1.07" fill="#4a2802" opacity=".55"/>
<ellipse cx="170.6" cy="178.1" rx="1.19" ry="1.15" fill="url(#ds)"/>
<ellipse cx="242.9" cy="179.2" rx="1.59" ry="1.43" fill="#4a2802" opacity=".55"/>
<ellipse cx="242.6" cy="178.5" rx="1.59" ry="1.54" fill="url(#ds)"/>
<ellipse cx="212.9" cy="179.3" rx="1.39" ry="1.25" fill="#4a2802" opacity=".55"/>
<ellipse cx="212.6" cy="178.7" rx="1.39" ry="1.35" fill="url(#ds)"/>
<ellipse cx="69.1" cy="179.9" rx="2.64" ry="2.37" fill="#4a2802" opacity=".55"/>
<ellipse cx="68.6" cy="178.8" rx="2.64" ry="2.56" fill="url(#dy)"/>
<ellipse cx="51.2" cy="180.1" rx="0.89" ry="0.80" fill="#4a2802" opacity=".55"/>
<ellipse cx="51.0" cy="179.8" rx="0.89" ry="0.86" fill="url(#ds)"/>
<ellipse cx="159.4" cy="180.3" rx="1.39" ry="1.25" fill="#4a2802" opacity=".55"/>
<ellipse cx="159.1" cy="179.8" rx="1.39" ry="1.34" fill="url(#ds)"/>
<ellipse cx="85.3" cy="180.7" rx="2.28" ry="2.05" fill="#4a2802" opacity=".55"/>
<ellipse cx="84.8" cy="179.7" rx="2.28" ry="2.21" fill="url(#dy)"/>
<ellipse cx="42.4" cy="180.6" rx="1.19" ry="1.07" fill="#4a2802" opacity=".55"/>
<ellipse cx="42.1" cy="180.1" rx="1.19" ry="1.15" fill="url(#ds)"/>
<ellipse cx="184.1" cy="181.3" rx="6.19" ry="5.57" fill="#4a2802" opacity=".55"/>
<ellipse cx="182.7" cy="178.7" rx="6.19" ry="6.01" fill="url(#dG)"/>
<ellipse cx="37.4" cy="181.5" rx="0.99" ry="0.89" fill="#4a2802" opacity=".55"/>
<ellipse cx="37.2" cy="181.1" rx="0.99" ry="0.96" fill="url(#ds)"/>
<ellipse cx="151.0" cy="181.7" rx="3.10" ry="2.79" fill="#4a2802" opacity=".55"/>
<ellipse cx="150.3" cy="180.4" rx="3.10" ry="3.01" fill="url(#dy)"/>
<ellipse cx="194.5" cy="181.6" rx="1.39" ry="1.25" fill="#4a2802" opacity=".55"/>
<ellipse cx="194.2" cy="181.0" rx="1.39" ry="1.35" fill="url(#ds)"/>
<ellipse cx="129.8" cy="181.7" rx="0.99" ry="0.89" fill="#4a2802" opacity=".55"/>
<ellipse cx="129.5" cy="181.3" rx="0.99" ry="0.96" fill="url(#ds)"/>
<ellipse cx="101.5" cy="182.1" rx="1.88" ry="1.69" fill="#4a2802" opacity=".55"/>
<ellipse cx="101.1" cy="181.3" rx="1.88" ry="1.83" fill="url(#ds)"/>
<ellipse cx="60.7" cy="182.5" rx="3.37" ry="3.03" fill="#4a2802" opacity=".55"/>
<ellipse cx="59.9" cy="181.1" rx="3.37" ry="3.27" fill="url(#dg)"/>
<ellipse cx="133.3" cy="182.4" rx="0.89" ry="0.80" fill="#4a2802" opacity=".55"/>
<ellipse cx="133.1" cy="182.0" rx="0.89" ry="0.87" fill="url(#ds)"/>
<ellipse cx="47.1" cy="182.7" rx="1.19" ry="1.07" fill="#4a2802" opacity=".55"/>
<ellipse cx="46.8" cy="182.2" rx="1.19" ry="1.15" fill="url(#ds)"/>
<ellipse cx="119.9" cy="182.9" rx="1.19" ry="1.07" fill="#4a2802" opacity=".55"/>
<ellipse cx="119.6" cy="182.4" rx="1.19" ry="1.15" fill="url(#ds)"/>
<ellipse cx="225.1" cy="183.0" rx="1.92" ry="1.73" fill="#4a2802" opacity=".55"/>
<ellipse cx="224.6" cy="182.2" rx="1.92" ry="1.86" fill="url(#dy)"/>
<ellipse cx="95.2" cy="183.0" rx="1.59" ry="1.43" fill="#4a2802" opacity=".55"/>
<ellipse cx="94.8" cy="182.3" rx="1.59" ry="1.54" fill="url(#ds)"/>
<ellipse cx="214.2" cy="183.5" rx="5.57" ry="5.01" fill="#4a2802" opacity=".55"/>
<ellipse cx="213.0" cy="181.1" rx="5.57" ry="5.40" fill="url(#dyg)"/>
<ellipse cx="213.9" cy="183.3" rx="3.98" ry="3.58" fill="#4a2802" opacity=".55"/>
<ellipse cx="213.0" cy="181.6" rx="3.98" ry="3.86" fill="url(#dg)"/>
<ellipse cx="81.7" cy="183.3" rx="1.39" ry="1.25" fill="#4a2802" opacity=".55"/>
<ellipse cx="81.4" cy="182.7" rx="1.39" ry="1.35" fill="url(#ds)"/>
<ellipse cx="175.7" cy="183.4" rx="0.89" ry="0.81" fill="#4a2802" opacity=".55"/>
<ellipse cx="175.5" cy="183.0" rx="0.89" ry="0.87" fill="url(#ds)"/>
<ellipse cx="100.5" cy="184.0" rx="2.58" ry="2.32" fill="#4a2802" opacity=".55"/>
<ellipse cx="99.9" cy="182.9" rx="2.58" ry="2.50" fill="url(#ds)"/>
<ellipse cx="39.3" cy="184.3" rx="1.59" ry="1.43" fill="#4a2802" opacity=".55"/>
<ellipse cx="38.9" cy="183.6" rx="1.59" ry="1.54" fill="url(#ds)"/>
<ellipse cx="149.9" cy="184.3" rx="0.99" ry="0.89" fill="#4a2802" opacity=".55"/>
<ellipse cx="149.7" cy="183.9" rx="0.99" ry="0.96" fill="url(#ds)"/>
<ellipse cx="241.2" cy="184.6" rx="1.89" ry="1.71" fill="#4a2802" opacity=".55"/>
<ellipse cx="240.8" cy="183.8" rx="1.89" ry="1.84" fill="url(#ds)"/>
<ellipse cx="92.4" cy="184.5" rx="0.89" ry="0.80" fill="#4a2802" opacity=".55"/>
<ellipse cx="92.2" cy="184.2" rx="0.89" ry="0.87" fill="url(#ds)"/>
<ellipse cx="128.6" cy="184.9" rx="3.78" ry="3.40" fill="#4a2802" opacity=".55"/>
<ellipse cx="127.8" cy="183.3" rx="3.78" ry="3.66" fill="url(#dg)"/>
<ellipse cx="60.1" cy="185.5" rx="1.89" ry="1.70" fill="#4a2802" opacity=".55"/>
<ellipse cx="59.7" cy="184.7" rx="1.89" ry="1.83" fill="url(#ds)"/>
<ellipse cx="168.8" cy="185.5" rx="1.19" ry="1.08" fill="#4a2802" opacity=".55"/>
<ellipse cx="168.6" cy="185.0" rx="1.19" ry="1.16" fill="url(#ds)"/>
<ellipse cx="175.0" cy="185.7" rx="2.66" ry="2.39" fill="#4a2802" opacity=".55"/>
<ellipse cx="174.4" cy="184.6" rx="2.66" ry="2.58" fill="url(#dy)"/>
<ellipse cx="162.3" cy="185.6" rx="1.00" ry="0.90" fill="#4a2802" opacity=".55"/>
<ellipse cx="162.0" cy="185.2" rx="1.00" ry="0.97" fill="url(#ds)"/>
<ellipse cx="145.4" cy="185.7" rx="1.59" ry="1.43" fill="#4a2802" opacity=".55"/>
<ellipse cx="145.1" cy="185.1" rx="1.59" ry="1.54" fill="url(#ds)"/>
<ellipse cx="71.5" cy="186.5" rx="3.48" ry="3.13" fill="#4a2802" opacity=".55"/>
<ellipse cx="70.7" cy="185.0" rx="3.48" ry="3.37" fill="url(#dy)"/>
<ellipse cx="202.8" cy="186.4" rx="1.40" ry="1.26" fill="#4a2802" opacity=".55"/>
<ellipse cx="202.5" cy="185.8" rx="1.40" ry="1.35" fill="url(#ds)"/>
<ellipse cx="44.6" cy="186.5" rx="1.19" ry="1.07" fill="#4a2802" opacity=".55"/>
<ellipse cx="44.3" cy="186.0" rx="1.19" ry="1.16" fill="url(#ds)"/>
<ellipse cx="202.0" cy="186.8" rx="3.89" ry="3.50" fill="#4a2802" opacity=".55"/>
<ellipse cx="201.1" cy="185.2" rx="3.89" ry="3.77" fill="url(#dyg)"/>
<ellipse cx="172.5" cy="186.8" rx="1.40" ry="1.26" fill="#4a2802" opacity=".55"/>
<ellipse cx="172.2" cy="186.2" rx="1.40" ry="1.35" fill="url(#ds)"/>
<ellipse cx="242.4" cy="187.3" rx="1.90" ry="1.71" fill="#4a2802" opacity=".55"/>
<ellipse cx="241.9" cy="186.5" rx="1.90" ry="1.84" fill="url(#ds)"/>
<ellipse cx="42.8" cy="187.4" rx="1.89" ry="1.70" fill="#4a2802" opacity=".55"/>
<ellipse cx="42.4" cy="186.6" rx="1.89" ry="1.84" fill="url(#ds)"/>
<ellipse cx="233.2" cy="187.8" rx="2.60" ry="2.34" fill="#4a2802" opacity=".55"/>
<ellipse cx="232.6" cy="186.7" rx="2.60" ry="2.52" fill="url(#ds)"/>
<ellipse cx="83.0" cy="187.8" rx="1.00" ry="0.90" fill="#4a2802" opacity=".55"/>
<ellipse cx="82.7" cy="187.3" rx="1.00" ry="0.97" fill="url(#ds)"/>
<ellipse cx="157.0" cy="188.2" rx="0.90" ry="0.81" fill="#4a2802" opacity=".55"/>
<ellipse cx="156.8" cy="187.8" rx="0.90" ry="0.87" fill="url(#ds)"/>
<ellipse cx="111.3" cy="188.3" rx="1.40" ry="1.26" fill="#4a2802" opacity=".55"/>
<ellipse cx="111.0" cy="187.7" rx="1.40" ry="1.35" fill="url(#ds)"/>
<ellipse cx="54.7" cy="188.4" rx="1.93" ry="1.73" fill="#4a2802" opacity=".55"/>
<ellipse cx="54.3" cy="187.6" rx="1.93" ry="1.87" fill="url(#dy)"/>
<ellipse cx="130.3" cy="188.6" rx="0.90" ry="0.81" fill="#4a2802" opacity=".55"/>
<ellipse cx="130.1" cy="188.2" rx="0.90" ry="0.87" fill="url(#ds)"/>
<ellipse cx="221.7" cy="188.7" rx="1.20" ry="1.08" fill="#4a2802" opacity=".55"/>
<ellipse cx="221.5" cy="188.2" rx="1.20" ry="1.17" fill="url(#ds)"/>
<ellipse cx="96.5" cy="189.1" rx="2.66" ry="2.40" fill="#4a2802" opacity=".55"/>
<ellipse cx="95.9" cy="188.0" rx="2.66" ry="2.58" fill="url(#dy)"/>
<ellipse cx="52.7" cy="189.4" rx="2.20" ry="1.98" fill="#4a2802" opacity=".55"/>
<ellipse cx="52.3" cy="188.5" rx="2.20" ry="2.13" fill="url(#ds)"/>
<ellipse cx="106.8" cy="190.1" rx="6.85" ry="6.17" fill="#4a2802" opacity=".55"/>
<ellipse cx="105.3" cy="187.3" rx="6.85" ry="6.65" fill="url(#dG)"/>
<ellipse cx="39.5" cy="189.6" rx="2.20" ry="1.98" fill="#4a2802" opacity=".55"/>
<ellipse cx="39.0" cy="188.7" rx="2.20" ry="2.13" fill="url(#ds)"/>
<ellipse cx="194.3" cy="190.4" rx="4.24" ry="3.81" fill="#4a2802" opacity=".55"/>
<ellipse cx="193.4" cy="188.7" rx="4.24" ry="4.11" fill="url(#dy)"/>
<ellipse cx="139.9" cy="190.2" rx="0.80" ry="0.72" fill="#4a2802" opacity=".55"/>
<ellipse cx="139.7" cy="189.8" rx="0.80" ry="0.78" fill="url(#ds)"/>
<ellipse cx="167.5" cy="190.8" rx="1.20" ry="1.08" fill="#4a2802" opacity=".55"/>
<ellipse cx="167.2" cy="190.3" rx="1.20" ry="1.17" fill="url(#ds)"/>
<ellipse cx="165.1" cy="191.5" rx="1.90" ry="1.71" fill="#4a2802" opacity=".55"/>
<ellipse cx="164.7" cy="190.7" rx="1.90" ry="1.85" fill="url(#ds)"/>
<ellipse cx="87.6" cy="191.7" rx="1.90" ry="1.71" fill="#4a2802" opacity=".55"/>
<ellipse cx="87.2" cy="190.9" rx="1.90" ry="1.84" fill="url(#ds)"/>
<ellipse cx="127.2" cy="191.6" rx="1.00" ry="0.90" fill="#4a2802" opacity=".55"/>
<ellipse cx="127.0" cy="191.2" rx="1.00" ry="0.97" fill="url(#ds)"/>
<ellipse cx="77.0" cy="191.9" rx="2.20" ry="1.98" fill="#4a2802" opacity=".55"/>
<ellipse cx="76.5" cy="191.0" rx="2.20" ry="2.14" fill="url(#ds)"/>
<ellipse cx="227.0" cy="192.0" rx="1.91" ry="1.72" fill="#4a2802" opacity=".55"/>
<ellipse cx="226.5" cy="191.2" rx="1.91" ry="1.85" fill="url(#ds)"/>
<ellipse cx="197.9" cy="192.1" rx="1.20" ry="1.08" fill="#4a2802" opacity=".55"/>
<ellipse cx="197.6" cy="191.6" rx="1.20" ry="1.17" fill="url(#ds)"/>
<ellipse cx="136.7" cy="192.1" rx="1.40" ry="1.26" fill="#4a2802" opacity=".55"/>
<ellipse cx="136.4" cy="191.5" rx="1.40" ry="1.36" fill="url(#ds)"/>
<ellipse cx="181.2" cy="193.0" rx="3.51" ry="3.16" fill="#4a2802" opacity=".55"/>
<ellipse cx="180.4" cy="191.5" rx="3.51" ry="3.40" fill="url(#dy)"/>
<ellipse cx="124.4" cy="192.9" rx="1.60" ry="1.44" fill="#4a2802" opacity=".55"/>
<ellipse cx="124.0" cy="192.3" rx="1.60" ry="1.56" fill="url(#ds)"/>
<ellipse cx="40.8" cy="193.4" rx="3.41" ry="3.07" fill="#4a2802" opacity=".55"/>
<ellipse cx="40.1" cy="192.0" rx="3.41" ry="3.30" fill="url(#dg)"/>
<ellipse cx="222.2" cy="193.2" rx="1.21" ry="1.09" fill="#4a2802" opacity=".55"/>
<ellipse cx="221.9" cy="192.7" rx="1.21" ry="1.17" fill="url(#ds)"/>
<ellipse cx="90.2" cy="193.8" rx="4.61" ry="4.15" fill="#4a2802" opacity=".55"/>
<ellipse cx="89.2" cy="191.9" rx="4.61" ry="4.47" fill="url(#dg)"/>
<ellipse cx="59.5" cy="193.6" rx="1.40" ry="1.26" fill="#4a2802" opacity=".55"/>
<ellipse cx="59.2" cy="193.1" rx="1.40" ry="1.36" fill="url(#ds)"/>
<ellipse cx="154.6" cy="193.6" rx="0.90" ry="0.81" fill="#4a2802" opacity=".55"/>
<ellipse cx="154.4" cy="193.2" rx="0.90" ry="0.88" fill="url(#ds)"/>
<ellipse cx="38.3" cy="194.2" rx="1.60" ry="1.44" fill="#4a2802" opacity=".55"/>
<ellipse cx="37.9" cy="193.6" rx="1.60" ry="1.56" fill="url(#ds)"/>
<ellipse cx="227.9" cy="195.1" rx="1.91" ry="1.72" fill="#4a2802" opacity=".55"/>
<ellipse cx="227.5" cy="194.3" rx="1.91" ry="1.86" fill="url(#ds)"/>
<ellipse cx="120.0" cy="195.6" rx="0.80" ry="0.72" fill="#4a2802" opacity=".55"/>
<ellipse cx="119.8" cy="195.2" rx="0.80" ry="0.78" fill="url(#ds)"/>
<ellipse cx="167.7" cy="195.8" rx="2.21" ry="1.99" fill="#4a2802" opacity=".55"/>
<ellipse cx="167.2" cy="194.8" rx="2.21" ry="2.15" fill="url(#ds)"/>
<ellipse cx="85.7" cy="196.0" rx="1.91" ry="1.72" fill="#4a2802" opacity=".55"/>
<ellipse cx="85.3" cy="195.2" rx="1.91" ry="1.85" fill="url(#ds)"/>
<ellipse cx="54.0" cy="196.2" rx="2.61" ry="2.35" fill="#4a2802" opacity=".55"/>
<ellipse cx="53.4" cy="195.1" rx="2.61" ry="2.53" fill="url(#ds)"/>
<ellipse cx="42.1" cy="196.2" rx="2.61" ry="2.35" fill="#4a2802" opacity=".55"/>
<ellipse cx="41.5" cy="195.1" rx="2.61" ry="2.53" fill="url(#ds)"/>
<ellipse cx="88.5" cy="196.5" rx="1.21" ry="1.09" fill="#4a2802" opacity=".55"/>
<ellipse cx="88.3" cy="196.0" rx="1.21" ry="1.17" fill="url(#ds)"/>
<ellipse cx="218.7" cy="196.8" rx="2.22" ry="2.00" fill="#4a2802" opacity=".55"/>
<ellipse cx="218.2" cy="195.9" rx="2.22" ry="2.15" fill="url(#ds)"/>
<ellipse cx="140.9" cy="196.9" rx="1.41" ry="1.27" fill="#4a2802" opacity=".55"/>
<ellipse cx="140.6" cy="196.3" rx="1.41" ry="1.37" fill="url(#ds)"/>
<ellipse cx="28.3" cy="197.0" rx="1.41" ry="1.27" fill="#4a2802" opacity=".55"/>
<ellipse cx="28.0" cy="196.4" rx="1.41" ry="1.37" fill="url(#ds)"/>
<ellipse cx="197.3" cy="197.1" rx="1.95" ry="1.75" fill="#4a2802" opacity=".55"/>
<ellipse cx="196.9" cy="196.3" rx="1.95" ry="1.89" fill="url(#dy)"/>
<ellipse cx="212.7" cy="197.0" rx="1.61" ry="1.45" fill="#4a2802" opacity=".55"/>
<ellipse cx="212.3" cy="196.4" rx="1.61" ry="1.57" fill="url(#ds)"/>
<ellipse cx="208.2" cy="197.1" rx="1.61" ry="1.45" fill="#4a2802" opacity=".55"/>
<ellipse cx="207.8" cy="196.4" rx="1.61" ry="1.57" fill="url(#ds)"/>
<ellipse cx="175.2" cy="198.0" rx="1.92" ry="1.73" fill="#4a2802" opacity=".55"/>
<ellipse cx="174.7" cy="197.2" rx="1.92" ry="1.86" fill="url(#ds)"/>
<ellipse cx="82.5" cy="198.0" rx="0.81" ry="0.73" fill="#4a2802" opacity=".55"/>
<ellipse cx="82.4" cy="197.6" rx="0.81" ry="0.78" fill="url(#ds)"/>
<ellipse cx="173.0" cy="198.1" rx="1.41" ry="1.27" fill="#4a2802" opacity=".55"/>
<ellipse cx="172.6" cy="197.5" rx="1.41" ry="1.37" fill="url(#ds)"/>
<ellipse cx="128.4" cy="198.8" rx="5.95" ry="5.35" fill="#4a2802" opacity=".55"/>
<ellipse cx="127.1" cy="196.3" rx="5.95" ry="5.77" fill="url(#dyg)"/>
<ellipse cx="61.1" cy="198.2" rx="0.81" ry="0.73" fill="#4a2802" opacity=".55"/>
<ellipse cx="60.9" cy="197.9" rx="0.81" ry="0.78" fill="url(#ds)"/>
<ellipse cx="34.1" cy="198.3" rx="1.41" ry="1.27" fill="#4a2802" opacity=".55"/>
<ellipse cx="33.8" cy="197.7" rx="1.41" ry="1.37" fill="url(#ds)"/>
<ellipse cx="104.3" cy="198.5" rx="0.91" ry="0.82" fill="#4a2802" opacity=".55"/>
<ellipse cx="104.1" cy="198.1" rx="0.91" ry="0.88" fill="url(#ds)"/>
<ellipse cx="233.5" cy="198.8" rx="1.92" ry="1.73" fill="#4a2802" opacity=".55"/>
<ellipse cx="233.0" cy="198.0" rx="1.92" ry="1.86" fill="url(#ds)"/>
<ellipse cx="166.4" cy="199.3" rx="2.22" ry="2.00" fill="#4a2802" opacity=".55"/>
<ellipse cx="165.9" cy="198.4" rx="2.22" ry="2.15" fill="url(#ds)"/>
<ellipse cx="146.1" cy="199.5" rx="2.22" ry="2.00" fill="#4a2802" opacity=".55"/>
<ellipse cx="145.6" cy="198.6" rx="2.22" ry="2.15" fill="url(#ds)"/>
<ellipse cx="124.4" cy="199.5" rx="1.01" ry="0.91" fill="#4a2802" opacity=".55"/>
<ellipse cx="124.1" cy="199.1" rx="1.01" ry="0.98" fill="url(#ds)"/>
<ellipse cx="104.5" cy="200.1" rx="1.41" ry="1.27" fill="#4a2802" opacity=".55"/>
<ellipse cx="104.2" cy="199.5" rx="1.41" ry="1.37" fill="url(#ds)"/>
<ellipse cx="175.3" cy="200.4" rx="1.95" ry="1.76" fill="#4a2802" opacity=".55"/>
<ellipse cx="174.9" cy="199.6" rx="1.95" ry="1.90" fill="url(#dy)"/>
<ellipse cx="219.4" cy="200.5" rx="1.22" ry="1.09" fill="#4a2802" opacity=".55"/>
<ellipse cx="219.1" cy="200.0" rx="1.22" ry="1.18" fill="url(#ds)"/>
<ellipse cx="64.6" cy="200.5" rx="1.21" ry="1.09" fill="#4a2802" opacity=".55"/>
<ellipse cx="64.3" cy="200.0" rx="1.21" ry="1.17" fill="url(#ds)"/>
<ellipse cx="155.2" cy="201.0" rx="1.01" ry="0.91" fill="#4a2802" opacity=".55"/>
<ellipse cx="154.9" cy="200.6" rx="1.01" ry="0.98" fill="url(#ds)"/>
<ellipse cx="144.8" cy="201.4" rx="1.92" ry="1.73" fill="#4a2802" opacity=".55"/>
<ellipse cx="144.4" cy="200.6" rx="1.92" ry="1.86" fill="url(#ds)"/>
<ellipse cx="189.0" cy="201.9" rx="2.63" ry="2.37" fill="#4a2802" opacity=".55"/>
<ellipse cx="188.4" cy="200.8" rx="2.63" ry="2.56" fill="url(#ds)"/>
<ellipse cx="31.9" cy="202.1" rx="3.53" ry="3.18" fill="#4a2802" opacity=".55"/>
<ellipse cx="31.1" cy="200.6" rx="3.53" ry="3.43" fill="url(#dy)"/>
<ellipse cx="101.7" cy="202.0" rx="2.22" ry="2.00" fill="#4a2802" opacity=".55"/>
<ellipse cx="101.2" cy="201.1" rx="2.22" ry="2.16" fill="url(#ds)"/>
<ellipse cx="139.1" cy="202.1" rx="1.92" ry="1.73" fill="#4a2802" opacity=".55"/>
<ellipse cx="138.7" cy="201.3" rx="1.92" ry="1.87" fill="url(#ds)"/>
<ellipse cx="51.5" cy="202.2" rx="0.81" ry="0.73" fill="#4a2802" opacity=".55"/>
<ellipse cx="51.3" cy="201.9" rx="0.81" ry="0.78" fill="url(#ds)"/>
<ellipse cx="89.5" cy="202.3" rx="0.91" ry="0.82" fill="#4a2802" opacity=".55"/>
<ellipse cx="89.3" cy="201.9" rx="0.91" ry="0.88" fill="url(#ds)"/>
<ellipse cx="166.9" cy="202.7" rx="2.70" ry="2.43" fill="#4a2802" opacity=".55"/>
<ellipse cx="166.3" cy="201.6" rx="2.70" ry="2.62" fill="url(#dy)"/>
<ellipse cx="159.0" cy="202.6" rx="1.42" ry="1.28" fill="#4a2802" opacity=".55"/>
<ellipse cx="158.7" cy="202.0" rx="1.42" ry="1.38" fill="url(#ds)"/>
<ellipse cx="125.6" cy="203.3" rx="1.62" ry="1.46" fill="#4a2802" opacity=".55"/>
<ellipse cx="125.2" cy="202.6" rx="1.62" ry="1.57" fill="url(#ds)"/>
<ellipse cx="91.6" cy="203.7" rx="1.42" ry="1.28" fill="#4a2802" opacity=".55"/>
<ellipse cx="91.3" cy="203.1" rx="1.42" ry="1.38" fill="url(#ds)"/>
<ellipse cx="55.6" cy="203.8" rx="2.63" ry="2.37" fill="#4a2802" opacity=".55"/>
<ellipse cx="55.0" cy="202.7" rx="2.63" ry="2.55" fill="url(#ds)"/>
<ellipse cx="170.6" cy="203.9" rx="1.01" ry="0.91" fill="#4a2802" opacity=".55"/>
<ellipse cx="170.4" cy="203.5" rx="1.01" ry="0.98" fill="url(#ds)"/>
<ellipse cx="41.8" cy="204.0" rx="1.22" ry="1.09" fill="#4a2802" opacity=".55"/>
<ellipse cx="41.6" cy="203.5" rx="1.22" ry="1.18" fill="url(#ds)"/>
<ellipse cx="44.7" cy="204.1" rx="2.23" ry="2.01" fill="#4a2802" opacity=".55"/>
<ellipse cx="44.2" cy="203.2" rx="2.23" ry="2.16" fill="url(#ds)"/>
<ellipse cx="222.0" cy="204.2" rx="1.93" ry="1.74" fill="#4a2802" opacity=".55"/>
<ellipse cx="221.5" cy="203.4" rx="1.93" ry="1.87" fill="url(#ds)"/>
<ellipse cx="214.4" cy="204.3" rx="1.42" ry="1.28" fill="#4a2802" opacity=".55"/>
<ellipse cx="214.0" cy="203.7" rx="1.42" ry="1.38" fill="url(#ds)"/>
<ellipse cx="115.0" cy="205.1" rx="2.23" ry="2.01" fill="#4a2802" opacity=".55"/>
<ellipse cx="114.6" cy="204.1" rx="2.23" ry="2.17" fill="url(#ds)"/>
<ellipse cx="78.2" cy="205.7" rx="3.92" ry="3.53" fill="#4a2802" opacity=".55"/>
<ellipse cx="77.3" cy="204.1" rx="3.92" ry="3.80" fill="url(#dy)"/>
<ellipse cx="181.0" cy="205.5" rx="1.42" ry="1.28" fill="#4a2802" opacity=".55"/>
<ellipse cx="180.7" cy="204.9" rx="1.42" ry="1.38" fill="url(#ds)"/>
<ellipse cx="189.1" cy="206.1" rx="1.42" ry="1.28" fill="#4a2802" opacity=".55"/>
<ellipse cx="188.8" cy="205.6" rx="1.42" ry="1.38" fill="url(#ds)"/>
<ellipse cx="190.0" cy="206.2" rx="1.63" ry="1.47" fill="#4a2802" opacity=".55"/>
<ellipse cx="189.7" cy="205.5" rx="1.63" ry="1.58" fill="url(#ds)"/>
<ellipse cx="141.5" cy="206.3" rx="2.24" ry="2.01" fill="#4a2802" opacity=".55"/>
<ellipse cx="141.0" cy="205.3" rx="2.24" ry="2.17" fill="url(#ds)"/>
<ellipse cx="195.6" cy="206.8" rx="1.22" ry="1.10" fill="#4a2802" opacity=".55"/>
<ellipse cx="195.3" cy="206.3" rx="1.22" ry="1.19" fill="url(#ds)"/>
<ellipse cx="57.5" cy="207.2" rx="1.63" ry="1.46" fill="#4a2802" opacity=".55"/>
<ellipse cx="57.2" cy="206.5" rx="1.63" ry="1.58" fill="url(#ds)"/>
<ellipse cx="124.0" cy="207.1" rx="0.92" ry="0.82" fill="#4a2802" opacity=".55"/>
<ellipse cx="123.8" cy="206.8" rx="0.92" ry="0.89" fill="url(#ds)"/>
<ellipse cx="195.5" cy="207.2" rx="1.22" ry="1.10" fill="#4a2802" opacity=".55"/>
<ellipse cx="195.2" cy="206.7" rx="1.22" ry="1.19" fill="url(#ds)"/>
<ellipse cx="70.0" cy="207.4" rx="1.22" ry="1.10" fill="#4a2802" opacity=".55"/>
<ellipse cx="69.7" cy="206.9" rx="1.22" ry="1.18" fill="url(#ds)"/>
<ellipse cx="127.3" cy="208.1" rx="1.02" ry="0.92" fill="#4a2802" opacity=".55"/>
<ellipse cx="127.1" cy="207.6" rx="1.02" ry="0.99" fill="url(#ds)"/>
<ellipse cx="188.4" cy="208.2" rx="1.22" ry="1.10" fill="#4a2802" opacity=".55"/>
<ellipse cx="188.1" cy="207.7" rx="1.22" ry="1.19" fill="url(#ds)"/>
<ellipse cx="191.1" cy="208.7" rx="2.65" ry="2.39" fill="#4a2802" opacity=".55"/>
<ellipse cx="190.5" cy="207.6" rx="2.65" ry="2.57" fill="url(#ds)"/>
<ellipse cx="135.4" cy="209.2" rx="3.87" ry="3.49" fill="#4a2802" opacity=".55"/>
<ellipse cx="134.6" cy="207.6" rx="3.87" ry="3.76" fill="url(#dg)"/>
<ellipse cx="67.0" cy="209.1" rx="2.34" ry="2.11" fill="#4a2802" opacity=".55"/>
<ellipse cx="66.5" cy="208.1" rx="2.34" ry="2.27" fill="url(#dy)"/>
<ellipse cx="104.4" cy="209.3" rx="2.65" ry="2.38" fill="#4a2802" opacity=".55"/>
<ellipse cx="103.8" cy="208.2" rx="2.65" ry="2.57" fill="url(#ds)"/>
<ellipse cx="90.8" cy="209.8" rx="6.47" ry="5.82" fill="#4a2802" opacity=".55"/>
<ellipse cx="89.4" cy="207.0" rx="6.47" ry="6.27" fill="url(#dG)"/>
<ellipse cx="231.5" cy="209.7" rx="2.35" ry="2.12" fill="#4a2802" opacity=".55"/>
<ellipse cx="231.0" cy="208.7" rx="2.35" ry="2.28" fill="url(#dy)"/>
<ellipse cx="91.6" cy="210.5" rx="7.18" ry="6.46" fill="#4a2802" opacity=".55"/>
<ellipse cx="90.0" cy="207.5" rx="7.18" ry="6.96" fill="url(#dyg)"/>
<ellipse cx="25.2" cy="210.3" rx="3.19" ry="2.87" fill="#4a2802" opacity=".55"/>
<ellipse cx="24.5" cy="209.0" rx="3.19" ry="3.09" fill="url(#dy)"/>
<ellipse cx="58.4" cy="210.7" rx="5.30" ry="4.77" fill="#4a2802" opacity=".55"/>
<ellipse cx="57.2" cy="208.5" rx="5.30" ry="5.14" fill="url(#dg)"/>
<ellipse cx="33.7" cy="210.6" rx="1.97" ry="1.77" fill="#4a2802" opacity=".55"/>
<ellipse cx="33.2" cy="209.7" rx="1.97" ry="1.91" fill="url(#dy)"/>
<ellipse cx="202.9" cy="210.6" rx="2.35" ry="2.12" fill="#4a2802" opacity=".55"/>
<ellipse cx="202.4" cy="209.7" rx="2.35" ry="2.28" fill="url(#dy)"/>
<ellipse cx="224.9" cy="210.9" rx="2.66" ry="2.40" fill="#4a2802" opacity=".55"/>
<ellipse cx="224.3" cy="209.7" rx="2.66" ry="2.58" fill="url(#ds)"/>
<ellipse cx="224.3" cy="211.5" rx="3.89" ry="3.50" fill="#4a2802" opacity=".55"/>
<ellipse cx="223.5" cy="209.9" rx="3.89" ry="3.78" fill="url(#dyg)"/>
<ellipse cx="164.9" cy="212.1" rx="4.89" ry="4.40" fill="#4a2802" opacity=".55"/>
<ellipse cx="163.8" cy="210.1" rx="4.89" ry="4.75" fill="url(#dy)"/>
<ellipse cx="48.8" cy="211.9" rx="2.25" ry="2.02" fill="#4a2802" opacity=".55"/>
<ellipse cx="48.3" cy="211.0" rx="2.25" ry="2.18" fill="url(#ds)"/>
<ellipse cx="150.0" cy="213.0" rx="6.87" ry="6.18" fill="#4a2802" opacity=".55"/>
<ellipse cx="148.5" cy="210.1" rx="6.87" ry="6.66" fill="url(#dG)"/>
<ellipse cx="156.4" cy="212.5" rx="2.25" ry="2.03" fill="#4a2802" opacity=".55"/>
<ellipse cx="155.9" cy="211.6" rx="2.25" ry="2.18" fill="url(#ds)"/>
<ellipse cx="111.1" cy="213.0" rx="3.57" ry="3.22" fill="#4a2802" opacity=".55"/>
<ellipse cx="110.3" cy="211.5" rx="3.57" ry="3.47" fill="url(#dy)"/>
<ellipse cx="207.7" cy="212.9" rx="1.64" ry="1.48" fill="#4a2802" opacity=".55"/>
<ellipse cx="207.3" cy="212.2" rx="1.64" ry="1.59" fill="url(#ds)"/>
<ellipse cx="74.6" cy="213.0" rx="0.92" ry="0.83" fill="#4a2802" opacity=".55"/>
<ellipse cx="74.4" cy="212.6" rx="0.92" ry="0.89" fill="url(#ds)"/>
<ellipse cx="175.4" cy="213.6" rx="2.36" ry="2.12" fill="#4a2802" opacity=".55"/>
<ellipse cx="174.9" cy="212.6" rx="2.36" ry="2.29" fill="url(#dy)"/>
<ellipse cx="40.0" cy="213.7" rx="2.25" ry="2.02" fill="#4a2802" opacity=".55"/>
<ellipse cx="39.5" cy="212.8" rx="2.25" ry="2.18" fill="url(#ds)"/>
<ellipse cx="212.4" cy="213.7" rx="2.26" ry="2.03" fill="#4a2802" opacity=".55"/>
<ellipse cx="211.9" cy="212.8" rx="2.26" ry="2.19" fill="url(#ds)"/>
<ellipse cx="72.7" cy="214.2" rx="3.58" ry="3.22" fill="#4a2802" opacity=".55"/>
<ellipse cx="71.9" cy="212.7" rx="3.58" ry="3.47" fill="url(#dy)"/>
<ellipse cx="59.9" cy="214.2" rx="0.92" ry="0.83" fill="#4a2802" opacity=".55"/>
<ellipse cx="59.7" cy="213.9" rx="0.92" ry="0.89" fill="url(#ds)"/>
<ellipse cx="197.7" cy="214.4" rx="1.23" ry="1.11" fill="#4a2802" opacity=".55"/>
<ellipse cx="197.4" cy="213.9" rx="1.23" ry="1.19" fill="url(#ds)"/>
<ellipse cx="52.3" cy="214.6" rx="1.95" ry="1.75" fill="#4a2802" opacity=".55"/>
<ellipse cx="51.9" cy="213.8" rx="1.95" ry="1.89" fill="url(#ds)"/>
<ellipse cx="64.1" cy="214.7" rx="1.95" ry="1.75" fill="#4a2802" opacity=".55"/>
<ellipse cx="63.7" cy="213.9" rx="1.95" ry="1.89" fill="url(#ds)"/>
<ellipse cx="79.2" cy="214.6" rx="1.23" ry="1.11" fill="#4a2802" opacity=".55"/>
<ellipse cx="78.9" cy="214.1" rx="1.23" ry="1.19" fill="url(#ds)"/>
<ellipse cx="156.8" cy="214.9" rx="1.44" ry="1.29" fill="#4a2802" opacity=".55"/>
<ellipse cx="156.4" cy="214.3" rx="1.44" ry="1.39" fill="url(#ds)"/>
<ellipse cx="216.6" cy="215.4" rx="0.93" ry="0.83" fill="#4a2802" opacity=".55"/>
<ellipse cx="216.4" cy="215.0" rx="0.93" ry="0.90" fill="url(#ds)"/>
<ellipse cx="87.0" cy="215.5" rx="1.44" ry="1.29" fill="#4a2802" opacity=".55"/>
<ellipse cx="86.7" cy="214.9" rx="1.44" ry="1.39" fill="url(#ds)"/>
<ellipse cx="73.3" cy="215.6" rx="1.95" ry="1.75" fill="#4a2802" opacity=".55"/>
<ellipse cx="72.9" cy="214.8" rx="1.95" ry="1.89" fill="url(#ds)"/>
<ellipse cx="99.4" cy="215.7" rx="2.56" ry="2.31" fill="#4a2802" opacity=".55"/>
<ellipse cx="98.8" cy="214.7" rx="2.56" ry="2.49" fill="url(#dg)"/>
<ellipse cx="182.8" cy="215.6" rx="1.44" ry="1.29" fill="#4a2802" opacity=".55"/>
<ellipse cx="182.5" cy="215.0" rx="1.44" ry="1.40" fill="url(#ds)"/>
<ellipse cx="224.2" cy="215.9" rx="1.96" ry="1.76" fill="#4a2802" opacity=".55"/>
<ellipse cx="223.8" cy="215.0" rx="1.96" ry="1.90" fill="url(#ds)"/>
<ellipse cx="201.9" cy="216.5" rx="0.93" ry="0.83" fill="#4a2802" opacity=".55"/>
<ellipse cx="201.7" cy="216.1" rx="0.93" ry="0.90" fill="url(#ds)"/>
<ellipse cx="199.8" cy="217.1" rx="3.91" ry="3.52" fill="#4a2802" opacity=".55"/>
<ellipse cx="199.0" cy="215.4" rx="3.91" ry="3.79" fill="url(#dg)"/>
<ellipse cx="219.6" cy="216.7" rx="0.93" ry="0.83" fill="#4a2802" opacity=".55"/>
<ellipse cx="219.4" cy="216.3" rx="0.93" ry="0.90" fill="url(#ds)"/>
<ellipse cx="118.5" cy="216.9" rx="2.26" ry="2.03" fill="#4a2802" opacity=".55"/>
<ellipse cx="118.0" cy="215.9" rx="2.26" ry="2.19" fill="url(#ds)"/>
<ellipse cx="235.4" cy="217.0" rx="1.96" ry="1.76" fill="#4a2802" opacity=".55"/>
<ellipse cx="235.0" cy="216.2" rx="1.96" ry="1.90" fill="url(#ds)"/>
<ellipse cx="109.6" cy="217.1" rx="1.23" ry="1.11" fill="#4a2802" opacity=".55"/>
<ellipse cx="109.4" cy="216.6" rx="1.23" ry="1.20" fill="url(#ds)"/>
<ellipse cx="105.1" cy="217.2" rx="1.03" ry="0.92" fill="#4a2802" opacity=".55"/>
<ellipse cx="104.9" cy="216.7" rx="1.03" ry="1.00" fill="url(#ds)"/>
<ellipse cx="64.7" cy="217.6" rx="3.21" ry="2.89" fill="#4a2802" opacity=".55"/>
<ellipse cx="64.0" cy="216.2" rx="3.21" ry="3.12" fill="url(#dy)"/>
<ellipse cx="232.3" cy="217.8" rx="2.27" ry="2.04" fill="#4a2802" opacity=".55"/>
<ellipse cx="231.8" cy="216.8" rx="2.27" ry="2.20" fill="url(#ds)"/>
<ellipse cx="124.5" cy="218.1" rx="2.26" ry="2.04" fill="#4a2802" opacity=".55"/>
<ellipse cx="124.0" cy="217.2" rx="2.26" ry="2.19" fill="url(#ds)"/>
<ellipse cx="225.7" cy="218.1" rx="1.24" ry="1.11" fill="#4a2802" opacity=".55"/>
<ellipse cx="225.4" cy="217.6" rx="1.24" ry="1.20" fill="url(#ds)"/>
<ellipse cx="207.8" cy="218.3" rx="0.93" ry="0.84" fill="#4a2802" opacity=".55"/>
<ellipse cx="207.6" cy="217.9" rx="0.93" ry="0.90" fill="url(#ds)"/>
<ellipse cx="177.7" cy="218.7" rx="1.24" ry="1.11" fill="#4a2802" opacity=".55"/>
<ellipse cx="177.4" cy="218.1" rx="1.24" ry="1.20" fill="url(#ds)"/>
<ellipse cx="98.5" cy="218.7" rx="1.03" ry="0.93" fill="#4a2802" opacity=".55"/>
<ellipse cx="98.2" cy="218.3" rx="1.03" ry="1.00" fill="url(#ds)"/>
<ellipse cx="109.3" cy="219.1" rx="1.44" ry="1.30" fill="#4a2802" opacity=".55"/>
<ellipse cx="108.9" cy="218.5" rx="1.44" ry="1.40" fill="url(#ds)"/>
<ellipse cx="104.1" cy="219.2" rx="1.96" ry="1.76" fill="#4a2802" opacity=".55"/>
<ellipse cx="103.6" cy="218.4" rx="1.96" ry="1.90" fill="url(#ds)"/>
<ellipse cx="235.1" cy="219.3" rx="2.17" ry="1.95" fill="#4a2802" opacity=".55"/>
<ellipse cx="234.6" cy="218.4" rx="2.17" ry="2.10" fill="url(#dg)"/>
<ellipse cx="69.2" cy="219.5" rx="1.95" ry="1.76" fill="#4a2802" opacity=".55"/>
<ellipse cx="68.8" cy="218.7" rx="1.95" ry="1.90" fill="url(#ds)"/>
<ellipse cx="21.7" cy="219.7" rx="2.26" ry="2.04" fill="#4a2802" opacity=".55"/>
<ellipse cx="21.2" cy="218.7" rx="2.26" ry="2.20" fill="url(#ds)"/>
<ellipse cx="126.5" cy="220.0" rx="2.27" ry="2.04" fill="#4a2802" opacity=".55"/>
<ellipse cx="126.0" cy="219.0" rx="2.27" ry="2.20" fill="url(#ds)"/>
<ellipse cx="40.1" cy="220.0" rx="1.24" ry="1.11" fill="#4a2802" opacity=".55"/>
<ellipse cx="39.8" cy="219.5" rx="1.24" ry="1.20" fill="url(#ds)"/>
<ellipse cx="136.9" cy="220.1" rx="1.99" ry="1.79" fill="#4a2802" opacity=".55"/>
<ellipse cx="136.5" cy="219.3" rx="1.99" ry="1.93" fill="url(#dy)"/>
<ellipse cx="82.4" cy="220.4" rx="1.44" ry="1.30" fill="#4a2802" opacity=".55"/>
<ellipse cx="82.1" cy="219.8" rx="1.44" ry="1.40" fill="url(#ds)"/>
<ellipse cx="83.7" cy="220.4" rx="1.03" ry="0.93" fill="#4a2802" opacity=".55"/>
<ellipse cx="83.4" cy="220.0" rx="1.03" ry="1.00" fill="url(#ds)"/>
<ellipse cx="62.9" cy="220.7" rx="1.96" ry="1.76" fill="#4a2802" opacity=".55"/>
<ellipse cx="62.5" cy="219.9" rx="1.96" ry="1.90" fill="url(#ds)"/>
<ellipse cx="179.7" cy="220.9" rx="2.17" ry="1.95" fill="#4a2802" opacity=".55"/>
<ellipse cx="179.2" cy="220.0" rx="2.17" ry="2.10" fill="url(#dg)"/>
<ellipse cx="195.5" cy="221.1" rx="2.27" ry="2.05" fill="#4a2802" opacity=".55"/>
<ellipse cx="195.0" cy="220.2" rx="2.27" ry="2.21" fill="url(#ds)"/>
<ellipse cx="132.1" cy="221.2" rx="2.68" ry="2.41" fill="#4a2802" opacity=".55"/>
<ellipse cx="131.6" cy="220.1" rx="2.68" ry="2.60" fill="url(#ds)"/>
<ellipse cx="39.7" cy="221.1" rx="0.82" ry="0.74" fill="#4a2802" opacity=".55"/>
<ellipse cx="39.5" cy="220.7" rx="0.82" ry="0.80" fill="url(#ds)"/>
<ellipse cx="65.8" cy="221.6" rx="2.27" ry="2.04" fill="#4a2802" opacity=".55"/>
<ellipse cx="65.3" cy="220.6" rx="2.27" ry="2.20" fill="url(#ds)"/>
<ellipse cx="124.9" cy="223.1" rx="10.35" ry="9.32" fill="#4a2802" opacity=".55"/>
<ellipse cx="122.6" cy="218.8" rx="10.35" ry="10.04" fill="url(#dB)"/>
<ellipse cx="157.1" cy="222.8" rx="7.09" ry="6.38" fill="#4a2802" opacity=".55"/>
<ellipse cx="155.5" cy="219.8" rx="7.09" ry="6.88" fill="url(#dG)"/>
<ellipse cx="27.4" cy="222.3" rx="0.93" ry="0.84" fill="#4a2802" opacity=".55"/>
<ellipse cx="27.2" cy="221.9" rx="0.93" ry="0.90" fill="url(#ds)"/>
<ellipse cx="98.4" cy="222.4" rx="1.45" ry="1.30" fill="#4a2802" opacity=".55"/>
<ellipse cx="98.1" cy="221.8" rx="1.45" ry="1.40" fill="url(#ds)"/>
<ellipse cx="156.4" cy="223.1" rx="2.28" ry="2.05" fill="#4a2802" opacity=".55"/>
<ellipse cx="155.9" cy="222.2" rx="2.28" ry="2.21" fill="url(#ds)"/>
<ellipse cx="103.9" cy="223.3" rx="2.69" ry="2.42" fill="#4a2802" opacity=".55"/>
<ellipse cx="103.4" cy="222.2" rx="2.69" ry="2.61" fill="url(#ds)"/>
<ellipse cx="52.0" cy="223.6" rx="4.75" ry="4.28" fill="#4a2802" opacity=".55"/>
<ellipse cx="50.9" cy="221.6" rx="4.75" ry="4.61" fill="url(#dyg)"/>
<ellipse cx="84.5" cy="223.4" rx="2.76" ry="2.48" fill="#4a2802" opacity=".55"/>
<ellipse cx="83.9" cy="222.2" rx="2.76" ry="2.67" fill="url(#dy)"/>
<ellipse cx="74.0" cy="223.3" rx="1.65" ry="1.49" fill="#4a2802" opacity=".55"/>
<ellipse cx="73.7" cy="222.6" rx="1.65" ry="1.60" fill="url(#ds)"/>
<ellipse cx="199.0" cy="223.6" rx="2.28" ry="2.05" fill="#4a2802" opacity=".55"/>
<ellipse cx="198.5" cy="222.6" rx="2.28" ry="2.21" fill="url(#ds)"/>
<ellipse cx="192.1" cy="223.6" rx="1.45" ry="1.31" fill="#4a2802" opacity=".55"/>
<ellipse cx="191.8" cy="223.0" rx="1.45" ry="1.41" fill="url(#ds)"/>
<ellipse cx="82.4" cy="223.7" rx="1.45" ry="1.30" fill="#4a2802" opacity=".55"/>
<ellipse cx="82.1" cy="223.1" rx="1.45" ry="1.40" fill="url(#ds)"/>
<ellipse cx="194.1" cy="224.2" rx="2.28" ry="2.05" fill="#4a2802" opacity=".55"/>
<ellipse cx="193.6" cy="223.2" rx="2.28" ry="2.21" fill="url(#ds)"/>
<ellipse cx="56.8" cy="224.2" rx="1.96" ry="1.77" fill="#4a2802" opacity=".55"/>
<ellipse cx="56.4" cy="223.3" rx="1.96" ry="1.91" fill="url(#ds)"/>
<ellipse cx="58.3" cy="224.2" rx="1.45" ry="1.30" fill="#4a2802" opacity=".55"/>
<ellipse cx="57.9" cy="223.6" rx="1.45" ry="1.40" fill="url(#ds)"/>
<ellipse cx="117.4" cy="224.6" rx="1.45" ry="1.30" fill="#4a2802" opacity=".55"/>
<ellipse cx="117.1" cy="223.9" rx="1.45" ry="1.41" fill="url(#ds)"/>
<ellipse cx="122.2" cy="224.7" rx="2.28" ry="2.05" fill="#4a2802" opacity=".55"/>
<ellipse cx="121.7" cy="223.8" rx="2.28" ry="2.21" fill="url(#ds)"/>
<ellipse cx="213.7" cy="224.7" rx="2.01" ry="1.80" fill="#4a2802" opacity=".55"/>
<ellipse cx="213.2" cy="223.9" rx="2.01" ry="1.95" fill="url(#dy)"/>
<ellipse cx="99.4" cy="224.7" rx="1.03" ry="0.93" fill="#4a2802" opacity=".55"/>
<ellipse cx="99.2" cy="224.2" rx="1.03" ry="1.00" fill="url(#ds)"/>
<ellipse cx="102.0" cy="225.0" rx="2.69" ry="2.42" fill="#4a2802" opacity=".55"/>
<ellipse cx="101.4" cy="223.9" rx="2.69" ry="2.61" fill="url(#ds)"/>
<ellipse cx="220.1" cy="225.1" rx="0.83" ry="0.75" fill="#4a2802" opacity=".55"/>
<ellipse cx="219.9" cy="224.7" rx="0.83" ry="0.81" fill="url(#ds)"/>
<ellipse cx="80.1" cy="225.6" rx="1.97" ry="1.77" fill="#4a2802" opacity=".55"/>
<ellipse cx="79.7" cy="224.8" rx="1.97" ry="1.91" fill="url(#ds)"/>
<ellipse cx="155.1" cy="226.0" rx="1.66" ry="1.49" fill="#4a2802" opacity=".55"/>
<ellipse cx="154.7" cy="225.3" rx="1.66" ry="1.61" fill="url(#ds)"/>
<ellipse cx="58.8" cy="226.3" rx="2.69" ry="2.42" fill="#4a2802" opacity=".55"/>
<ellipse cx="58.2" cy="225.2" rx="2.69" ry="2.61" fill="url(#ds)"/>
<ellipse cx="121.6" cy="226.6" rx="1.24" ry="1.12" fill="#4a2802" opacity=".55"/>
<ellipse cx="121.3" cy="226.0" rx="1.24" ry="1.21" fill="url(#ds)"/>
<ellipse cx="157.9" cy="226.9" rx="1.45" ry="1.31" fill="#4a2802" opacity=".55"/>
<ellipse cx="157.6" cy="226.3" rx="1.45" ry="1.41" fill="url(#ds)"/>
<ellipse cx="231.6" cy="227.2" rx="2.71" ry="2.44" fill="#4a2802" opacity=".55"/>
<ellipse cx="231.0" cy="226.1" rx="2.71" ry="2.63" fill="url(#ds)"/>
<ellipse cx="204.0" cy="227.6" rx="2.01" ry="1.81" fill="#4a2802" opacity=".55"/>
<ellipse cx="203.5" cy="226.8" rx="2.01" ry="1.95" fill="url(#dy)"/>
<ellipse cx="208.0" cy="227.7" rx="1.67" ry="1.50" fill="#4a2802" opacity=".55"/>
<ellipse cx="207.7" cy="227.0" rx="1.67" ry="1.62" fill="url(#ds)"/>
<ellipse cx="80.9" cy="228.1" rx="2.28" ry="2.06" fill="#4a2802" opacity=".55"/>
<ellipse cx="80.4" cy="227.1" rx="2.28" ry="2.21" fill="url(#ds)"/>
<ellipse cx="53.8" cy="228.3" rx="1.66" ry="1.49" fill="#4a2802" opacity=".55"/>
<ellipse cx="53.5" cy="227.6" rx="1.66" ry="1.61" fill="url(#ds)"/>
<ellipse cx="124.5" cy="229.1" rx="1.46" ry="1.31" fill="#4a2802" opacity=".55"/>
<ellipse cx="124.2" cy="228.5" rx="1.46" ry="1.41" fill="url(#ds)"/>
<ellipse cx="112.5" cy="229.9" rx="1.98" ry="1.78" fill="#4a2802" opacity=".55"/>
<ellipse cx="112.0" cy="229.0" rx="1.98" ry="1.92" fill="url(#ds)"/>
<ellipse cx="78.6" cy="230.1" rx="2.39" ry="2.15" fill="#4a2802" opacity=".55"/>
<ellipse cx="78.1" cy="229.1" rx="2.39" ry="2.32" fill="url(#dy)"/>
<ellipse cx="60.0" cy="230.2" rx="1.46" ry="1.31" fill="#4a2802" opacity=".55"/>
<ellipse cx="59.6" cy="229.6" rx="1.46" ry="1.41" fill="url(#ds)"/>
<ellipse cx="187.1" cy="230.3" rx="0.83" ry="0.75" fill="#4a2802" opacity=".55"/>
<ellipse cx="186.9" cy="229.9" rx="0.83" ry="0.81" fill="url(#ds)"/>
<ellipse cx="77.3" cy="230.6" rx="1.04" ry="0.94" fill="#4a2802" opacity=".55"/>
<ellipse cx="77.1" cy="230.1" rx="1.04" ry="1.01" fill="url(#ds)"/>
<ellipse cx="141.5" cy="231.1" rx="1.46" ry="1.31" fill="#4a2802" opacity=".55"/>
<ellipse cx="141.2" cy="230.4" rx="1.46" ry="1.42" fill="url(#ds)"/>
<ellipse cx="165.1" cy="231.7" rx="2.02" ry="1.81" fill="#4a2802" opacity=".55"/>
<ellipse cx="164.7" cy="230.9" rx="2.02" ry="1.96" fill="url(#dy)"/>
<ellipse cx="199.5" cy="231.6" rx="1.04" ry="0.94" fill="#4a2802" opacity=".55"/>
<ellipse cx="199.3" cy="231.2" rx="1.04" ry="1.01" fill="url(#ds)"/>
<ellipse cx="101.3" cy="232.1" rx="1.67" ry="1.50" fill="#4a2802" opacity=".55"/>
<ellipse cx="101.0" cy="231.4" rx="1.67" ry="1.62" fill="url(#ds)"/>
<ellipse cx="90.6" cy="232.2" rx="2.78" ry="2.50" fill="#4a2802" opacity=".55"/>
<ellipse cx="90.0" cy="231.1" rx="2.78" ry="2.70" fill="url(#dy)"/>
<ellipse cx="162.1" cy="233.0" rx="1.25" ry="1.13" fill="#4a2802" opacity=".55"/>
<ellipse cx="161.8" cy="232.5" rx="1.25" ry="1.22" fill="url(#ds)"/>
<ellipse cx="128.8" cy="233.2" rx="2.30" ry="2.07" fill="#4a2802" opacity=".55"/>
<ellipse cx="128.3" cy="232.3" rx="2.30" ry="2.23" fill="url(#ds)"/>
<ellipse cx="161.1" cy="233.5" rx="1.25" ry="1.13" fill="#4a2802" opacity=".55"/>
<ellipse cx="160.8" cy="233.0" rx="1.25" ry="1.22" fill="url(#ds)"/>
<ellipse cx="186.0" cy="233.8" rx="1.26" ry="1.13" fill="#4a2802" opacity=".55"/>
<ellipse cx="185.7" cy="233.3" rx="1.26" ry="1.22" fill="url(#ds)"/>
<ellipse cx="170.3" cy="234.0" rx="2.30" ry="2.07" fill="#4a2802" opacity=".55"/>
<ellipse cx="169.7" cy="233.1" rx="2.30" ry="2.23" fill="url(#ds)"/>
<ellipse cx="153.2" cy="234.0" rx="1.05" ry="0.94" fill="#4a2802" opacity=".55"/>
<ellipse cx="153.0" cy="233.5" rx="1.05" ry="1.01" fill="url(#ds)"/>
<ellipse cx="138.4" cy="234.2" rx="1.25" ry="1.13" fill="#4a2802" opacity=".55"/>
<ellipse cx="138.1" cy="233.6" rx="1.25" ry="1.22" fill="url(#ds)"/>
<ellipse cx="150.1" cy="234.3" rx="2.41" ry="2.16" fill="#4a2802" opacity=".55"/>
<ellipse cx="149.5" cy="233.3" rx="2.41" ry="2.33" fill="url(#dy)"/>
<ellipse cx="123.6" cy="234.9" rx="2.30" ry="2.07" fill="#4a2802" opacity=".55"/>
<ellipse cx="123.1" cy="234.0" rx="2.30" ry="2.23" fill="url(#ds)"/>
<ellipse cx="179.4" cy="234.8" rx="0.84" ry="0.75" fill="#4a2802" opacity=".55"/>
<ellipse cx="179.2" cy="234.4" rx="0.84" ry="0.81" fill="url(#ds)"/>
<ellipse cx="125.4" cy="234.8" rx="1.05" ry="0.94" fill="#4a2802" opacity=".55"/>
<ellipse cx="125.2" cy="234.4" rx="1.05" ry="1.01" fill="url(#ds)"/>
<ellipse cx="168.7" cy="236.0" rx="1.68" ry="1.51" fill="#4a2802" opacity=".55"/>
<ellipse cx="168.3" cy="235.3" rx="1.68" ry="1.63" fill="url(#ds)"/>
<ellipse cx="186.7" cy="236.1" rx="1.99" ry="1.79" fill="#4a2802" opacity=".55"/>
<ellipse cx="186.3" cy="235.3" rx="1.99" ry="1.93" fill="url(#ds)"/>
<ellipse cx="162.3" cy="236.6" rx="3.28" ry="2.95" fill="#4a2802" opacity=".55"/>
<ellipse cx="161.6" cy="235.2" rx="3.28" ry="3.18" fill="url(#dy)"/>
<ellipse cx="177.0" cy="236.6" rx="1.26" ry="1.13" fill="#4a2802" opacity=".55"/>
<ellipse cx="176.7" cy="236.1" rx="1.26" ry="1.22" fill="url(#ds)"/>
<ellipse cx="193.3" cy="237.0" rx="1.26" ry="1.13" fill="#4a2802" opacity=".55"/>
<ellipse cx="193.1" cy="236.4" rx="1.26" ry="1.22" fill="url(#ds)"/>
<ellipse cx="198.0" cy="236.9" rx="0.95" ry="0.85" fill="#4a2802" opacity=".55"/>
<ellipse cx="197.8" cy="236.5" rx="0.95" ry="0.92" fill="url(#ds)"/>
<ellipse cx="175.9" cy="237.2" rx="1.99" ry="1.79" fill="#4a2802" opacity=".55"/>
<ellipse cx="175.5" cy="236.4" rx="1.99" ry="1.93" fill="url(#ds)"/>
<ellipse cx="139.5" cy="237.8" rx="3.99" ry="3.59" fill="#4a2802" opacity=".55"/>
<ellipse cx="138.6" cy="236.1" rx="3.99" ry="3.87" fill="url(#dg)"/>
<ellipse cx="162.2" cy="237.9" rx="1.68" ry="1.51" fill="#4a2802" opacity=".55"/>
<ellipse cx="161.8" cy="237.2" rx="1.68" ry="1.63" fill="url(#ds)"/>
<ellipse cx="105.6" cy="238.3" rx="2.03" ry="1.82" fill="#4a2802" opacity=".55"/>
<ellipse cx="105.1" cy="237.5" rx="2.03" ry="1.97" fill="url(#dy)"/>
<ellipse cx="100.7" cy="238.5" rx="0.84" ry="0.76" fill="#4a2802" opacity=".55"/>
<ellipse cx="100.6" cy="238.1" rx="0.84" ry="0.81" fill="url(#ds)"/>
<ellipse cx="183.4" cy="238.7" rx="1.26" ry="1.14" fill="#4a2802" opacity=".55"/>
<ellipse cx="183.1" cy="238.2" rx="1.26" ry="1.22" fill="url(#ds)"/>
<ellipse cx="199.1" cy="239.4" rx="4.97" ry="4.47" fill="#4a2802" opacity=".55"/>
<ellipse cx="198.0" cy="237.3" rx="4.97" ry="4.82" fill="url(#dyg)"/>
<ellipse cx="198.8" cy="239.3" rx="3.79" ry="3.41" fill="#4a2802" opacity=".55"/>
<ellipse cx="198.0" cy="237.7" rx="3.79" ry="3.67" fill="url(#dg)"/>
<ellipse cx="104.0" cy="239.3" rx="2.73" ry="2.46" fill="#4a2802" opacity=".55"/>
<ellipse cx="103.4" cy="238.1" rx="2.73" ry="2.65" fill="url(#ds)"/>
<ellipse cx="157.1" cy="240.9" rx="1.26" ry="1.14" fill="#4a2802" opacity=".55"/>
<ellipse cx="156.9" cy="240.3" rx="1.26" ry="1.23" fill="url(#ds)"/>
<ellipse cx="177.8" cy="242.2" rx="2.43" ry="2.18" fill="#4a2802" opacity=".55"/>
<ellipse cx="177.2" cy="241.2" rx="2.43" ry="2.35" fill="url(#dy)"/>
<ellipse cx="184.1" cy="242.6" rx="2.74" ry="2.47" fill="#4a2802" opacity=".55"/>
<ellipse cx="183.5" cy="241.5" rx="2.74" ry="2.66" fill="url(#ds)"/>
<ellipse cx="130.4" cy="242.8" rx="2.04" ry="1.83" fill="#4a2802" opacity=".55"/>
<ellipse cx="129.9" cy="241.9" rx="2.04" ry="1.98" fill="url(#dy)"/>
<ellipse cx="189.5" cy="242.9" rx="0.85" ry="0.76" fill="#4a2802" opacity=".55"/>
<ellipse cx="189.4" cy="242.6" rx="0.85" ry="0.82" fill="url(#ds)"/>
<ellipse cx="207.0" cy="244.2" rx="4.87" ry="4.38" fill="#4a2802" opacity=".55"/>
<ellipse cx="205.9" cy="242.1" rx="4.87" ry="4.72" fill="url(#dg)"/>
<ellipse cx="148.3" cy="244.6" rx="0.95" ry="0.86" fill="#4a2802" opacity=".55"/>
<ellipse cx="148.1" cy="244.2" rx="0.95" ry="0.92" fill="url(#ds)"/>
<ellipse cx="212.5" cy="245.0" rx="1.48" ry="1.33" fill="#4a2802" opacity=".55"/>
<ellipse cx="212.2" cy="244.4" rx="1.48" ry="1.44" fill="url(#ds)"/>
<ellipse cx="194.2" cy="245.2" rx="0.95" ry="0.86" fill="#4a2802" opacity=".55"/>
<ellipse cx="194.0" cy="244.8" rx="0.95" ry="0.92" fill="url(#ds)"/>
<ellipse cx="159.8" cy="245.5" rx="0.85" ry="0.76" fill="#4a2802" opacity=".55"/>
<ellipse cx="159.6" cy="245.1" rx="0.85" ry="0.82" fill="url(#ds)"/>
<ellipse cx="183.6" cy="245.7" rx="1.27" ry="1.14" fill="#4a2802" opacity=".55"/>
<ellipse cx="183.3" cy="245.2" rx="1.27" ry="1.23" fill="url(#ds)"/>
<ellipse cx="227.2" cy="246.3" rx="4.10" ry="3.69" fill="#4a2802" opacity=".55"/>
<ellipse cx="226.3" cy="244.6" rx="4.10" ry="3.98" fill="url(#dy)"/>
<ellipse cx="224.9" cy="246.0" rx="1.06" ry="0.95" fill="#4a2802" opacity=".55"/>
<ellipse cx="224.6" cy="245.5" rx="1.06" ry="1.03" fill="url(#ds)"/>
<ellipse cx="202.6" cy="246.7" rx="0.95" ry="0.86" fill="#4a2802" opacity=".55"/>
<ellipse cx="202.4" cy="246.3" rx="0.95" ry="0.93" fill="url(#ds)"/>
<ellipse cx="134.6" cy="248.3" rx="2.01" ry="1.81" fill="#4a2802" opacity=".55"/>
<ellipse cx="134.1" cy="247.4" rx="2.01" ry="1.95" fill="url(#ds)"/>
<ellipse cx="195.4" cy="248.5" rx="2.83" ry="2.55" fill="#4a2802" opacity=".55"/>
<ellipse cx="194.8" cy="247.3" rx="2.83" ry="2.75" fill="url(#dy)"/>
<ellipse cx="134.9" cy="249.1" rx="1.27" ry="1.15" fill="#4a2802" opacity=".55"/>
<ellipse cx="134.6" cy="248.6" rx="1.27" ry="1.24" fill="url(#ds)"/>
<ellipse cx="148.8" cy="249.6" rx="2.02" ry="1.82" fill="#4a2802" opacity=".55"/>
<ellipse cx="148.4" cy="248.7" rx="2.02" ry="1.96" fill="url(#ds)"/>
<ellipse cx="204.3" cy="250.2" rx="1.70" ry="1.53" fill="#4a2802" opacity=".55"/>
<ellipse cx="204.0" cy="249.5" rx="1.70" ry="1.65" fill="url(#ds)"/>
<ellipse cx="151.1" cy="251.7" rx="1.06" ry="0.96" fill="#4a2802" opacity=".55"/>
<ellipse cx="150.9" cy="251.2" rx="1.06" ry="1.03" fill="url(#ds)"/>
<ellipse cx="170.3" cy="253.2" rx="2.77" ry="2.49" fill="#4a2802" opacity=".55"/>
<ellipse cx="169.7" cy="252.0" rx="2.77" ry="2.69" fill="url(#ds)"/>
<ellipse cx="162.7" cy="253.7" rx="2.35" ry="2.11" fill="#4a2802" opacity=".55"/>
<ellipse cx="162.2" cy="252.7" rx="2.35" ry="2.28" fill="url(#ds)"/>
<ellipse cx="221.9" cy="257.1" rx="0.97" ry="0.87" fill="#4a2802" opacity=".55"/>
<ellipse cx="221.6" cy="256.7" rx="0.97" ry="0.94" fill="url(#ds)"/>
<ellipse cx="167.3" cy="257.3" rx="1.28" ry="1.16" fill="#4a2802" opacity=".55"/>
<ellipse cx="167.0" cy="256.7" rx="1.28" ry="1.25" fill="url(#ds)"/>
<ellipse cx="187.5" cy="258.1" rx="2.36" ry="2.12" fill="#4a2802" opacity=".55"/>
<ellipse cx="187.0" cy="257.1" rx="2.36" ry="2.29" fill="url(#ds)"/>
<ellipse cx="182.7" cy="258.2" rx="2.07" ry="1.86" fill="#4a2802" opacity=".55"/>
<ellipse cx="182.3" cy="257.3" rx="2.07" ry="2.01" fill="url(#dy)"/>
<ellipse cx="189.7" cy="258.8" rx="1.50" ry="1.35" fill="#4a2802" opacity=".55"/>
<ellipse cx="189.3" cy="258.2" rx="1.50" ry="1.46" fill="url(#ds)"/>
<ellipse cx="226.2" cy="258.9" rx="2.26" ry="2.03" fill="#4a2802" opacity=".55"/>
<ellipse cx="225.7" cy="258.0" rx="2.26" ry="2.19" fill="url(#dg)"/>
<ellipse cx="190.5" cy="260.4" rx="2.79" ry="2.51" fill="#4a2802" opacity=".55"/>
<ellipse cx="189.9" cy="259.2" rx="2.79" ry="2.71" fill="url(#ds)"/>
<ellipse cx="182.2" cy="260.3" rx="0.97" ry="0.87" fill="#4a2802" opacity=".55"/>
<ellipse cx="182.0" cy="259.9" rx="0.97" ry="0.94" fill="url(#ds)"/>
<ellipse cx="222.1" cy="267.3" rx="2.09" ry="1.88" fill="#4a2802" opacity=".55"/>
<ellipse cx="221.6" cy="266.4" rx="2.09" ry="2.03" fill="url(#dy)"/>
</g></g>
<polyline points="17.4,220.6 84,40.5 267,80 223.1,279.4" fill="none" stroke="#9aa6bc" stroke-width="1.15"/>
<polyline points="10.8,208.6 18.6,223 223.1,279.4 236,283" fill="none" stroke="#e4e4e4" stroke-width="1"/>
<polygon points="9.2,205.6 14.6,208 12,213.4" fill="#fff"/>
<polygon points="91,36.6 87.8,43 92.4,42.2" fill="#fff"/>
<polygon points="234,278.6 243.8,284.6 233,285.4" fill="#fff"/>
<rect x="363.3" y="42" width="157.8" height="38.9" fill="none" stroke="#a4bca4" stroke-width=".9" opacity=".95"/>
<path d="M521.1 29V286" stroke="#d0b890" stroke-width=".5" opacity=".7"/>
<polyline points="363.6,45.9 371.1,45.9 371.4,59.2 373.4,60.0 373.7,76.7 374.5,77.8 376.1,78.9 377.9,80.2 378.1,69.2 378.4,50.4 378.7,47.8 379.4,46.7 380.4,46.3 381.9,46.3 383.7,46.9 385.3,46.5 388.0,46.1 390.2,46.3 392.1,47.1 393.5,47.2 394.8,47.6 396.7,47.2 398.9,47.1 399.7,46.3 401.6,46.1 402.1,46.7 403.2,46.7 404.3,46.3 408.4,45.9 411.6,45.7 412.2,45.9 412.4,57.6 412.7,57.9 413.2,56.1 413.7,50.8 414.2,49.3 414.6,47.1 415.1,45.9 420.6,45.7 426.0,46.1 428.7,45.9 432.2,45.9 432.5,51.6 433.3,51.7 434.3,52.3 434.9,50.4 435.7,47.1 436.3,46.3 437.5,45.9 445.0,46.1 451.2,45.9 451.5,48.6 451.7,56.8 452.6,58.3 454.4,61.1 456.5,64.3 457.4,65.4 458.2,65.7 459.6,64.9 460.8,63.9 461.1,63.2 461.3,48.6 461.6,46.3 463.4,45.9 469.4,45.7 474.8,45.9 478.8,45.7 479.7,46.3 480.2,50.4 481.0,57.6 481.8,63.6 482.9,65.8 484.0,67.7 485.6,69.0 486.7,69.6 487.8,72.2 488.7,74.4 490.0,72.9 492.0,70.3 493.8,68.4 495.5,66.6 496.5,64.7 497.0,62.8 497.3,54.2 497.6,47.1 498.1,46.3 499.0,46.1 503.2,45.9 508.9,45.9 509.2,50.4 509.4,54.0 509.6,50.4 510.0,46.7 510.6,46.1 515.4,45.9 520.1,45.6 520.5,46.7 520.9,48.9" fill="none" stroke="#ec1018" stroke-width="1.15" stroke-linejoin="round"/>
<rect x="363.3" y="29" width="28.6" height="12" fill="#fce4bc" opacity=".93"/>
<text x="365.2" y="38.9" font-size="8.1" font-family="Liberation Sans" fill="#927252">96[&#181;m]</text>
<rect x="363.3" y="81.4" width="35.8" height="10.4" fill="#fce4bc" opacity=".93"/>
<text x="364.8" y="89.9" font-size="8.1" font-family="Liberation Sans" fill="#927252">-629[&#181;m]</text>
<path d="M363.3 130.8L521.8 286" stroke="#f00c1c" stroke-width="1.75"/>
<path d="M372.6 142.4l3.8-2.8 2.6 5.8-5.6 1.4z" fill="#f00c1c"/>
<path d="M365.0 132.2L372.6 139.8M372.6 132.2L365.0 139.8" stroke="#f00c1c" stroke-width="1.9"/><circle cx="368.8" cy="136" r="1.5" fill="#fff" stroke="#111" stroke-width=".8"/>
<path d="M498.4 263.2L506.0 270.8M506.0 263.2L498.4 270.8" stroke="#f00c1c" stroke-width="1.9"/><circle cx="502.2" cy="267" r="1.5" fill="#fff" stroke="#111" stroke-width=".8"/>
<path d="M455.7 221.6L459.3 225.20000000000002M459.3 221.6L455.7 225.20000000000002" stroke="#f07828" stroke-width=".6"/>
<path d="M487.8 252.79999999999998L491.40000000000003 256.4M491.40000000000003 252.79999999999998L487.8 256.4" stroke="#f07828" stroke-width=".6"/>
<path d="M28.8 326.6V431.4H612.4" fill="none" stroke="#e6e6e6" stroke-width=".8"/>
<path d="M27 342.5h1.8" stroke="#e6e6e6" stroke-width=".7"/>
<path d="M27.8 349.9h1" stroke="#e6e6e6" stroke-width=".5"/>
<path d="M27 357.3h1.8" stroke="#e6e6e6" stroke-width=".7"/>
<path d="M27.8 364.7h1" stroke="#e6e6e6" stroke-width=".5"/>
<path d="M27 372.1h1.8" stroke="#e6e6e6" stroke-width=".7"/>
<path d="M27.8 379.5h1" stroke="#e6e6e6" stroke-width=".5"/>
<path d="M27 386.8h1.8" stroke="#e6e6e6" stroke-width=".7"/>
<path d="M27.8 394.2h1" stroke="#e6e6e6" stroke-width=".5"/>
<path d="M27 401.6h1.8" stroke="#e6e6e6" stroke-width=".7"/>
<path d="M27.8 409.0h1" stroke="#e6e6e6" stroke-width=".5"/>
<path d="M27 416.4h1.8" stroke="#e6e6e6" stroke-width=".7"/>
<path d="M27.8 423.8h1" stroke="#e6e6e6" stroke-width=".5"/>
<path d="M27 431.2h1.8" stroke="#e6e6e6" stroke-width=".7"/>
<path d="M29.2 428.6v2.8" stroke="#e6e6e6" stroke-width=".8"/>
<path d="M52.1 430v1.4" stroke="#e6e6e6" stroke-width=".5"/>
<path d="M75.0 430v1.4" stroke="#e6e6e6" stroke-width=".5"/>
<path d="M97.9 430v1.4" stroke="#e6e6e6" stroke-width=".5"/>
<path d="M120.8 430v1.4" stroke="#e6e6e6" stroke-width=".5"/>
<path d="M143.7 428.6v2.8" stroke="#e6e6e6" stroke-width=".8"/>
<path d="M166.6 430v1.4" stroke="#e6e6e6" stroke-width=".5"/>
<path d="M189.5 430v1.4" stroke="#e6e6e6" stroke-width=".5"/>
<path d="M212.4 430v1.4" stroke="#e6e6e6" stroke-width=".5"/>
<path d="M235.3 430v1.4" stroke="#e6e6e6" stroke-width=".5"/>
<path d="M258.2 428.6v2.8" stroke="#e6e6e6" stroke-width=".8"/>
<path d="M281.1 430v1.4" stroke="#e6e6e6" stroke-width=".5"/>
<path d="M304.0 430v1.4" stroke="#e6e6e6" stroke-width=".5"/>
<path d="M326.9 430v1.4" stroke="#e6e6e6" stroke-width=".5"/>
<path d="M349.8 430v1.4" stroke="#e6e6e6" stroke-width=".5"/>
<path d="M372.7 428.6v2.8" stroke="#e6e6e6" stroke-width=".8"/>
<path d="M395.6 430v1.4" stroke="#e6e6e6" stroke-width=".5"/>
<path d="M418.5 430v1.4" stroke="#e6e6e6" stroke-width=".5"/>
<path d="M441.4 430v1.4" stroke="#e6e6e6" stroke-width=".5"/>
<path d="M464.3 430v1.4" stroke="#e6e6e6" stroke-width=".5"/>
<path d="M487.2 428.6v2.8" stroke="#e6e6e6" stroke-width=".8"/>
<path d="M510.1 430v1.4" stroke="#e6e6e6" stroke-width=".5"/>
<path d="M533.0 430v1.4" stroke="#e6e6e6" stroke-width=".5"/>
<path d="M555.9 430v1.4" stroke="#e6e6e6" stroke-width=".5"/>
<path d="M578.8 430v1.4" stroke="#e6e6e6" stroke-width=".5"/>
<path d="M601.7 428.6v2.8" stroke="#e6e6e6" stroke-width=".8"/>
<path d="M610.6 428.6v2.8" stroke="#e6e6e6" stroke-width=".8"/>
<path d="M123.8 342.6V427.4" stroke="#48ccf2" stroke-width="1" stroke-dasharray="1.5 1.1"/><path d="M122.1 343.6L123.8 340.6L125.5 343.6z M122.1 426.4L123.8 429.4L125.5 426.4z" fill="#48ccf2"/>
<path d="M84.5 429.6H122" stroke="#48ccf2" stroke-width=".8" stroke-dasharray="1 1.3" opacity=".55"/>
<path d="M308.3 341.6V356.6" stroke="#48ccf2" stroke-width="1" stroke-dasharray="1.5 1.1"/><path d="M306.6 342.6L308.3 339.6L310.0 342.6z M306.6 355.6L308.3 358.6L310.0 355.6z" fill="#48ccf2"/>
<path d="M293 355.2H307" stroke="#48ccf2" stroke-width=".8" stroke-dasharray="1 1.3" opacity=".55"/>
<path d="M410 341.6V387.6" stroke="#48ccf2" stroke-width="1" stroke-dasharray="1.5 1.1"/><path d="M408.3 342.6L410 339.6L411.7 342.6z M408.3 386.6L410 389.6L411.7 386.6z" fill="#48ccf2"/>
<path d="M381 390.8H409" stroke="#48ccf2" stroke-width=".8" stroke-dasharray="1 1.3" opacity=".55"/>
<path d="M532 342.6V411" stroke="#48ccf2" stroke-width="1" stroke-dasharray="1.5 1.1"/><path d="M530.3 343.6L532 340.6L533.7 343.6z M530.3 410L532 413L533.7 410z" fill="#48ccf2"/>
<path d="M494 414.2H531" stroke="#48ccf2" stroke-width=".8" stroke-dasharray="1 1.3" opacity=".55"/>
<polyline points="30.0,338.0 57.5,338.0 58.5,373.5 66.0,375.5 67.0,420.0 70.0,423.0 76.0,426.0 82.5,429.5 83.5,400.0 84.5,350.0 85.5,343.0 88.0,340.0 92.0,339.0 97.5,339.0 104.0,340.5 110.0,339.5 120.0,338.5 128.0,339.0 135.0,341.0 140.0,341.5 145.0,342.5 152.0,341.5 160.0,341.0 163.0,339.0 170.0,338.5 172.0,340.0 176.0,340.0 180.0,339.0 195.0,338.0 207.0,337.5 209.0,338.0 210.0,369.0 211.0,370.0 213.0,365.0 214.5,351.0 216.5,347.0 218.0,341.0 220.0,338.0 240.0,337.5 260.0,338.5 270.0,338.0 283.0,338.0 284.0,353.0 287.0,353.5 290.8,355.0 293.0,350.0 296.0,341.0 298.0,339.0 302.5,338.0 330.0,338.5 353.0,338.0 354.0,345.0 355.0,367.0 358.0,371.0 365.0,378.5 372.5,387.0 376.0,390.0 378.8,390.8 384.0,388.5 388.5,386.0 389.5,384.0 390.4,345.0 391.5,339.0 398.0,338.0 420.0,337.5 440.0,338.0 455.0,337.5 458.0,339.0 460.0,350.0 463.0,369.0 466.0,385.0 470.0,391.0 474.0,396.0 480.0,399.5 484.0,401.0 488.0,408.0 491.5,414.0 496.0,410.0 503.5,403.0 510.0,398.0 516.5,393.0 520.0,388.0 522.0,383.0 523.0,360.0 524.0,341.0 526.0,339.0 529.5,338.5 545.0,338.0 566.0,338.0 567.0,350.0 567.8,359.6 568.6,350.0 570.0,340.0 572.0,338.5 590.0,338.0 607.0,337.0 608.5,340.0 610.0,346.0" fill="none" stroke="#e45454" stroke-width="1.25" stroke-linejoin="round"/>
<path d="M83 429.6L97.5 339" stroke="#f59a30" stroke-width="1.25"/>
<path d="M290.75 355L302.5 338" stroke="#f59a30" stroke-width="1.25"/>
<path d="M378.75 390.75L398.4 338" stroke="#f59a30" stroke-width="1.25"/>
<path d="M491.5 414L529.5 338.5" stroke="#f59a30" stroke-width="1.25"/>
<path d="M94.1 335.6L100.9 342.4M100.9 335.6L94.1 342.4" stroke="#f2841c" stroke-width="1.3"/><circle cx="97.5" cy="339" r=".6" fill="#222"/>
<path d="M80.8 427.4L83 430.4L85.6 427.4" stroke="#f58a1c" stroke-width=".9" fill="none"/>
<path d="M287.35 351.6L294.15 358.4M294.15 351.6L287.35 358.4" stroke="#f2841c" stroke-width="1.3"/><circle cx="290.75" cy="355" r=".6" fill="#222"/>
<path d="M299.1 334.6L305.9 341.4M305.9 334.6L299.1 341.4" stroke="#f2841c" stroke-width="1.3"/><circle cx="302.5" cy="338" r=".6" fill="#222"/>
<path d="M375.35 387.35L382.15 394.15M382.15 387.35L375.35 394.15" stroke="#f2841c" stroke-width="1.3"/><circle cx="378.75" cy="390.75" r=".6" fill="#222"/>
<path d="M395.0 334.6L401.79999999999995 341.4M401.79999999999995 334.6L395.0 341.4" stroke="#f2841c" stroke-width="1.3"/><circle cx="398.4" cy="338" r=".6" fill="#222"/>
<path d="M488.1 410.6L494.9 417.4M494.9 410.6L488.1 417.4" stroke="#f2841c" stroke-width="1.3"/><circle cx="491.5" cy="414" r=".6" fill="#222"/>
<path d="M526.1 335.1L532.9 341.9M532.9 335.1L526.1 341.9" stroke="#f2841c" stroke-width="1.3"/><circle cx="529.5" cy="338.5" r=".6" fill="#222"/>
<rect x="126.1" y="361.6" width="7.7" height="59.799999999999955" rx="1.2" fill="#f1f1f1"/><text transform="translate(127.44999999999999,391.5) rotate(90)" font-size="7.3" font-family="Liberation Sans" fill="#000" stroke="#000" stroke-width=".12" text-anchor="middle">[1] : 620.856[&#181;m]</text>
<rect x="310.3" y="331.8" width="7.7" height="59.19999999999999" rx="1.2" fill="#f1f1f1"/><text transform="translate(311.65000000000003,361.4) rotate(90)" font-size="7.3" font-family="Liberation Sans" fill="#000" stroke="#000" stroke-width=".12" text-anchor="middle">[2] : 114.667[&#181;m]</text>
<rect x="411.9" y="332" width="7.7" height="60" rx="1.2" fill="#f1f1f1"/><text transform="translate(413.25,362.0) rotate(90)" font-size="7.3" font-family="Liberation Sans" fill="#000" stroke="#000" stroke-width=".12" text-anchor="middle">[3] : 355.036[&#181;m]</text>
<rect x="533.8" y="341" width="7.7" height="58.80000000000001" rx="1.2" fill="#f1f1f1"/><text transform="translate(535.15,370.4) rotate(90)" font-size="7.3" font-family="Liberation Sans" fill="#000" stroke="#000" stroke-width=".12" text-anchor="middle">[4] : 511.600[&#181;m]</text>
</svg>
<div style="position:absolute;left:0;width:26.6px;text-align:right;top:325.7px;font-size:5.2px;line-height:6.2px;color:#eeeeee;white-space:nowrap">96.079</div>
<div style="position:absolute;left:0;width:26.6px;text-align:right;top:332.1px;font-size:5.2px;line-height:6.2px;color:#eeeeee;white-space:nowrap">&micro;m</div>
<div style="position:absolute;left:0;width:26.6px;text-align:right;top:339.4px;font-size:5.2px;line-height:6.2px;color:#eeeeee;white-space:nowrap">0</div>
<div style="position:absolute;left:0;width:26.6px;text-align:right;top:354.2px;font-size:5.2px;line-height:6.2px;color:#eeeeee;white-space:nowrap">-100</div>
<div style="position:absolute;left:0;width:26.6px;text-align:right;top:369.0px;font-size:5.2px;line-height:6.2px;color:#eeeeee;white-space:nowrap">-200</div>
<div style="position:absolute;left:0;width:26.6px;text-align:right;top:383.7px;font-size:5.2px;line-height:6.2px;color:#eeeeee;white-space:nowrap">-300</div>
<div style="position:absolute;left:0;width:26.6px;text-align:right;top:398.5px;font-size:5.2px;line-height:6.2px;color:#eeeeee;white-space:nowrap">-400</div>
<div style="position:absolute;left:0;width:26.6px;text-align:right;top:413.3px;font-size:5.2px;line-height:6.2px;color:#eeeeee;white-space:nowrap">-500</div>
<div style="position:absolute;left:0;width:26.6px;text-align:right;top:424.7px;font-size:5.2px;line-height:6.2px;color:#eeeeee;white-space:nowrap">-629.14</div>
<div style="position:absolute;left:-7px;width:40px;text-align:right;top:434px;font-size:5.2px;line-height:6.2px;color:#eeeeee;white-space:nowrap">0</div>
<div style="position:absolute;left:104.4px;width:40px;text-align:right;top:434px;font-size:5.2px;line-height:6.2px;color:#eeeeee;white-space:nowrap">1000</div>
<div style="position:absolute;left:218.60000000000002px;width:40px;text-align:right;top:434px;font-size:5.2px;line-height:6.2px;color:#eeeeee;white-space:nowrap">2000</div>
<div style="position:absolute;left:333px;width:40px;text-align:right;top:434px;font-size:5.2px;line-height:6.2px;color:#eeeeee;white-space:nowrap">3000</div>
<div style="position:absolute;left:447.6px;width:40px;text-align:right;top:434px;font-size:5.2px;line-height:6.2px;color:#eeeeee;white-space:nowrap">4000</div>
<div style="position:absolute;left:571.6px;width:40px;text-align:right;top:434px;font-size:5.2px;line-height:6.2px;color:#eeeeee;white-space:nowrap">5078.042 &micro;m</div>
<div style="position:absolute;left:274.6px;top:91.2px;font-size:6.5px;line-height:7.80px;color:#d4d4d4;font-weight:normal;white-space:nowrap;">5878.487</div>
<div style="position:absolute;left:16.4px;top:234px;font-size:6.2px;line-height:7.44px;color:#e8e8e8;font-weight:normal;white-space:nowrap;">0</div>
<div style="position:absolute;left:220px;top:291px;font-size:6.7px;line-height:8.04px;color:#e8e8e8;font-weight:normal;white-space:nowrap;">5872.072&micro;m</div>
<div style="position:absolute;left:308.2px;top:32.8px;font-size:5.0px;line-height:6.00px;color:#fff;font-weight:normal;white-space:nowrap;">&micro;m</div>
<div style="position:absolute;left:308.2px;top:38.5px;font-size:5.2px;line-height:6.24px;color:#fff;font-weight:normal;white-space:nowrap;">96.079</div>
<div style="position:absolute;left:308.2px;top:45.7px;width:6.7px;height:112.10000000000001px;background:linear-gradient(#ff1a08 0%,#ff3c08 5%,#ff8c10 12.5%,#ffc410 17%,#f8f010 21%,#b4f018 29%,#3ce828 40%,#18e464 52%,#10e0b4 60%,#10d0f0 67%,#1890f8 75%,#2858f8 82%,#3830f0 89%,#6820e0 95%,#8c18c8 100%)"></div>
<div style="position:absolute;left:314.9px;top:60.800000000000004px;width:3px;height:0.8px;background:#9a9a9a"></div>
<div style="position:absolute;left:319.5px;top:53.5px;font-size:5.2px;line-height:6.24px;color:#fff;font-weight:normal;white-space:nowrap;">0</div>
<div style="position:absolute;left:308.8px;top:158.4px;font-size:5.2px;line-height:6.24px;color:#fff;font-weight:normal;white-space:nowrap;">-629.145</div>
<div style="position:absolute;left:340.8px;top:32.8px;font-size:5.0px;line-height:6.00px;color:#fff;font-weight:normal;white-space:nowrap;">&micro;m</div>
<div style="position:absolute;left:340.8px;top:38.5px;font-size:5.2px;line-height:6.24px;color:#fff;font-weight:normal;white-space:nowrap;">96.079</div>
<div style="position:absolute;left:340.8px;top:45.2px;width:6.5px;height:106.2px;background:linear-gradient(#ff1a08 0%,#ff3c08 5%,#ff8c10 12.5%,#ffc410 17%,#f8f010 21%,#b4f018 29%,#3ce828 40%,#18e464 52%,#10e0b4 60%,#10d0f0 67%,#1890f8 75%,#2858f8 82%,#3830f0 89%,#6820e0 95%,#8c18c8 100%)"></div>
<div style="position:absolute;left:347.3px;top:59.0px;width:3px;height:0.8px;background:#9a9a9a"></div>
<div style="position:absolute;left:351.8px;top:51.699999999999996px;font-size:5.2px;line-height:6.24px;color:#fff;font-weight:normal;white-space:nowrap;">0</div>
<div style="position:absolute;left:341.40000000000003px;top:152.0px;font-size:5.2px;line-height:6.24px;color:#fff;font-weight:normal;white-space:nowrap;">-629.145</div>
<div style="position:absolute;left:2.3px;top:11.8px;width:30.9px;height:12.6px;background:linear-gradient(#626567,#4d5052);border:0.5px solid #5e6163;border-radius:0.6px;box-sizing:border-box;"><div style="position:absolute;left:1.3px;top:1.6px;width:8.3px;height:8.6px;box-sizing:border-box;border:0.7px solid #cfcfcf;background:linear-gradient(90deg,#2a2a2a,#8a8a8a)"></div><div style="position:absolute;left:10.4px;top:2.7px;font-size:5.1px;line-height:6.2px;color:#f4f4f4;white-space:nowrap">Intensity</div></div>
<div style="position:absolute;left:35.2px;top:11.8px;width:31px;height:12.6px;background:linear-gradient(#626567,#4d5052);border:0.5px solid #5e6163;border-radius:0.6px;box-sizing:border-box;"><div style="position:absolute;left:1.2px;top:1.6px;width:8.6px;height:8.6px;box-sizing:border-box;border:0.7px solid #cfcfcf;background:linear-gradient(90deg,#d01848 0 33%,#38c828 33% 66%,#2070e8 66%)"></div><div style="position:absolute;left:13.2px;top:2.7px;font-size:5.1px;line-height:6.2px;color:#f4f4f4;white-space:nowrap">Color</div></div>
<div style="position:absolute;left:68px;top:11.8px;width:31.2px;height:12.6px;background:linear-gradient(#33779a,#2a6686);border:0.5px solid #3a7c9c;border-radius:0.6px;box-sizing:border-box;"><svg style="position:absolute;left:0.6px;top:1.4px" width="12" height="10" viewBox="0 0 12 10"><rect x="0.6" y="7.3" width="10" height="1.7" fill="#f4fbff"/><rect x="0.6" y="6.9" width="10" height=".6" fill="#58d0f0"/><path d="M0.7 6.9 L0.9 5 L2 3.9 L3.3 4.6 L4.2 6 L4.6 6.9Z" fill="#b4e828"/><path d="M3.9 6.9 L4.5 3 L5.4 1 L6.6 0.6 L7.6 1.6 L8.3 4 L8.7 6.9Z" fill="#ffd820"/><path d="M5 2.4 L5.6 1 L6.6 0.6 L7.5 1.6 L7.8 2.8 L6.4 2.2Z" fill="#ff9420"/><path d="M9.3 6.9V1.6h1v5.3z" fill="#28b8f0"/></svg><div style="position:absolute;left:13.4px;top:2.7px;font-size:5.1px;line-height:6.2px;color:#f4f4f4;white-space:nowrap">Height</div></div>
<div style="position:absolute;left:102.5px;top:11.8px;width:13.8px;height:12.6px;background:linear-gradient(#626567,#4d5052);border:0.5px solid #5e6163;border-radius:0.6px;box-sizing:border-box;"><svg style="position:absolute;left:1.5px;top:0.6px" width="8" height="11" viewBox="0 0 8 11"><circle cx="4" cy="3.9" r="2.7" fill="none" stroke="#20c4e4" stroke-width="1.1"/><path d="M1.4 3.9h5.2M4 1.2v5.4" stroke="#20c4e4" stroke-width=".7"/><circle cx="4" cy="3.9" r=".7" fill="#e8f8ff"/><text x="4.1" y="9.9" font-size="4.3" font-family="Liberation Sans" font-weight="bold" fill="#fff" text-anchor="middle">3D</text></svg></div>
<div style="position:absolute;left:341.8px;top:11.8px;width:31.2px;height:12.6px;background:linear-gradient(#626567,#4d5052);border:0.5px solid #5e6163;border-radius:0.6px;box-sizing:border-box;"><div style="position:absolute;left:1.3px;top:1.6px;width:8.3px;height:8.6px;box-sizing:border-box;border:0.7px solid #cfcfcf;background:linear-gradient(90deg,#2a2a2a,#8a8a8a)"></div><div style="position:absolute;left:10.6px;top:2.7px;font-size:5.1px;line-height:6.2px;color:#f4f4f4;white-space:nowrap">Intensity</div></div>
<div style="position:absolute;left:374.8px;top:11.8px;width:30.4px;height:12.6px;background:linear-gradient(#626567,#4d5052);border:0.5px solid #5e6163;border-radius:0.6px;box-sizing:border-box;"><div style="position:absolute;left:1.2px;top:1.6px;width:8.6px;height:8.6px;box-sizing:border-box;border:0.7px solid #cfcfcf;background:linear-gradient(90deg,#d01848 0 33%,#38c828 33% 66%,#2070e8 66%)"></div><div style="position:absolute;left:13.2px;top:2.7px;font-size:5.1px;line-height:6.2px;color:#f4f4f4;white-space:nowrap">Color</div></div>
<div style="position:absolute;left:407px;top:11.8px;width:31.6px;height:12.6px;background:linear-gradient(#33779a,#2a6686);border:0.5px solid #3a7c9c;border-radius:0.6px;box-sizing:border-box;"><svg style="position:absolute;left:0.6px;top:1.4px" width="12" height="10" viewBox="0 0 12 10"><rect x="0.6" y="7.3" width="10" height="1.7" fill="#f4fbff"/><rect x="0.6" y="6.9" width="10" height=".6" fill="#58d0f0"/><path d="M0.7 6.9 L0.9 5 L2 3.9 L3.3 4.6 L4.2 6 L4.6 6.9Z" fill="#b4e828"/><path d="M3.9 6.9 L4.5 3 L5.4 1 L6.6 0.6 L7.6 1.6 L8.3 4 L8.7 6.9Z" fill="#ffd820"/><path d="M5 2.4 L5.6 1 L6.6 0.6 L7.5 1.6 L7.8 2.8 L6.4 2.2Z" fill="#ff9420"/><path d="M9.3 6.9V1.6h1v5.3z" fill="#28b8f0"/></svg><div style="position:absolute;left:13.6px;top:2.7px;font-size:5.1px;line-height:6.2px;color:#f4f4f4;white-space:nowrap">Height</div></div>
<div style="position:absolute;left:444.8px;top:14.8px;font-size:5.7px;line-height:6.84px;color:#fafafa;font-weight:normal;white-space:nowrap;">Zoom</div>
<div style="position:absolute;left:462px;top:13.1px;width:30.2px;height:9.4px;background:linear-gradient(#45484b,#3a3d40);border-radius:1.2px;box-shadow:inset 0 0 0 0.5px #5c5f62"><div style="position:absolute;left:1.6px;top:0.9px;font-size:6px;line-height:7.2px;color:#fff;white-space:nowrap">13%(Fit)</div></div>
<div style="position:absolute;left:493px;top:13.1px;width:6.6px;height:9.4px;background:linear-gradient(#66696c,#525558);border-radius:1.2px"><svg style="position:absolute;left:1.5px;top:3.6px" width="3.6" height="2.6" viewBox="0 0 4 3"><path d="M0 0h4L2 3z" fill="#fff"/></svg></div>
<div style="position:absolute;left:504px;top:11.8px;width:13.4px;height:12.6px;background:linear-gradient(#626567,#4d5052);border:0.5px solid #5e6163;border-radius:0.6px;box-sizing:border-box;"><svg style="position:absolute;left:1.6px;top:1.2px" width="10" height="10" viewBox="0 0 10 10"><circle cx="4.2" cy="4.2" r="2.9" fill="none" stroke="#fff" stroke-width="1.1"/><path d="M6.3 6.3L9 9" stroke="#fff" stroke-width="1.5" stroke-linecap="round"/></svg></div>
<div style="position:absolute;left:520px;top:11.8px;width:13.6px;height:12.6px;background:linear-gradient(#626567,#4d5052);border:0.5px solid #5e6163;border-radius:0.6px;box-sizing:border-box;"><svg style="position:absolute;left:1.2px;top:1px" width="11" height="11" viewBox="0 0 11 11"><path d="M2.2 6.8 L7.8 1.2 L9.4 2.6 L3.9 8.2 L1.8 8.6Z" fill="#e8e8e8"/><path d="M2.2 6.8L3.9 8.2 1.8 8.6Z" fill="#30c0e8"/><path d="M3.4 6.9L8.2 2" stroke="#30a8d8" stroke-width=".8"/><rect x="0.8" y="9" width="7.4" height="1.5" fill="#e81818"/><path d="M8.8 9.2h1.8l-.9 1.2z" fill="#fff"/></svg></div>
<div style="position:absolute;left:536.6px;top:11.8px;width:13.4px;height:12.6px;background:linear-gradient(#626567,#4d5052);border:0.5px solid #5e6163;border-radius:0.6px;box-sizing:border-box;"><svg style="position:absolute;left:1.2px;top:1px" width="11" height="11" viewBox="0 0 11 11"><path d="M2.2 6.8 L7.8 1.2 L9.4 2.6 L3.9 8.2 L1.8 8.6Z" fill="#e8e8e8"/><path d="M2.2 6.8L3.9 8.2 1.8 8.6Z" fill="#30c0e8"/><path d="M3.4 6.9L8.2 2" stroke="#30a8d8" stroke-width=".8"/><rect x="0.8" y="9" width="7.4" height="1.5" fill="#e8e8e8"/><path d="M8.8 9.2h1.8l-.9 1.2z" fill="#fff"/></svg></div>
<div style="position:absolute;left:339.6px;top:299.2px;font-size:5.2px;line-height:6.24px;color:#f0f0f0;font-weight:normal;white-space:nowrap;">(X,Y)</div>
<div style="position:absolute;left:356.2px;top:299.2px;font-size:5.2px;line-height:6.24px;color:#f0f0f0;font-weight:normal;white-space:nowrap;">=</div>
<div style="position:absolute;left:364.6px;top:299.2px;font-size:5.2px;line-height:6.24px;color:#f0f0f0;font-weight:normal;white-space:nowrap;">-</div>
<div style="position:absolute;left:406px;top:299.2px;font-size:5.2px;line-height:6.24px;color:#f0f0f0;font-weight:normal;white-space:nowrap;">Height</div>
<div style="position:absolute;left:426.6px;top:299.2px;font-size:5.2px;line-height:6.24px;color:#f0f0f0;font-weight:normal;white-space:nowrap;">=</div>
<div style="position:absolute;left:434.4px;top:299.2px;font-size:5.2px;line-height:6.24px;color:#f0f0f0;font-weight:normal;white-space:nowrap;">-</div>
<div style="position:absolute;left:490px;top:299.2px;font-size:5.2px;line-height:6.24px;color:#f0f0f0;font-weight:normal;white-space:nowrap;">Intensity</div>
<div style="position:absolute;left:515.6px;top:299.2px;font-size:5.2px;line-height:6.24px;color:#f0f0f0;font-weight:normal;white-space:nowrap;">=</div>
<div style="position:absolute;left:523.2px;top:299.2px;font-size:5.2px;line-height:6.24px;color:#f0f0f0;font-weight:normal;white-space:nowrap;">-</div>
<div style="position:absolute;left:624.2px;top:337.6px;width:11px;height:11px;background:linear-gradient(#6a6d6f,#4e5153);border:0.5px solid #8a8d8f;box-sizing:border-box;border-radius:1px"><svg style="position:absolute;left:1px;top:1px" width="8.6" height="8.6" viewBox="0 0 8.6 8.6"><path d="M1.4 6.2L6.4 1.2L7.6 2.4L2.6 7.4L1 7.8z" fill="#e8e8e8"/><path d="M2.4 6.4L6.8 2" stroke="#30a8d8" stroke-width=".8"/><circle cx="3" cy="6" r="1.1" fill="#30c0e8"/></svg></div>
<div style="position:absolute;left:640.8px;top:13.6px;width:149.4px;height:163.4px;background:linear-gradient(#4b4b4b,#444444);border:0.7px solid #636363;border-radius:4px;box-sizing:border-box;box-shadow:0 0 0 0.7px #141414"></div>
<div style="position:absolute;left:644.8px;top:17.4px;width:141.6px;height:9.2px;background:#242424;border-radius:2px;box-shadow:0 0.5px 0 #5a5a5a"></div>
<div style="position:absolute;left:648.8px;top:17.6px;font-size:7.3px;line-height:8.76px;color:#fff;font-weight:bold;white-space:nowrap;">1</div>
<div style="position:absolute;left:657.3px;top:18.6px;width:0.6px;height:6.8px;background:#555"></div>
<div style="position:absolute;left:662.4px;top:17.6px;font-size:6.9px;line-height:8.28px;color:#fff;font-weight:bold;white-space:nowrap;">Specify the measurement line</div>
<div style="position:absolute;left:776.6px;top:18px;width:8px;height:8px;background:#2e2e2e;border-radius:1.5px;border:0.4px solid #4a4a4a;box-sizing:border-box"></div>
<div style="position:absolute;left:778.4px;top:17.6px;font-size:7.3px;line-height:8.76px;color:#fff;font-weight:bold;white-space:nowrap;">?</div>
<div style="position:absolute;left:657.8px;top:29.2px;width:117px;height:12.8px;background:#1e1e1e;border-radius:1.6px"></div>
<div style="position:absolute;left:658.6px;top:30px;width:57.6px;height:11.2px;background:linear-gradient(#35799b,#2b6686);border-radius:1px 0 0 1px"><div style="position:absolute;left:0;width:100%;text-align:center;top:1.7px;font-size:6.6px;line-height:8px;color:#e4eef4">Line type</div></div>
<div style="position:absolute;left:716.6px;top:30px;width:57.6px;height:11.2px;background:linear-gradient(#666a6c,#515456);border-radius:0 1px 1px 0"><div style="position:absolute;left:0;width:100%;text-align:center;top:1.7px;font-size:6.6px;line-height:8px;color:#ececec">Auxiliary tools</div></div>
<div style="position:absolute;left:645.3px;top:48.4px;width:139.8px;height:102.8px;background:#262626;border-radius:2.6px;box-shadow:0 0.6px 0 #5c5c5c"></div>
<svg style="position:absolute;left:683px;top:43.4px" width="10" height="5.2" viewBox="0 0 10 5.2"><path d="M0 5.2L5 0L10 5.2z" fill="#262626"/></svg>
<div style="position:absolute;left:648px;top:51.4px;width:24.2px;height:19.6px;background:linear-gradient(#686b6d,#4f5254);border-radius:1.6px;box-shadow:inset 0 0 0 0.6px #7a7d7f,0 0 0 0.7px #1c1c1c;"><svg style="position:absolute;left:0;top:0" width="24.2" height="19.6" viewBox="0 0 24.2 19.6"><text x="8.1" y="7.1" font-size="5" font-weight="bold" font-family="Liberation Sans" fill="#fff" text-anchor="middle">X</text><path d="M6 10.3h12.4" stroke="#28c0e8" stroke-width="1.1"/><text x="12.1" y="18.4" font-size="4.45" font-family="Liberation Sans" fill="#f4f4f4" text-anchor="middle">Horizontal</text></svg></div>
<div style="position:absolute;left:675.5px;top:51.4px;width:24.2px;height:19.6px;background:linear-gradient(#686b6d,#4f5254);border-radius:1.6px;box-shadow:inset 0 0 0 0.6px #7a7d7f,0 0 0 0.7px #1c1c1c;"><svg style="position:absolute;left:0;top:0" width="24.2" height="19.6" viewBox="0 0 24.2 19.6"><text x="10.6" y="7.1" font-size="5" font-weight="bold" font-family="Liberation Sans" fill="#fff" text-anchor="middle">Y</text><path d="M14.6 3v10.5" stroke="#28c0e8" stroke-width="1.1"/><text x="12.1" y="18.4" font-size="4.45" font-family="Liberation Sans" fill="#f4f4f4" text-anchor="middle">Vertical</text></svg></div>
<div style="position:absolute;left:703px;top:51.4px;width:24.2px;height:19.6px;background:linear-gradient(#686b6d,#4f5254);border-radius:1.6px;box-shadow:inset 0 0 0 0.6px #7a7d7f,0 0 0 0.7px #1c1c1c;"><svg style="position:absolute;left:0;top:0" width="24.2" height="19.6" viewBox="0 0 24.2 19.6"><path d="M6.4 11.8L17.1 2.3" stroke="#28c0e8" stroke-width="1.3"/><circle cx="9" cy="9.8" r="0.75" fill="#fff"/><circle cx="14.8" cy="4.5" r="0.75" fill="#fff"/><text x="12.1" y="18.4" font-size="4.45" font-family="Liberation Sans" fill="#f4f4f4" text-anchor="middle">2 points</text></svg></div>
<div style="position:absolute;left:730.4px;top:51.4px;width:24.2px;height:19.6px;background:linear-gradient(#686b6d,#4f5254);border-radius:1.6px;box-shadow:inset 0 0 0 0.6px #7a7d7f,0 0 0 0.7px #1c1c1c;"><svg style="position:absolute;left:0;top:0" width="24.2" height="19.6" viewBox="0 0 24.2 19.6"><path d="M7.1 4.7l4.1 8M9.9 9.6L17.2 4.7" stroke="#28c0e8" stroke-width="1.2" fill="none"/><circle cx="7.1" cy="4.7" r="0.7" fill="#fff"/><circle cx="11.3" cy="12.9" r="0.7" fill="#fff"/><circle cx="17.2" cy="4.7" r="0.7" fill="#fff"/><circle cx="9.9" cy="9.6" r="0.6" fill="#fff"/><text x="12.1" y="18.4" font-size="4.45" font-family="Liberation Sans" fill="#f4f4f4" text-anchor="middle">Perpend.</text></svg></div>
<div style="position:absolute;left:757.8px;top:51.4px;width:24.2px;height:19.6px;background:linear-gradient(#686b6d,#4f5254);border-radius:1.6px;box-shadow:inset 0 0 0 0.6px #7a7d7f,0 0 0 0.7px #1c1c1c;"><svg style="position:absolute;left:0;top:0" width="24.2" height="19.6" viewBox="0 0 24.2 19.6"><path d="M6 3.9h3.8M13.9 3.9h3.8" stroke="#28c0e8" stroke-width="1.3"/><path d="M10.8 3.9h2.1" stroke="#fff" stroke-width="1.3"/><path d="M7 11h10.2" stroke="#fff" stroke-width=".5" fill="none"/><path d="M6.3 11l1.6-.9v1.8z" fill="#fff"/><path d="M17.9 11l-1.6-.9v1.8z" fill="#fff"/><text x="12.1" y="18.4" font-size="4.45" font-family="Liberation Sans" fill="#f4f4f4" text-anchor="middle">Parallel</text></svg></div>
<div style="position:absolute;left:648px;top:76.4px;width:24.2px;height:19.6px;background:linear-gradient(#686b6d,#4f5254);border-radius:1.6px;box-shadow:inset 0 0 0 0.6px #7a7d7f,0 0 0 0.7px #1c1c1c;"><svg style="position:absolute;left:0;top:0" width="24.2" height="19.6" viewBox="0 0 24.2 19.6"><path d="M7.5 11.3L16.5 3.2" stroke="#28c0e8" stroke-width="1.2"/><circle cx="7.5" cy="11.3" r="0.85" fill="#fff"/><circle cx="16.5" cy="3.2" r="0.85" fill="#fff"/><text x="12.1" y="18.4" font-size="4.45" font-family="Liberation Sans" fill="#f4f4f4" text-anchor="middle">Pt to Pt</text></svg></div>
<div style="position:absolute;left:675.5px;top:76.4px;width:24.2px;height:19.6px;background:linear-gradient(#686b6d,#4f5254);border-radius:1.6px;box-shadow:inset 0 0 0 0.6px #7a7d7f,0 0 0 0.7px #1c1c1c;"><svg style="position:absolute;left:0;top:0" width="24.2" height="19.6" viewBox="0 0 24.2 19.6"><circle cx="12" cy="7.8" r="4.6" fill="none" stroke="#28c0e8" stroke-width="1.2"/><path d="M12 7.8h4.6" stroke="#28c0e8" stroke-width="1"/><circle cx="12" cy="7.8" r="0.6" fill="#fff"/><circle cx="14.3" cy="7.8" r="0.6" fill="#fff"/><circle cx="16.6" cy="7.8" r="0.6" fill="#fff"/><text x="12.1" y="18.4" font-size="4.45" font-family="Liberation Sans" fill="#f4f4f4" text-anchor="middle">2 points</text></svg></div>
<div style="position:absolute;left:703px;top:76.4px;width:24.2px;height:19.6px;background:linear-gradient(#686b6d,#4f5254);border-radius:1.6px;box-shadow:inset 0 0 0 0.6px #7a7d7f,0 0 0 0.7px #1c1c1c;"><svg style="position:absolute;left:0;top:0" width="24.2" height="19.6" viewBox="0 0 24.2 19.6"><circle cx="11.7" cy="8.1" r="4.4" fill="none" stroke="#28c0e8" stroke-width="1.2"/><circle cx="11.7" cy="3.7" r="0.7" fill="#fff"/><circle cx="7.5" cy="8.6" r="0.7" fill="#fff"/><circle cx="16" cy="8.6" r="0.7" fill="#fff"/><text x="12.1" y="18.4" font-size="4.45" font-family="Liberation Sans" fill="#f4f4f4" text-anchor="middle">3 points</text></svg></div>
<div style="position:absolute;left:730.4px;top:76.4px;width:24.2px;height:19.6px;background:linear-gradient(#686b6d,#4f5254);border-radius:1.6px;box-shadow:inset 0 0 0 0.6px #7a7d7f,0 0 0 0.7px #1c1c1c;"><svg style="position:absolute;left:0;top:0" width="24.2" height="19.6" viewBox="0 0 24.2 19.6"><path d="M11.2 4.7l5.2 2.3L7.7 10.1l6.5 3.2" stroke="#28c0e8" stroke-width="1.2" fill="none"/><circle cx="11.2" cy="4.7" r="0.7" fill="#fff"/><circle cx="16.4" cy="7" r="0.7" fill="#fff"/><circle cx="7.7" cy="10.1" r="0.7" fill="#fff"/><circle cx="14.2" cy="13.3" r="0.7" fill="#fff"/><text x="12.1" y="18.4" font-size="4.45" font-family="Liberation Sans" fill="#f4f4f4" text-anchor="middle">Polygonal</text></svg></div>
<div style="position:absolute;left:648px;top:101.2px;width:24.2px;height:19.6px;background:linear-gradient(#686b6d,#4f5254);border-radius:1.6px;box-shadow:inset 0 0 0 0.6px #7a7d7f,0 0 0 0.7px #1c1c1c;"><svg style="position:absolute;left:0;top:0" width="24.2" height="19.6" viewBox="0 0 24.2 19.6"><g transform="translate(12,3.6) scale(0.95)"><path d="M-3.5 1h7v1h-7z M-1.2 0h2.4v1h-2.4z" fill="#fff"/><path d="M-2.8 2.6 h5.6 l-0.5 6.3 h-4.6z" fill="none" stroke="#fff" stroke-width=".8"/><path d="M-0.9 3.8v4 M0.9 3.8v4" stroke="#fff" stroke-width=".5"/></g><text x="12.1" y="18.4" font-size="4.45" font-family="Liberation Sans" fill="#f4f4f4" text-anchor="middle">Delete</text></svg></div>
<div style="position:absolute;left:675.5px;top:101.2px;width:24.2px;height:19.6px;background:linear-gradient(#686b6d,#4f5254);border-radius:1.6px;box-shadow:inset 0 0 0 0.6px #7a7d7f,0 0 0 0.7px #1c1c1c;"><svg style="position:absolute;left:0;top:0" width="24.2" height="19.6" viewBox="0 0 24.2 19.6"><g transform="translate(10.6,3.2) scale(0.82)"><path d="M-3.5 1h7v1h-7z M-1.2 0h2.4v1h-2.4z" fill="#fff"/><path d="M-2.8 2.6 h5.6 l-0.5 6.3 h-4.6z" fill="none" stroke="#fff" stroke-width=".8"/><path d="M-0.9 3.8v4 M0.9 3.8v4" stroke="#fff" stroke-width=".5"/></g><text x="12.9" y="13.3" font-size="4.1" font-weight="bold" font-family="Liberation Sans" fill="#28c0e8" text-anchor="middle">ALL</text><text x="12.1" y="18.4" font-size="4.45" font-family="Liberation Sans" fill="#f4f4f4" text-anchor="middle">Delete all</text></svg></div>
<div style="position:absolute;left:647.2px;top:126.2px;font-size:5.7px;line-height:6.84px;color:#f8f8f8;font-weight:normal;white-space:nowrap;">Line width</div>
<div style="position:absolute;left:702.6px;top:125.2px;width:33.8px;height:10.2px;background:linear-gradient(#3a3c3e,#46484a);border-radius:1.4px"><div style="position:absolute;right:2px;top:0.2px;font-size:8px;line-height:9.4px;color:#f4f4f4">0</div></div>
<div style="position:absolute;left:737.6px;top:125.6px;width:5.2px;height:4.4px;background:#606365;border-radius:.6px"><svg style="position:absolute;left:0.8px;top:0.8px" width="2.6" height="2" viewBox="0 0 2.6 2"><path d="M0.2 0.2L2.4 1.8M2.4 0.2L0.2 1.8" stroke="#fff" stroke-width=".5"/></svg></div>
<div style="position:absolute;left:737.6px;top:130.6px;width:5.2px;height:4.4px;background:#606365;border-radius:.6px"><svg style="position:absolute;left:0.8px;top:0.8px" width="2.6" height="2" viewBox="0 0 2.6 2"><path d="M0.2 0.2L2.4 1.8M2.4 0.2L0.2 1.8" stroke="#fff" stroke-width=".5"/></svg></div>
<div style="position:absolute;left:747.8px;top:125.6px;width:30.6px;height:8.8px;background:linear-gradient(#6c6f71,#55585a);border-radius:1.2px"><div style="position:absolute;left:9.6px;top:0.6px;font-size:5.6px;line-height:6.8px;color:#f4f4f4">&micro;m</div><svg style="position:absolute;right:2px;top:3px" width="3.4" height="2.4" viewBox="0 0 3.4 2.4"><path d="M0 0h3.4L1.7 2.4z" fill="#fff"/></svg></div>
<div style="position:absolute;left:663.9000000000001px;top:166.29999999999998px;width:6.6px;height:6.6px;border-radius:50%;background:radial-gradient(#38e8fc 0 38%,#20a8c8 52%,#222 64%,#222 74%,#8a8a8a 86%,#555 100%)"></div>
<div style="position:absolute;left:672.4px;top:165.7px;font-size:6.5px;line-height:7.80px;color:#f8f8f8;font-weight:normal;white-space:nowrap;">Height</div>
<div style="position:absolute;left:701.5px;top:166.29999999999998px;width:6.6px;height:6.6px;border-radius:50%;background:radial-gradient(#747474 0 36%,#5a5a5a 50%,#222 64%,#222 74%,#858585 86%,#555 100%)"></div>
<div style="position:absolute;left:710px;top:165.7px;font-size:6.5px;line-height:7.80px;color:#f8f8f8;font-weight:normal;white-space:nowrap;">Intensity</div>
<div style="position:absolute;left:746.3000000000001px;top:166.29999999999998px;width:6.6px;height:6.6px;border-radius:50%;background:radial-gradient(#747474 0 36%,#5a5a5a 50%,#222 64%,#222 74%,#858585 86%,#555 100%)"></div>
<div style="position:absolute;left:754.8px;top:165.7px;font-size:6.5px;line-height:7.80px;color:#f8f8f8;font-weight:normal;white-space:nowrap;">Color</div>
<div style="position:absolute;left:637px;top:313.6px;width:163px;height:138.4px;overflow:hidden;background:#222">
<div style="position:absolute;left:3.7999999999999545px;top:1.599999999999966px;width:149.6px;height:160px;background:linear-gradient(#4b4b4b,#454545);border:0.7px solid #636363;border-radius:4px;box-sizing:border-box;box-shadow:0 0 0 0.7px #141414"></div>
<div style="position:absolute;left:7.7999999999999545px;top:5.7999999999999545px;width:142.6px;height:9.4px;background:#242424;border-radius:2px;box-shadow:0 0.5px 0 #5a5a5a"></div>
<div style="position:absolute;left:11.600000000000023px;top:6.099999999999966px;font-size:7.3px;line-height:8.76px;color:#fff;font-weight:bold;white-space:nowrap;">2</div>
<div style="position:absolute;left:20.299999999999955px;top:7.0px;width:0.6px;height:6.8px;background:#555"></div>
<div style="position:absolute;left:25.399999999999977px;top:6.099999999999966px;font-size:7.1px;line-height:8.52px;color:#fff;font-weight:bold;white-space:nowrap;">Measure</div>
<div style="position:absolute;left:21.799999999999955px;top:18.799999999999955px;width:117.4px;height:12.8px;background:#1e1e1e;border-radius:1.6px"></div>
<div style="position:absolute;left:22.600000000000023px;top:19.599999999999966px;width:57.4px;height:11.2px;background:linear-gradient(#35799b,#2b6686);border-radius:1px 0 0 1px;box-shadow:inset 0 0 0 0.5px #9cc8e0"><div style="position:absolute;left:-2px;width:61.4px;text-align:center;top:1.8px;font-size:6.3px;line-height:7.6px;color:#e4eef4;white-space:nowrap">Measuring function</div></div>
<div style="position:absolute;left:80.39999999999998px;top:19.599999999999966px;width:58px;height:11.2px;background:linear-gradient(#666a6c,#515456);border-radius:0 1px 1px 0"><div style="position:absolute;left:0;width:100%;text-align:center;top:1.7px;font-size:6.6px;line-height:8px;color:#ececec">Auxiliary tools</div></div>
<div style="position:absolute;left:8.600000000000023px;top:37.599999999999966px;width:141px;height:108px;background:#262626;border-radius:2.6px"></div>
<svg style="position:absolute;left:46.5px;top:32.599999999999966px" width="10" height="5.2" viewBox="0 0 10 5.2"><path d="M0 5.2L5 0L10 5.2z" fill="#262626"/></svg>
<div style="position:absolute;left:12.5px;top:40.69999999999999px;width:24.2px;height:20.1px;background:linear-gradient(#686b6d,#4f5254);border-radius:1.6px;box-shadow:inset 0 0 0 0.6px #7a7d7f,0 0 0 0.7px #1c1c1c;"><svg style="position:absolute;left:0;top:0" width="24.2" height="20.1" viewBox="0 0 24.2 20.1"><path d="M6.5 7v6.4M17.7 7v6.4" stroke="#e8c8c0" stroke-width=".5"/><path d="M6.5 12.2h11.2" stroke="#28c0e8" stroke-width="1.4"/><circle cx="6.5" cy="6.7" r="0.8" fill="#fff"/><circle cx="17.7" cy="6.7" r="0.8" fill="#fff"/><text x="12.1" y="18.7" font-size="4.45" font-family="Liberation Sans" fill="#f4f4f4" text-anchor="middle">Pt to Pt</text><text x="12.1" y="4.3" font-size="4.45" font-family="Liberation Sans" fill="#f4f4f4" text-anchor="middle">Width</text></svg></div>
<div style="position:absolute;left:40px;top:40.69999999999999px;width:24.2px;height:20.1px;background:linear-gradient(#686b6d,#4f5254);border-radius:1.6px;box-shadow:inset 0 0 0 0.6px #7a7d7f,0 0 0 0.7px #1c1c1c;"><svg style="position:absolute;left:0;top:0" width="24.2" height="20.1" viewBox="0 0 24.2 20.1"><path d="M10.8 10.6c.5-2.6 .9-3.4 1.4-3.4s.9 .8 1.4 3.4z" fill="#28c0e8"/><path d="M6.6 13.2h2.2c1.8 0 1.8-6.6 3.4-6.6s1.6 6.6 3.4 6.6h2.2" fill="none" stroke="#fff" stroke-width=".75"/><circle cx="7" cy="12.2" r="0.45" fill="#fff"/><circle cx="17.4" cy="12.2" r="0.45" fill="#fff"/><text x="12.1" y="18.7" font-size="4.45" font-family="Liberation Sans" fill="#f4f4f4" text-anchor="middle">Reference</text><text x="12.1" y="4.3" font-size="4.45" font-family="Liberation Sans" fill="#f4f4f4" text-anchor="middle">Width</text></svg></div>
<div style="position:absolute;left:67.60000000000002px;top:40.69999999999999px;width:24.2px;height:20.1px;background:linear-gradient(#686b6d,#4f5254);border-radius:1.6px;box-shadow:inset 0 0 0 0.6px #7a7d7f,0 0 0 0.7px #1c1c1c;"><svg style="position:absolute;left:0;top:0" width="24.2" height="20.1" viewBox="0 0 24.2 20.1"><path d="M10.6 10.8c.6-2.8 1-3.6 1.6-3.6s1 .8 1.6 3.6z" fill="#28c0e8"/><path d="M6.6 13.2h2.2c1.8 0 1.8-6.6 3.4-6.6s1.6 6.6 3.4 6.6h2.2" fill="none" stroke="#fff" stroke-width=".75"/><circle cx="8.2" cy="11.4" r="0.45" fill="#fff"/><circle cx="16.6" cy="12.4" r="0.45" fill="#fff"/><text x="12.1" y="18.7" font-size="4.45" font-family="Liberation Sans" fill="#f4f4f4" text-anchor="middle">Reference</text><text x="12.1" y="4.3" font-size="4.45" font-family="Liberation Sans" fill="#f4f4f4" text-anchor="middle">Width</text></svg></div>
<div style="position:absolute;left:95.20000000000005px;top:40.69999999999999px;width:24.2px;height:20.1px;background:linear-gradient(#686b6d,#4f5254);border-radius:1.6px;box-shadow:inset 0 0 0 0.6px #7a7d7f,0 0 0 0.7px #1c1c1c;"><svg style="position:absolute;left:0;top:0" width="24.2" height="20.1" viewBox="0 0 24.2 20.1"><path d="M13.7 6.2v7.2" stroke="#28c0e8" stroke-width="1.2"/><circle cx="10.6" cy="6.8" r="0.6" fill="#fff"/><circle cx="10.6" cy="13" r="0.6" fill="#fff"/><text x="12.1" y="18.7" font-size="4.45" font-family="Liberation Sans" fill="#f4f4f4" text-anchor="middle">Pt to Pt</text><text x="12.1" y="4.3" font-size="4.45" font-family="Liberation Sans" fill="#f4f4f4" text-anchor="middle">Height</text></svg></div>
<div style="position:absolute;left:122.60000000000002px;top:40.69999999999999px;width:24.2px;height:20.1px;background:linear-gradient(#686b6d,#4f5254);border-radius:1.6px;box-shadow:inset 0 0 0 0.6px #7a7d7f,0 0 0 0.7px #1c1c1c;"><svg style="position:absolute;left:0;top:0" width="24.2" height="20.1" viewBox="0 0 24.2 20.1"><path d="M8 6.7h8.6" stroke="#fff" stroke-width=".8"/><path d="M12.3 7v5.6" stroke="#28c0e8" stroke-width="1.3"/><circle cx="12.3" cy="13.3" r="0.6" fill="#fff"/><text x="12.1" y="18.7" font-size="4.45" font-family="Liberation Sans" fill="#f4f4f4" text-anchor="middle">Ln to Pt</text><text x="12.1" y="4.3" font-size="4.45" font-family="Liberation Sans" fill="#f4f4f4" text-anchor="middle">Height</text></svg></div>
<div style="position:absolute;left:12.5px;top:65.5px;width:24.2px;height:20.1px;background:linear-gradient(#686b6d,#4f5254);border-radius:1.6px;box-shadow:inset 0 0 0 0.6px #7a7d7f,0 0 0 0.7px #1c1c1c;"><svg style="position:absolute;left:0;top:0" width="24.2" height="20.1" viewBox="0 0 24.2 20.1"><path d="M8 7h8.6M8 13.5h8.6" stroke="#fff" stroke-width=".8"/><path d="M12.3 7.4v5.8" stroke="#28c0e8" stroke-width="1.3"/><text x="12.1" y="18.7" font-size="4.45" font-family="Liberation Sans" fill="#f4f4f4" text-anchor="middle">Ln to Ln</text><text x="12.1" y="4.3" font-size="4.45" font-family="Liberation Sans" fill="#f4f4f4" text-anchor="middle">Height</text></svg></div>
<div style="position:absolute;left:40px;top:65.5px;width:24.2px;height:20.1px;background:linear-gradient(#686b6d,#4f5254);border-radius:1.6px;box-shadow:inset 0 0 0 0.6px #7a7d7f,0 0 0 0.7px #1c1c1c;"><svg style="position:absolute;left:0;top:0" width="24.2" height="20.1" viewBox="0 0 24.2 20.1"><path d="M10.4 12.8l1.8-3.2 1.8 3.2z" fill="#28c0e8"/><path d="M9.4 13.7l2.8-6.9 2.8 6.9" fill="none" stroke="#fff" stroke-width=".7"/><circle cx="12.2" cy="6.8" r="0.5" fill="#fff"/><text x="12.1" y="18.7" font-size="4.45" font-family="Liberation Sans" fill="#f4f4f4" text-anchor="middle">3 points</text><text x="12.1" y="4.3" font-size="4.45" font-family="Liberation Sans" fill="#f4f4f4" text-anchor="middle">Angle</text></svg></div>
<div style="position:absolute;left:67.60000000000002px;top:65.5px;width:24.2px;height:20.1px;background:linear-gradient(#686b6d,#4f5254);border-radius:1.6px;box-shadow:inset 0 0 0 0.6px #7a7d7f,0 0 0 0.7px #1c1c1c;"><svg style="position:absolute;left:0;top:0" width="24.2" height="20.1" viewBox="0 0 24.2 20.1"><path d="M10.4 13.2l1.8-2.6 1.8 2.6z" fill="#28c0e8"/><path d="M9.6 6.7l5.2 7M14.8 6.7L9.6 13.7" fill="none" stroke="#fff" stroke-width=".7"/><text x="12.1" y="18.7" font-size="4.45" font-family="Liberation Sans" fill="#f4f4f4" text-anchor="middle">2 lines</text><text x="12.1" y="4.3" font-size="4.45" font-family="Liberation Sans" fill="#f4f4f4" text-anchor="middle">Angle</text></svg></div>
<div style="position:absolute;left:95.20000000000005px;top:65.5px;width:24.2px;height:20.1px;background:linear-gradient(#686b6d,#4f5254);border-radius:1.6px;box-shadow:inset 0 0 0 0.6px #7a7d7f,0 0 0 0.7px #1c1c1c;"><svg style="position:absolute;left:0;top:0" width="24.2" height="20.1" viewBox="0 0 24.2 20.1"><rect x="7.6" y="6.4" width="9.4" height="7" fill="none" stroke="#fff" stroke-width=".55"/><path d="M10.6 12.4l1.8-3.2 1.7 3.2z" fill="#28c0e8"/><path d="M8.2 13l2.2-2.2 2-2.4 2 2.8 2 1.8" fill="none" stroke="#fff" stroke-width=".6"/><text x="12.1" y="18.7" font-size="4.45" font-family="Liberation Sans" fill="#f4f4f4" text-anchor="middle">Bump</text><text x="12.1" y="4.3" font-size="4.45" font-family="Liberation Sans" fill="#f4f4f4" text-anchor="middle">Area</text></svg></div>
<div style="position:absolute;left:122.60000000000002px;top:65.5px;width:24.2px;height:20.1px;background:linear-gradient(#686b6d,#4f5254);border-radius:1.6px;box-shadow:inset 0 0 0 0.6px #7a7d7f,0 0 0 0.7px #1c1c1c;"><svg style="position:absolute;left:0;top:0" width="24.2" height="20.1" viewBox="0 0 24.2 20.1"><rect x="7.6" y="6.4" width="9.4" height="7" fill="#28c0e8" stroke="#fff" stroke-width=".55"/><path d="M8 13.2l2-4.6 1.6 2.8 1.6-3.4 3.4 5.2z" fill="#4f5254"/><path d="M8 13l2-4.4 1.6 2.8 1.6-3.4 3.2 5" fill="none" stroke="#fff" stroke-width=".5"/><path d="M13.4 9v3.6" stroke="#c02020" stroke-width=".5"/><text x="12.1" y="18.7" font-size="4.45" font-family="Liberation Sans" fill="#f4f4f4" text-anchor="middle">Valley</text><text x="12.1" y="4.3" font-size="4.45" font-family="Liberation Sans" fill="#f4f4f4" text-anchor="middle">Area</text></svg></div>
<div style="position:absolute;left:12.5px;top:90.39999999999998px;width:24.2px;height:20.1px;background:linear-gradient(#686b6d,#4f5254);border-radius:1.6px;box-shadow:inset 0 0 0 0.6px #7a7d7f,0 0 0 0.7px #1c1c1c;"><svg style="position:absolute;left:0;top:0" width="24.2" height="20.1" viewBox="0 0 24.2 20.1"><path d="M6.8 13.4a5.6 5.6 0 0 1 10.8 0" fill="none" stroke="#fff" stroke-width="1.1"/><circle cx="7" cy="12.8" r=".8" fill="#28c0e8"/><circle cx="12.2" cy="8.9" r=".8" fill="#28c0e8"/><circle cx="17.4" cy="12.8" r=".8" fill="#28c0e8"/><text x="12.1" y="18.7" font-size="4.45" font-family="Liberation Sans" fill="#f4f4f4" text-anchor="middle">3 points</text><text x="12.1" y="4.3" font-size="4.45" font-family="Liberation Sans" fill="#f4f4f4" text-anchor="middle">Radius</text></svg></div>
<div style="position:absolute;left:40px;top:90.39999999999998px;width:24.2px;height:20.1px;background:linear-gradient(#686b6d,#4f5254);border-radius:1.6px;box-shadow:inset 0 0 0 0.6px #7a7d7f,0 0 0 0.7px #1c1c1c;"><svg style="position:absolute;left:0;top:0" width="24.2" height="20.1" viewBox="0 0 24.2 20.1"><path d="M7.4 7h9.8M7.4 13.5h9.8" stroke="#fff" stroke-width=".8"/><path d="M12.3 7.4v5.8" stroke="#28c0e8" stroke-width="1.3"/><text x="12.1" y="18.7" font-size="4.45" font-family="Liberation Sans" fill="#f4f4f4" text-anchor="middle">Ln to Ln</text><text x="12.1" y="4.3" font-size="4.45" font-family="Liberation Sans" fill="#f4f4f4" text-anchor="middle">Distance</text></svg></div>
<div style="position:absolute;left:67.60000000000002px;top:90.39999999999998px;width:24.2px;height:20.1px;"><svg style="position:absolute;left:0;top:0" width="24.2" height="20.1" viewBox="0 0 24.2 20.1"><g transform="translate(12.2,3.0) scale(1.0)"><path d="M-3.5 1h7v1h-7z M-1.2 0h2.4v1h-2.4z" fill="#fff"/><path d="M-2.8 2.6 h5.6 l-0.5 6.3 h-4.6z" fill="none" stroke="#fff" stroke-width=".8"/><path d="M-0.9 3.8v4 M0.9 3.8v4" stroke="#fff" stroke-width=".5"/></g><text x="12.1" y="18.7" font-size="4.45" font-family="Liberation Sans" fill="#f4f4f4" text-anchor="middle">Delete</text></svg></div>
<div style="position:absolute;left:95.20000000000005px;top:90.39999999999998px;width:24.2px;height:20.1px;background:linear-gradient(#686b6d,#4f5254);border-radius:1.6px;box-shadow:inset 0 0 0 0.6px #7a7d7f,0 0 0 0.7px #1c1c1c;"><svg style="position:absolute;left:0;top:0" width="24.2" height="20.1" viewBox="0 0 24.2 20.1"><g transform="translate(10.6,3.0) scale(0.82)"><path d="M-3.5 1h7v1h-7z M-1.2 0h2.4v1h-2.4z" fill="#fff"/><path d="M-2.8 2.6 h5.6 l-0.5 6.3 h-4.6z" fill="none" stroke="#fff" stroke-width=".8"/><path d="M-0.9 3.8v4 M0.9 3.8v4" stroke="#fff" stroke-width=".5"/></g><text x="12.9" y="13.2" font-size="4.1" font-weight="bold" font-family="Liberation Sans" fill="#28c0e8" text-anchor="middle">ALL</text><text x="12.1" y="18.7" font-size="4.45" font-family="Liberation Sans" fill="#f4f4f4" text-anchor="middle">Delete all</text></svg></div>
<div style="position:absolute;left:10px;top:117.59999999999997px;font-size:5.6px;line-height:6.72px;color:#f0f0f0;font-weight:normal;white-space:nowrap;">Distance from reference line</div>
<div style="position:absolute;left:111px;top:116.39999999999998px;font-size:7px;line-height:8.40px;color:#555;font-weight:normal;white-space:nowrap;">0</div>
<svg style="position:absolute;left:118.60000000000002px;top:116.79999999999995px" width="3.4" height="8.4" viewBox="0 0 3.4 8.4"><path d="M0 2.6h3.4L1.7 0z M0 5.8h3.4L1.7 8.4z" fill="#fff"/></svg>
<div style="position:absolute;left:129px;top:117.39999999999998px;font-size:5.8px;line-height:6.96px;color:#f0f0f0;font-weight:normal;white-space:nowrap;">&micro;m</div>
<div style="position:absolute;left:156.60000000000002px;top:0.0px;width:6.4px;height:138px;background:#1c1c1c"></div>
<div style="position:absolute;left:157.60000000000002px;top:8.0px;width:4.4px;height:110px;background:linear-gradient(90deg,#4a4a4a,#3a3a3a);border-radius:1.2px;border:0.4px solid #5a5a5a;box-sizing:border-box"></div>
<svg style="position:absolute;left:158.20000000000005px;top:2.7999999999999545px" width="3.4" height="2.6" viewBox="0 0 3.4 2.6"><path d="M0 2.6h3.4L1.7 0z" fill="#fff"/></svg>
<svg style="position:absolute;left:158.20000000000005px;top:133.0px" width="3.4" height="2.6" viewBox="0 0 3.4 2.6"><path d="M0 0h3.4L1.7 2.6z" fill="#fff"/></svg>
</div>
<div style="position:absolute;left:637px;top:451.4px;width:163px;height:48.6px;background:#2b2b2b"></div>
<div style="position:absolute;left:637px;top:452px;width:163px;height:3.8px;background:linear-gradient(#6a6a6a,#585858 40%,#3c3c3c 80%,#2b2b2b)"></div>
<div style="position:absolute;left:637px;top:497.4px;width:163px;height:2.6px;background:linear-gradient(#2b2b2b,#141414)"></div>
<div style="position:absolute;left:649.8px;top:463px;width:66px;height:18.2px;background:linear-gradient(#64676a,#4b4e50);border-radius:1.6px;box-shadow:inset 0 0 0 0.6px #6e7173,0 0 0 0.8px #1a1a1a;"><div style="position:absolute;left:0;width:100%;text-align:center;top:4px;font-size:8.2px;line-height:10px;color:#e8e8e8">Create report</div></div>
<div style="position:absolute;left:721.6px;top:463px;width:66.2px;height:18.2px;background:linear-gradient(#64676a,#4b4e50);border-radius:1.6px;box-shadow:inset 0 0 0 0.6px #6e7173,0 0 0 0.8px #1a1a1a;"><div style="position:absolute;left:0;width:100%;text-align:center;top:4px;font-size:8.2px;line-height:10px;color:#e8e8e8">Cancel</div></div>
<div style="position:absolute;left:0px;top:452.5px;width:637px;height:3.3px;background:linear-gradient(#6e6e6e,#5a5a5a 40%,#3a3a3a)"></div>
<div style="position:absolute;left:0px;top:455.6px;width:630.4px;height:41.4px;background:#fdfdfd"></div>
<div style="position:absolute;left:0px;top:497px;width:637px;height:3px;background:#050505"></div>
<div style="position:absolute;left:1.2px;top:456.3px;width:627.2px;height:7.3px;background:linear-gradient(#e2e2e2,#d0d0d0)"></div>
<div style="position:absolute;left:1.2px;top:463.6px;width:627.2px;height:7.699999999999989px;background:linear-gradient(#f4f4f4,#eaeaea)"></div>
<div style="position:absolute;left:1.2px;top:471.3px;width:627.2px;height:7.699999999999989px;background:linear-gradient(#f4f4f4,#eaeaea)"></div>
<div style="position:absolute;left:1.2px;top:479.0px;width:627.2px;height:7.699999999999989px;background:linear-gradient(#f4f4f4,#eaeaea)"></div>
<div style="position:absolute;left:1.2px;top:486.7px;width:627.2px;height:7.699999999999989px;background:linear-gradient(#f4f4f4,#eaeaea)"></div>
<div style="position:absolute;left:1.2px;top:456.3px;width:8.4px;height:38.1px;background:rgba(0,0,0,.06)"></div>
<div style="position:absolute;left:1.2px;top:463.20000000000005px;width:627.2px;height:0.8px;background:#b0b0b0"></div>
<div style="position:absolute;left:1.2px;top:470.90000000000003px;width:627.2px;height:0.8px;background:#b0b0b0"></div>
<div style="position:absolute;left:1.2px;top:478.6px;width:627.2px;height:0.8px;background:#b0b0b0"></div>
<div style="position:absolute;left:1.2px;top:486.3px;width:627.2px;height:0.8px;background:#b0b0b0"></div>
<div style="position:absolute;left:1.2px;top:494.0px;width:627.2px;height:0.8px;background:#b0b0b0"></div>
<div style="position:absolute;left:9.2px;top:456.3px;width:0.8px;height:38.1px;background:#a4a4a4"></div>
<div style="position:absolute;left:19.200000000000003px;top:456.3px;width:0.8px;height:38.1px;background:#a4a4a4"></div>
<div style="position:absolute;left:36.0px;top:456.3px;width:0.8px;height:38.1px;background:#a4a4a4"></div>
<div style="position:absolute;left:93.89999999999999px;top:456.3px;width:0.8px;height:38.1px;background:#a4a4a4"></div>
<div style="position:absolute;left:152.0px;top:456.3px;width:0.8px;height:38.1px;background:#a4a4a4"></div>
<div style="position:absolute;left:210.6px;top:456.3px;width:0.8px;height:38.1px;background:#a4a4a4"></div>
<div style="position:absolute;left:269.20000000000005px;top:456.3px;width:0.8px;height:38.1px;background:#a4a4a4"></div>
<div style="position:absolute;left:10.2px;top:456.6px;font-size:5.5px;line-height:6.60px;color:#111;font-weight:bold;white-space:nowrap;">No.</div>
<div style="position:absolute;left:20px;top:456.6px;font-size:5.5px;line-height:6.60px;color:#111;font-weight:bold;white-space:nowrap;">Result</div>
<div style="position:absolute;left:36.9px;top:456.6px;font-size:5.5px;line-height:6.60px;color:#111;font-weight:bold;white-space:nowrap;">Distance[&micro;m]</div>
<div style="position:absolute;left:94.8px;top:456.6px;font-size:5.5px;line-height:6.60px;color:#111;font-weight:bold;white-space:nowrap;">Width[&micro;m]</div>
<div style="position:absolute;left:152.9px;top:456.6px;font-size:5.5px;line-height:6.60px;color:#111;font-weight:bold;white-space:nowrap;">Height[&micro;m]</div>
<div style="position:absolute;left:211.5px;top:456.6px;font-size:5.5px;line-height:6.60px;color:#111;font-weight:bold;white-space:nowrap;">Angle[&deg;]</div>
<div style="position:absolute;left:10.8px;top:464.20000000000005px;font-size:5.5px;line-height:6.60px;color:#222;font-weight:normal;white-space:nowrap;">1</div>
<div style="position:absolute;left:37.6px;top:464.20000000000005px;font-size:5.5px;line-height:6.60px;color:#222;font-weight:normal;white-space:nowrap;">633.794</div>
<div style="position:absolute;left:95.4px;top:464.20000000000005px;font-size:5.5px;line-height:6.60px;color:#222;font-weight:normal;white-space:nowrap;">127.406</div>
<div style="position:absolute;left:153.4px;top:464.20000000000005px;font-size:5.5px;line-height:6.60px;color:#222;font-weight:normal;white-space:nowrap;">620.856</div>
<div style="position:absolute;left:212px;top:464.20000000000005px;font-size:5.5px;line-height:6.60px;color:#222;font-weight:normal;white-space:nowrap;">78.403</div>
<div style="position:absolute;left:2.6px;top:464.5px;width:6px;height:6px;background:#fafafa;border-radius:.5px"><svg style="position:absolute;left:0.5px;top:0.5px" width="5" height="5" viewBox="0 0 5 5"><path d="M0.6 2.4L2 4.1L4.5 0.5" fill="none" stroke="#111" stroke-width="1.05"/></svg></div>
<div style="position:absolute;left:10.8px;top:471.90000000000003px;font-size:5.5px;line-height:6.60px;color:#222;font-weight:normal;white-space:nowrap;">2</div>
<div style="position:absolute;left:37.6px;top:471.90000000000003px;font-size:5.5px;line-height:6.60px;color:#222;font-weight:normal;white-space:nowrap;">155.860</div>
<div style="position:absolute;left:95.4px;top:471.90000000000003px;font-size:5.5px;line-height:6.60px;color:#222;font-weight:normal;white-space:nowrap;">105.565</div>
<div style="position:absolute;left:153.4px;top:471.90000000000003px;font-size:5.5px;line-height:6.60px;color:#222;font-weight:normal;white-space:nowrap;">114.667</div>
<div style="position:absolute;left:212px;top:471.90000000000003px;font-size:5.5px;line-height:6.60px;color:#222;font-weight:normal;white-space:nowrap;">47.367</div>
<div style="position:absolute;left:2.6px;top:472.2px;width:6px;height:6px;background:#fafafa;border-radius:.5px"><svg style="position:absolute;left:0.5px;top:0.5px" width="5" height="5" viewBox="0 0 5 5"><path d="M0.6 2.4L2 4.1L4.5 0.5" fill="none" stroke="#111" stroke-width="1.05"/></svg></div>
<div style="position:absolute;left:10.8px;top:479.6px;font-size:5.5px;line-height:6.60px;color:#222;font-weight:normal;white-space:nowrap;">3</div>
<div style="position:absolute;left:37.6px;top:479.6px;font-size:5.5px;line-height:6.60px;color:#222;font-weight:normal;white-space:nowrap;">392.542</div>
<div style="position:absolute;left:95.4px;top:479.6px;font-size:5.5px;line-height:6.60px;color:#222;font-weight:normal;white-space:nowrap;">167.448</div>
<div style="position:absolute;left:153.4px;top:479.6px;font-size:5.5px;line-height:6.60px;color:#222;font-weight:normal;white-space:nowrap;">355.036</div>
<div style="position:absolute;left:212px;top:479.6px;font-size:5.5px;line-height:6.60px;color:#222;font-weight:normal;white-space:nowrap;">64.750</div>
<div style="position:absolute;left:2.6px;top:479.9px;width:6px;height:6px;background:#fafafa;border-radius:.5px"><svg style="position:absolute;left:0.5px;top:0.5px" width="5" height="5" viewBox="0 0 5 5"><path d="M0.6 2.4L2 4.1L4.5 0.5" fill="none" stroke="#111" stroke-width="1.05"/></svg></div>
<div style="position:absolute;left:10.8px;top:487.3px;font-size:5.5px;line-height:6.60px;color:#222;font-weight:normal;white-space:nowrap;">4</div>
<div style="position:absolute;left:37.6px;top:487.3px;font-size:5.5px;line-height:6.60px;color:#222;font-weight:normal;white-space:nowrap;">609.479</div>
<div style="position:absolute;left:95.4px;top:487.3px;font-size:5.5px;line-height:6.60px;color:#222;font-weight:normal;white-space:nowrap;">331.256</div>
<div style="position:absolute;left:153.4px;top:487.3px;font-size:5.5px;line-height:6.60px;color:#222;font-weight:normal;white-space:nowrap;">511.600</div>
<div style="position:absolute;left:212px;top:487.3px;font-size:5.5px;line-height:6.60px;color:#222;font-weight:normal;white-space:nowrap;">57.077</div>
<div style="position:absolute;left:2.6px;top:487.59999999999997px;width:6px;height:6px;background:#fafafa;border-radius:.5px"><svg style="position:absolute;left:0.5px;top:0.5px" width="5" height="5" viewBox="0 0 5 5"><path d="M0.6 2.4L2 4.1L4.5 0.5" fill="none" stroke="#111" stroke-width="1.05"/></svg></div>
<div style="position:absolute;left:630.4px;top:455.2px;width:6.6px;height:41.8px;background:#202020"></div>
<div style="position:absolute;left:631px;top:463px;width:5.2px;height:24px;background:linear-gradient(90deg,#525252,#444);border-radius:1px"></div>
<svg style="position:absolute;left:631.8px;top:458px" width="3.4" height="2.6" viewBox="0 0 3.4 2.6"><path d="M0 2.6h3.4L1.7 0z" fill="#fff"/></svg>
<svg style="position:absolute;left:631.8px;top:493px" width="3.4" height="2.6" viewBox="0 0 3.4 2.6"><path d="M0 0h3.4L1.7 2.6z" fill="#fff"/></svg>
</body></html>
